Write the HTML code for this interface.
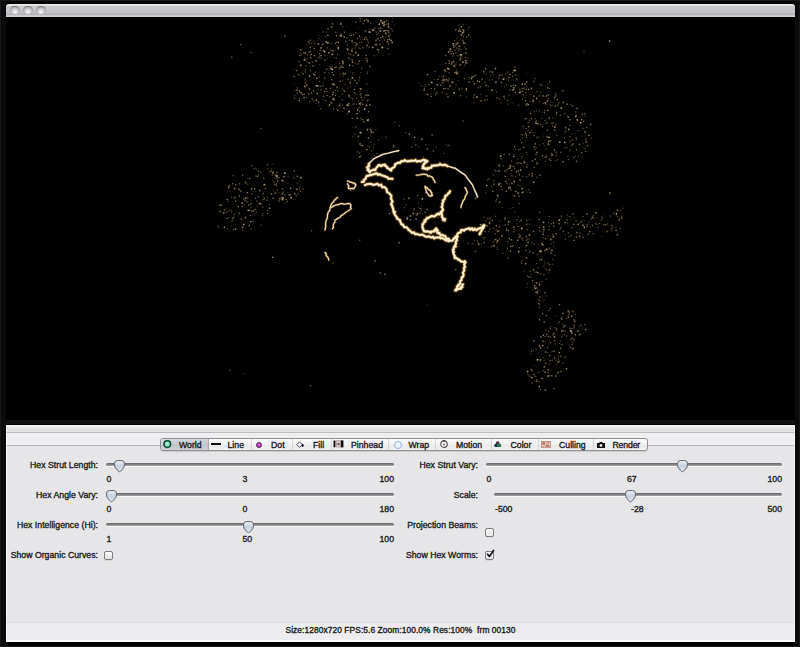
<!DOCTYPE html>
<html><head><meta charset="utf-8">
<style>
*{margin:0;padding:0;box-sizing:border-box}
html,body{width:800px;height:647px;overflow:hidden;background:#0b0a0c}
body{position:relative;font-family:"Liberation Sans",sans-serif;color:#1e1e1e}
.a{position:absolute}
.t{position:absolute;font-size:8.7px;line-height:10px;white-space:pre;letter-spacing:0.02px;color:#1c1c1c;-webkit-text-stroke:0.35px #1c1c1c}
.r{text-align:right}
#title{left:6px;top:4px;width:789px;height:13px;border-radius:3px 3px 0 0;
 background:linear-gradient(#ededef 0px,#e2e2e4 1.5px,#cac9cc 2.5px,#c5c4c7 8px,#b5b4b7 10.5px,#cbcacd 11.5px,#d2d1d4 13px)}
.btn{position:absolute;top:6px;width:7.8px;height:7.8px;border-radius:50%;
 background:radial-gradient(circle at 50% 70%,#f8f8fa 0,#dcdce0 35%,#b4b4b8 70%,#8c8c90 100%);
 box-shadow:0 -0.5px 0 0.5px #7c7c80}
#viz{left:6px;top:17px;width:789px;height:408px;background:#000;overflow:hidden}
#panel{left:6px;top:425px;width:789px;height:216px;background:#e6e5e7}
.track{position:absolute;height:3.5px;border-radius:2px;background:linear-gradient(#646466,#858587 55%,#a8a8aa);box-shadow:0 1px 0 rgba(255,255,255,0.8)}
.thumb{position:absolute;width:11px;height:12px}
.cb{position:absolute;width:9px;height:9px;border-radius:2px;border:1px solid #7e7e82;background:linear-gradient(#f8f8f8,#e4e4e6);box-shadow:0 0.5px 0.5px rgba(0,0,0,0.15)}
.seg{position:absolute;top:438px;height:13px}
.div{position:absolute;top:439px;width:1px;height:11px;background:#d4d4d6}
</style></head><body>
<div class="a" style="left:0;top:0;width:800px;height:1px;background:#1a191c"></div>
<div class="a" style="left:0;top:0;width:1px;height:647px;background:#18171a"></div>
<div class="a" style="left:799px;top:0;width:1px;height:647px;background:#18171a"></div>
<div class="a" style="left:0;top:646px;width:800px;height:1px;background:#19181b"></div>
<div class="a" style="left:6px;top:1px;width:789px;height:645px;background:#000"></div>
<div id="title" class="a">
 <div class="btn" style="left:5.4px;top:2.6px"></div>
 <div class="btn" style="left:18.2px;top:2.6px"></div>
 <div class="btn" style="left:31px;top:2.6px"></div>
</div>
<div id="viz" class="a"></div>
<svg class="a" style="left:0;top:0" width="800" height="647" viewBox="0 0 800 647">
<circle cx="323.1" cy="31.9" r="0.6" fill="#c8a878" fill-opacity="0.68"/><circle cx="348.5" cy="53.3" r="0.6" fill="#e0cca8" fill-opacity="0.35"/><circle cx="335.4" cy="95.5" r="0.8" fill="#b89868" fill-opacity="0.64"/><circle cx="353.0" cy="104.1" r="0.6" fill="#e0cca8" fill-opacity="0.75"/><circle cx="392.8" cy="21.6" r="0.8" fill="#a88c68" fill-opacity="0.33"/><circle cx="323.5" cy="96.3" r="0.9" fill="#c8a878" fill-opacity="0.41"/><circle cx="355.6" cy="52.6" r="0.9" fill="#b89868" fill-opacity="0.63"/><circle cx="359.5" cy="61.0" r="0.7" fill="#e0cca8" fill-opacity="0.66"/><circle cx="338.2" cy="42.6" r="0.9" fill="#d8bc90" fill-opacity="0.33"/><circle cx="310.4" cy="70.5" r="0.7" fill="#a88c68" fill-opacity="0.66"/><circle cx="367.1" cy="45.0" r="0.7" fill="#d8bc90" fill-opacity="0.70"/><circle cx="335.2" cy="90.3" r="0.6" fill="#c8a878" fill-opacity="0.76"/><circle cx="294.4" cy="76.6" r="0.8" fill="#c8a878" fill-opacity="0.37"/><circle cx="379.9" cy="44.4" r="0.8" fill="#d8bc90" fill-opacity="0.45"/><circle cx="353.5" cy="55.4" r="0.9" fill="#e0cca8" fill-opacity="0.42"/><circle cx="342.9" cy="80.9" r="0.7" fill="#a88c68" fill-opacity="0.42"/><circle cx="372.7" cy="47.3" r="0.9" fill="#e0cca8" fill-opacity="0.66"/><circle cx="297.4" cy="90.3" r="0.7" fill="#b89868" fill-opacity="0.51"/><circle cx="333.0" cy="99.6" r="0.8" fill="#d8bc90" fill-opacity="0.41"/><circle cx="349.2" cy="94.9" r="0.7" fill="#c8a878" fill-opacity="0.60"/><circle cx="315.7" cy="60.8" r="0.8" fill="#a88c68" fill-opacity="0.39"/><circle cx="390.4" cy="34.4" r="0.6" fill="#c8a878" fill-opacity="0.62"/><circle cx="312.6" cy="62.1" r="0.7" fill="#b89868" fill-opacity="0.59"/><circle cx="332.1" cy="69.4" r="0.9" fill="#e0cca8" fill-opacity="0.80"/><circle cx="343.2" cy="74.5" r="0.6" fill="#d8bc90" fill-opacity="0.49"/><circle cx="333.6" cy="57.5" r="0.6" fill="#c8a878" fill-opacity="0.44"/><circle cx="305.6" cy="52.9" r="0.7" fill="#e0cca8" fill-opacity="0.65"/><circle cx="353.8" cy="34.8" r="0.7" fill="#d8bc90" fill-opacity="0.54"/><circle cx="332.5" cy="23.8" r="0.9" fill="#e0cca8" fill-opacity="0.45"/><circle cx="339.5" cy="63.6" r="0.9" fill="#b89868" fill-opacity="0.40"/><circle cx="326.3" cy="41.8" r="0.9" fill="#e0cca8" fill-opacity="0.72"/><circle cx="344.4" cy="32.2" r="0.6" fill="#d8bc90" fill-opacity="0.67"/><circle cx="347.4" cy="105.1" r="0.9" fill="#d8bc90" fill-opacity="0.72"/><circle cx="319.3" cy="56.1" r="0.7" fill="#a88c68" fill-opacity="0.62"/><circle cx="344.5" cy="91.5" r="0.6" fill="#a88c68" fill-opacity="0.54"/><circle cx="313.2" cy="66.6" r="0.9" fill="#a88c68" fill-opacity="0.41"/><circle cx="319.6" cy="81.3" r="0.6" fill="#b89868" fill-opacity="0.70"/><circle cx="313.5" cy="41.2" r="0.7" fill="#a88c68" fill-opacity="0.43"/><circle cx="356.4" cy="98.5" r="0.6" fill="#d8bc90" fill-opacity="0.61"/><circle cx="361.1" cy="93.6" r="0.8" fill="#b89868" fill-opacity="0.52"/><circle cx="369.9" cy="66.5" r="0.9" fill="#c8a878" fill-opacity="0.47"/><circle cx="327.1" cy="91.4" r="0.7" fill="#a88c68" fill-opacity="0.53"/><circle cx="331.5" cy="103.7" r="0.6" fill="#e0cca8" fill-opacity="0.38"/><circle cx="308.8" cy="93.8" r="0.9" fill="#e0cca8" fill-opacity="0.45"/><circle cx="326.7" cy="69.2" r="0.8" fill="#d8bc90" fill-opacity="0.59"/><circle cx="340.1" cy="106.0" r="0.7" fill="#c8a878" fill-opacity="0.30"/><circle cx="375.9" cy="40.3" r="0.9" fill="#a88c68" fill-opacity="0.59"/><circle cx="314.9" cy="75.0" r="0.7" fill="#e0cca8" fill-opacity="0.62"/><circle cx="322.1" cy="58.0" r="0.6" fill="#c8a878" fill-opacity="0.37"/><circle cx="330.7" cy="102.5" r="0.6" fill="#d8bc90" fill-opacity="0.57"/><circle cx="340.3" cy="35.8" r="0.7" fill="#d8bc90" fill-opacity="0.44"/><circle cx="307.4" cy="58.9" r="0.6" fill="#b89868" fill-opacity="0.37"/><circle cx="319.8" cy="64.7" r="0.7" fill="#a88c68" fill-opacity="0.42"/><circle cx="301.1" cy="72.0" r="0.6" fill="#d8bc90" fill-opacity="0.35"/><circle cx="350.7" cy="86.7" r="0.8" fill="#c8a878" fill-opacity="0.34"/><circle cx="349.9" cy="64.7" r="0.7" fill="#a88c68" fill-opacity="0.46"/><circle cx="331.1" cy="68.3" r="0.9" fill="#e0cca8" fill-opacity="0.63"/><circle cx="364.5" cy="98.1" r="0.8" fill="#c8a878" fill-opacity="0.33"/><circle cx="348.9" cy="103.7" r="0.9" fill="#d8bc90" fill-opacity="0.58"/><circle cx="304.3" cy="60.0" r="0.9" fill="#b89868" fill-opacity="0.62"/><circle cx="298.7" cy="74.7" r="0.7" fill="#c8a878" fill-opacity="0.67"/><circle cx="305.3" cy="83.0" r="0.7" fill="#b89868" fill-opacity="0.43"/><circle cx="336.1" cy="63.0" r="0.8" fill="#b89868" fill-opacity="0.30"/><circle cx="304.5" cy="58.0" r="0.6" fill="#e0cca8" fill-opacity="0.55"/><circle cx="310.3" cy="47.5" r="0.8" fill="#a88c68" fill-opacity="0.68"/><circle cx="349.9" cy="59.3" r="0.7" fill="#e0cca8" fill-opacity="0.38"/><circle cx="361.6" cy="68.5" r="0.6" fill="#c8a878" fill-opacity="0.75"/><circle cx="293.9" cy="91.2" r="0.6" fill="#c8a878" fill-opacity="0.32"/><circle cx="334.7" cy="100.2" r="0.6" fill="#c8a878" fill-opacity="0.66"/><circle cx="350.1" cy="83.2" r="0.9" fill="#c8a878" fill-opacity="0.41"/><circle cx="366.9" cy="60.3" r="0.9" fill="#b89868" fill-opacity="0.72"/><circle cx="360.2" cy="94.4" r="0.8" fill="#b89868" fill-opacity="0.34"/><circle cx="294.7" cy="98.2" r="0.7" fill="#a88c68" fill-opacity="0.67"/><circle cx="347.4" cy="104.6" r="0.8" fill="#c8a878" fill-opacity="0.51"/><circle cx="345.9" cy="41.6" r="0.7" fill="#e0cca8" fill-opacity="0.51"/><circle cx="322.6" cy="44.7" r="0.7" fill="#a88c68" fill-opacity="0.74"/><circle cx="341.7" cy="35.6" r="0.6" fill="#e0cca8" fill-opacity="0.51"/><circle cx="367.3" cy="71.8" r="0.9" fill="#a88c68" fill-opacity="0.32"/><circle cx="388.3" cy="26.3" r="0.7" fill="#e0cca8" fill-opacity="0.79"/><circle cx="339.2" cy="96.8" r="0.8" fill="#a88c68" fill-opacity="0.31"/><circle cx="324.7" cy="91.3" r="0.7" fill="#e0cca8" fill-opacity="0.66"/><circle cx="333.3" cy="51.1" r="0.6" fill="#e0cca8" fill-opacity="0.74"/><circle cx="297.3" cy="87.9" r="0.7" fill="#b89868" fill-opacity="0.68"/><circle cx="301.3" cy="92.8" r="0.9" fill="#b89868" fill-opacity="0.72"/><circle cx="318.6" cy="43.7" r="0.8" fill="#a88c68" fill-opacity="0.50"/><circle cx="305.9" cy="65.9" r="0.8" fill="#b89868" fill-opacity="0.38"/><circle cx="324.6" cy="51.5" r="0.9" fill="#e0cca8" fill-opacity="0.76"/><circle cx="340.3" cy="67.6" r="0.8" fill="#b89868" fill-opacity="0.63"/><circle cx="299.8" cy="55.5" r="0.8" fill="#c8a878" fill-opacity="0.65"/><circle cx="319.0" cy="38.6" r="0.7" fill="#e0cca8" fill-opacity="0.46"/><circle cx="362.8" cy="100.4" r="0.8" fill="#d8bc90" fill-opacity="0.32"/><circle cx="391.8" cy="29.1" r="0.8" fill="#c8a878" fill-opacity="0.42"/><circle cx="297.3" cy="92.8" r="0.7" fill="#a88c68" fill-opacity="0.68"/><circle cx="368.3" cy="95.2" r="0.7" fill="#d8bc90" fill-opacity="0.68"/><circle cx="344.0" cy="90.6" r="0.8" fill="#b89868" fill-opacity="0.67"/><circle cx="349.2" cy="96.7" r="0.8" fill="#b89868" fill-opacity="0.68"/><circle cx="307.6" cy="54.7" r="0.6" fill="#b89868" fill-opacity="0.64"/><circle cx="345.4" cy="73.4" r="0.8" fill="#d8bc90" fill-opacity="0.58"/><circle cx="341.8" cy="66.9" r="0.6" fill="#b89868" fill-opacity="0.77"/><circle cx="368.4" cy="42.8" r="0.8" fill="#c8a878" fill-opacity="0.56"/><circle cx="365.4" cy="30.9" r="0.9" fill="#a88c68" fill-opacity="0.65"/><circle cx="337.6" cy="54.3" r="0.6" fill="#c8a878" fill-opacity="0.47"/><circle cx="358.0" cy="27.6" r="0.6" fill="#a88c68" fill-opacity="0.33"/><circle cx="366.9" cy="46.5" r="0.7" fill="#d8bc90" fill-opacity="0.32"/><circle cx="359.0" cy="80.1" r="0.7" fill="#b89868" fill-opacity="0.67"/><circle cx="342.5" cy="61.5" r="0.8" fill="#b89868" fill-opacity="0.79"/><circle cx="388.8" cy="36.3" r="0.8" fill="#d8bc90" fill-opacity="0.70"/><circle cx="338.2" cy="49.3" r="0.7" fill="#a88c68" fill-opacity="0.60"/><circle cx="313.8" cy="74.3" r="0.7" fill="#e0cca8" fill-opacity="0.76"/><circle cx="390.4" cy="28.4" r="0.7" fill="#d8bc90" fill-opacity="0.34"/><circle cx="313.5" cy="100.7" r="0.8" fill="#c8a878" fill-opacity="0.46"/><circle cx="338.3" cy="48.3" r="0.8" fill="#e0cca8" fill-opacity="0.79"/><circle cx="327.0" cy="95.5" r="0.8" fill="#d8bc90" fill-opacity="0.53"/><circle cx="380.8" cy="28.2" r="0.9" fill="#a88c68" fill-opacity="0.70"/><circle cx="382.0" cy="47.2" r="0.9" fill="#b89868" fill-opacity="0.55"/><circle cx="327.4" cy="58.7" r="0.6" fill="#c8a878" fill-opacity="0.32"/><circle cx="299.3" cy="100.7" r="0.7" fill="#d8bc90" fill-opacity="0.75"/><circle cx="314.3" cy="43.1" r="0.6" fill="#c8a878" fill-opacity="0.66"/><circle cx="332.2" cy="103.0" r="0.9" fill="#a88c68" fill-opacity="0.31"/><circle cx="358.6" cy="101.0" r="0.7" fill="#c8a878" fill-opacity="0.36"/><circle cx="364.5" cy="20.8" r="0.7" fill="#e0cca8" fill-opacity="0.69"/><circle cx="384.1" cy="31.0" r="0.9" fill="#c8a878" fill-opacity="0.69"/><circle cx="322.9" cy="86.0" r="0.7" fill="#b89868" fill-opacity="0.79"/><circle cx="355.9" cy="45.5" r="0.9" fill="#b89868" fill-opacity="0.47"/><circle cx="309.9" cy="101.5" r="0.6" fill="#d8bc90" fill-opacity="0.67"/><circle cx="337.2" cy="32.7" r="0.7" fill="#d8bc90" fill-opacity="0.31"/><circle cx="310.1" cy="40.3" r="0.7" fill="#d8bc90" fill-opacity="0.69"/><circle cx="365.4" cy="58.1" r="0.6" fill="#b89868" fill-opacity="0.65"/><circle cx="331.1" cy="50.5" r="0.7" fill="#e0cca8" fill-opacity="0.68"/><circle cx="387.1" cy="30.4" r="0.6" fill="#b89868" fill-opacity="0.75"/><circle cx="379.5" cy="40.5" r="0.6" fill="#d8bc90" fill-opacity="0.58"/><circle cx="336.2" cy="58.2" r="0.8" fill="#d8bc90" fill-opacity="0.41"/><circle cx="384.6" cy="21.8" r="0.9" fill="#d8bc90" fill-opacity="0.64"/><circle cx="333.0" cy="99.0" r="0.7" fill="#e0cca8" fill-opacity="0.63"/><circle cx="392.2" cy="42.5" r="0.9" fill="#c8a878" fill-opacity="0.69"/><circle cx="348.1" cy="79.6" r="0.7" fill="#c8a878" fill-opacity="0.71"/><circle cx="354.3" cy="89.4" r="0.6" fill="#d8bc90" fill-opacity="0.72"/><circle cx="294.7" cy="95.8" r="0.7" fill="#d8bc90" fill-opacity="0.42"/><circle cx="358.5" cy="48.0" r="0.6" fill="#e0cca8" fill-opacity="0.36"/><circle cx="356.9" cy="83.2" r="0.9" fill="#e0cca8" fill-opacity="0.45"/><circle cx="343.2" cy="73.2" r="0.9" fill="#d8bc90" fill-opacity="0.43"/><circle cx="324.8" cy="60.0" r="0.8" fill="#b89868" fill-opacity="0.75"/><circle cx="318.2" cy="40.5" r="0.6" fill="#b89868" fill-opacity="0.53"/><circle cx="340.1" cy="81.3" r="0.8" fill="#b89868" fill-opacity="0.71"/><circle cx="359.5" cy="103.8" r="0.6" fill="#a88c68" fill-opacity="0.31"/><circle cx="324.5" cy="55.8" r="0.8" fill="#c8a878" fill-opacity="0.33"/><circle cx="344.6" cy="37.3" r="0.6" fill="#b89868" fill-opacity="0.49"/><circle cx="376.0" cy="44.2" r="0.8" fill="#c8a878" fill-opacity="0.65"/><circle cx="319.1" cy="105.7" r="0.6" fill="#d8bc90" fill-opacity="0.32"/><circle cx="310.1" cy="51.7" r="0.8" fill="#c8a878" fill-opacity="0.79"/><circle cx="306.8" cy="61.4" r="0.7" fill="#c8a878" fill-opacity="0.39"/><circle cx="389.2" cy="54.3" r="0.8" fill="#d8bc90" fill-opacity="0.32"/><circle cx="366.4" cy="19.8" r="0.8" fill="#e0cca8" fill-opacity="0.53"/><circle cx="329.0" cy="49.4" r="0.6" fill="#a88c68" fill-opacity="0.39"/><circle cx="320.3" cy="50.6" r="0.7" fill="#e0cca8" fill-opacity="0.57"/><circle cx="387.4" cy="41.5" r="0.8" fill="#c8a878" fill-opacity="0.76"/><circle cx="329.6" cy="104.9" r="0.8" fill="#d8bc90" fill-opacity="0.75"/><circle cx="379.4" cy="24.2" r="0.9" fill="#e0cca8" fill-opacity="0.72"/><circle cx="370.6" cy="22.9" r="0.7" fill="#e0cca8" fill-opacity="0.48"/><circle cx="385.6" cy="37.0" r="0.7" fill="#a88c68" fill-opacity="0.39"/><circle cx="328.6" cy="42.9" r="0.7" fill="#c8a878" fill-opacity="0.65"/><circle cx="316.5" cy="86.0" r="0.9" fill="#e0cca8" fill-opacity="0.45"/><circle cx="388.4" cy="24.0" r="0.9" fill="#a88c68" fill-opacity="0.78"/><circle cx="327.6" cy="43.1" r="0.7" fill="#b89868" fill-opacity="0.63"/><circle cx="387.9" cy="31.8" r="0.6" fill="#a88c68" fill-opacity="0.56"/><circle cx="352.2" cy="51.0" r="0.7" fill="#c8a878" fill-opacity="0.54"/><circle cx="372.7" cy="30.1" r="0.9" fill="#e0cca8" fill-opacity="0.71"/><circle cx="299.3" cy="61.7" r="0.9" fill="#b89868" fill-opacity="0.45"/><circle cx="311.6" cy="54.4" r="0.6" fill="#d8bc90" fill-opacity="0.77"/><circle cx="367.1" cy="95.0" r="0.7" fill="#e0cca8" fill-opacity="0.47"/><circle cx="375.2" cy="44.7" r="0.8" fill="#c8a878" fill-opacity="0.36"/><circle cx="366.8" cy="39.0" r="0.7" fill="#c8a878" fill-opacity="0.65"/><circle cx="304.0" cy="98.4" r="0.7" fill="#b89868" fill-opacity="0.55"/><circle cx="344.1" cy="36.7" r="0.8" fill="#e0cca8" fill-opacity="0.65"/><circle cx="342.4" cy="88.9" r="0.7" fill="#a88c68" fill-opacity="0.33"/><circle cx="318.1" cy="89.4" r="0.6" fill="#d8bc90" fill-opacity="0.43"/><circle cx="352.5" cy="77.8" r="0.9" fill="#d8bc90" fill-opacity="0.73"/><circle cx="315.5" cy="72.2" r="0.6" fill="#d8bc90" fill-opacity="0.46"/><circle cx="359.9" cy="37.4" r="0.6" fill="#a88c68" fill-opacity="0.46"/><circle cx="330.4" cy="68.2" r="0.6" fill="#c8a878" fill-opacity="0.78"/><circle cx="305.3" cy="83.4" r="0.7" fill="#a88c68" fill-opacity="0.39"/><circle cx="320.8" cy="108.7" r="0.8" fill="#d8bc90" fill-opacity="0.42"/><circle cx="332.7" cy="50.5" r="0.7" fill="#d8bc90" fill-opacity="0.44"/><circle cx="327.6" cy="35.3" r="0.8" fill="#e0cca8" fill-opacity="0.43"/><circle cx="329.8" cy="96.5" r="0.8" fill="#b89868" fill-opacity="0.53"/><circle cx="341.1" cy="34.1" r="0.7" fill="#e0cca8" fill-opacity="0.76"/><circle cx="359.6" cy="103.6" r="0.9" fill="#d8bc90" fill-opacity="0.74"/><circle cx="329.8" cy="66.5" r="0.6" fill="#c8a878" fill-opacity="0.62"/><circle cx="346.5" cy="105.1" r="0.6" fill="#b89868" fill-opacity="0.36"/><circle cx="376.1" cy="31.9" r="0.9" fill="#a88c68" fill-opacity="0.43"/><circle cx="332.8" cy="94.6" r="0.9" fill="#e0cca8" fill-opacity="0.50"/><circle cx="310.2" cy="55.1" r="0.6" fill="#c8a878" fill-opacity="0.66"/><circle cx="294.3" cy="69.5" r="0.6" fill="#d8bc90" fill-opacity="0.30"/><circle cx="374.6" cy="27.9" r="0.9" fill="#d8bc90" fill-opacity="0.32"/><circle cx="352.3" cy="48.5" r="0.9" fill="#a88c68" fill-opacity="0.35"/><circle cx="331.7" cy="79.8" r="0.7" fill="#c8a878" fill-opacity="0.73"/><circle cx="341.3" cy="36.1" r="0.9" fill="#e0cca8" fill-opacity="0.50"/><circle cx="336.5" cy="35.5" r="0.8" fill="#b89868" fill-opacity="0.75"/><circle cx="305.6" cy="59.7" r="0.6" fill="#a88c68" fill-opacity="0.78"/><circle cx="355.7" cy="22.2" r="0.6" fill="#d8bc90" fill-opacity="0.73"/><circle cx="340.8" cy="23.9" r="0.9" fill="#d8bc90" fill-opacity="0.72"/><circle cx="394.1" cy="24.9" r="0.6" fill="#a88c68" fill-opacity="0.42"/><circle cx="368.6" cy="99.8" r="0.7" fill="#b89868" fill-opacity="0.38"/><circle cx="342.5" cy="105.3" r="0.7" fill="#d8bc90" fill-opacity="0.45"/><circle cx="370.2" cy="32.2" r="0.9" fill="#e0cca8" fill-opacity="0.49"/><circle cx="369.2" cy="32.0" r="0.9" fill="#c8a878" fill-opacity="0.71"/><circle cx="309.5" cy="42.8" r="0.8" fill="#e0cca8" fill-opacity="0.36"/><circle cx="362.8" cy="104.3" r="0.9" fill="#a88c68" fill-opacity="0.64"/><circle cx="300.4" cy="65.5" r="0.9" fill="#a88c68" fill-opacity="0.55"/><circle cx="356.6" cy="104.1" r="0.6" fill="#c8a878" fill-opacity="0.64"/><circle cx="356.1" cy="53.0" r="0.8" fill="#d8bc90" fill-opacity="0.44"/><circle cx="326.0" cy="89.1" r="0.9" fill="#e0cca8" fill-opacity="0.43"/><circle cx="368.1" cy="21.7" r="0.7" fill="#e0cca8" fill-opacity="0.58"/><circle cx="350.9" cy="79.5" r="0.6" fill="#e0cca8" fill-opacity="0.34"/><circle cx="348.8" cy="57.9" r="0.8" fill="#a88c68" fill-opacity="0.70"/><circle cx="360.3" cy="21.1" r="0.8" fill="#a88c68" fill-opacity="0.53"/><circle cx="301.6" cy="54.8" r="0.9" fill="#c8a878" fill-opacity="0.37"/><circle cx="349.2" cy="35.6" r="0.6" fill="#e0cca8" fill-opacity="0.33"/><circle cx="303.0" cy="73.9" r="0.9" fill="#c8a878" fill-opacity="0.53"/><circle cx="335.4" cy="43.3" r="0.6" fill="#b89868" fill-opacity="0.76"/><circle cx="346.8" cy="48.7" r="0.8" fill="#e0cca8" fill-opacity="0.31"/><circle cx="318.8" cy="102.1" r="0.8" fill="#a88c68" fill-opacity="0.70"/><circle cx="336.3" cy="42.2" r="0.6" fill="#b89868" fill-opacity="0.75"/><circle cx="388.9" cy="35.2" r="0.8" fill="#b89868" fill-opacity="0.38"/><circle cx="343.3" cy="76.0" r="0.8" fill="#b89868" fill-opacity="0.42"/><circle cx="327.2" cy="47.9" r="0.7" fill="#b89868" fill-opacity="0.78"/><circle cx="367.4" cy="58.6" r="0.7" fill="#b89868" fill-opacity="0.57"/><circle cx="323.3" cy="82.7" r="0.7" fill="#b89868" fill-opacity="0.41"/><circle cx="361.5" cy="42.3" r="0.9" fill="#c8a878" fill-opacity="0.42"/><circle cx="319.3" cy="77.0" r="0.7" fill="#b89868" fill-opacity="0.54"/><circle cx="381.4" cy="22.2" r="0.9" fill="#a88c68" fill-opacity="0.41"/><circle cx="369.2" cy="47.2" r="0.8" fill="#c8a878" fill-opacity="0.46"/><circle cx="312.3" cy="98.8" r="0.9" fill="#c8a878" fill-opacity="0.41"/><circle cx="337.2" cy="90.7" r="0.8" fill="#c8a878" fill-opacity="0.45"/><circle cx="333.5" cy="84.0" r="0.7" fill="#e0cca8" fill-opacity="0.67"/><circle cx="316.9" cy="78.2" r="0.9" fill="#e0cca8" fill-opacity="0.51"/><circle cx="326.6" cy="32.0" r="0.8" fill="#e0cca8" fill-opacity="0.33"/><circle cx="360.7" cy="72.8" r="0.7" fill="#b89868" fill-opacity="0.37"/><circle cx="293.8" cy="76.2" r="0.7" fill="#a88c68" fill-opacity="0.47"/><circle cx="354.6" cy="92.6" r="0.6" fill="#e0cca8" fill-opacity="0.38"/><circle cx="367.7" cy="40.0" r="0.6" fill="#e0cca8" fill-opacity="0.54"/><circle cx="317.9" cy="85.8" r="0.9" fill="#e0cca8" fill-opacity="0.69"/><circle cx="333.2" cy="92.5" r="0.9" fill="#d8bc90" fill-opacity="0.41"/><circle cx="346.6" cy="37.9" r="0.6" fill="#b89868" fill-opacity="0.65"/><circle cx="376.9" cy="34.5" r="0.8" fill="#d8bc90" fill-opacity="0.43"/><circle cx="342.3" cy="94.2" r="0.7" fill="#b89868" fill-opacity="0.60"/><circle cx="325.7" cy="100.7" r="0.8" fill="#a88c68" fill-opacity="0.42"/><circle cx="318.6" cy="35.7" r="0.6" fill="#a88c68" fill-opacity="0.42"/><circle cx="305.3" cy="79.1" r="0.7" fill="#b89868" fill-opacity="0.74"/><circle cx="360.9" cy="88.9" r="0.7" fill="#c8a878" fill-opacity="0.60"/><circle cx="332.6" cy="54.2" r="0.9" fill="#d8bc90" fill-opacity="0.51"/><circle cx="382.9" cy="23.2" r="0.9" fill="#d8bc90" fill-opacity="0.41"/><circle cx="329.7" cy="102.2" r="0.6" fill="#a88c68" fill-opacity="0.31"/><circle cx="345.3" cy="84.1" r="0.7" fill="#b89868" fill-opacity="0.64"/><circle cx="328.9" cy="52.7" r="0.9" fill="#d8bc90" fill-opacity="0.70"/><circle cx="360.2" cy="88.9" r="0.8" fill="#b89868" fill-opacity="0.80"/><circle cx="304.5" cy="59.8" r="0.8" fill="#a88c68" fill-opacity="0.52"/><circle cx="308.5" cy="41.8" r="0.7" fill="#a88c68" fill-opacity="0.75"/><circle cx="314.3" cy="48.5" r="0.8" fill="#b89868" fill-opacity="0.67"/><circle cx="328.1" cy="35.6" r="0.7" fill="#e0cca8" fill-opacity="0.53"/><circle cx="305.0" cy="53.5" r="0.7" fill="#e0cca8" fill-opacity="0.41"/><circle cx="367.4" cy="61.9" r="0.7" fill="#e0cca8" fill-opacity="0.48"/><circle cx="330.5" cy="88.2" r="0.8" fill="#d8bc90" fill-opacity="0.52"/><circle cx="357.9" cy="63.8" r="0.9" fill="#a88c68" fill-opacity="0.52"/><circle cx="334.3" cy="85.0" r="0.9" fill="#d8bc90" fill-opacity="0.48"/><circle cx="348.1" cy="88.0" r="0.7" fill="#a88c68" fill-opacity="0.53"/><circle cx="365.7" cy="95.3" r="0.8" fill="#b89868" fill-opacity="0.70"/><circle cx="355.4" cy="63.6" r="0.6" fill="#d8bc90" fill-opacity="0.35"/><circle cx="301.0" cy="53.3" r="0.7" fill="#e0cca8" fill-opacity="0.43"/><circle cx="353.0" cy="43.0" r="0.8" fill="#b89868" fill-opacity="0.34"/><circle cx="352.0" cy="51.1" r="0.9" fill="#e0cca8" fill-opacity="0.34"/><circle cx="309.5" cy="76.1" r="0.9" fill="#d8bc90" fill-opacity="0.74"/><circle cx="344.0" cy="108.4" r="0.8" fill="#b89868" fill-opacity="0.66"/><circle cx="309.5" cy="89.0" r="0.9" fill="#a88c68" fill-opacity="0.66"/><circle cx="296.7" cy="70.3" r="0.7" fill="#d8bc90" fill-opacity="0.44"/><circle cx="344.7" cy="74.5" r="0.6" fill="#a88c68" fill-opacity="0.76"/><circle cx="333.6" cy="108.9" r="0.7" fill="#d8bc90" fill-opacity="0.45"/><circle cx="336.0" cy="93.4" r="0.7" fill="#b89868" fill-opacity="0.31"/><circle cx="321.1" cy="55.6" r="0.9" fill="#e0cca8" fill-opacity="0.58"/><circle cx="332.6" cy="84.1" r="0.9" fill="#b89868" fill-opacity="0.77"/><circle cx="316.2" cy="85.3" r="0.6" fill="#e0cca8" fill-opacity="0.69"/><circle cx="311.4" cy="93.0" r="0.7" fill="#d8bc90" fill-opacity="0.64"/><circle cx="304.7" cy="86.4" r="0.9" fill="#d8bc90" fill-opacity="0.77"/><circle cx="339.8" cy="76.5" r="0.6" fill="#d8bc90" fill-opacity="0.31"/><circle cx="328.7" cy="73.0" r="0.8" fill="#b89868" fill-opacity="0.32"/><circle cx="337.4" cy="45.4" r="0.6" fill="#c8a878" fill-opacity="0.39"/><circle cx="377.9" cy="49.7" r="0.9" fill="#e0cca8" fill-opacity="0.63"/><circle cx="327.7" cy="42.8" r="0.8" fill="#d8bc90" fill-opacity="0.75"/><circle cx="318.3" cy="44.0" r="0.9" fill="#a88c68" fill-opacity="0.67"/><circle cx="333.3" cy="75.0" r="0.7" fill="#e0cca8" fill-opacity="0.78"/><circle cx="299.6" cy="91.9" r="0.8" fill="#b89868" fill-opacity="0.64"/><circle cx="304.3" cy="94.3" r="0.7" fill="#c8a878" fill-opacity="0.57"/><circle cx="359.3" cy="42.6" r="0.7" fill="#d8bc90" fill-opacity="0.45"/><circle cx="313.5" cy="90.8" r="0.8" fill="#b89868" fill-opacity="0.79"/><circle cx="304.1" cy="97.3" r="0.8" fill="#b89868" fill-opacity="0.71"/><circle cx="360.7" cy="95.7" r="0.6" fill="#e0cca8" fill-opacity="0.31"/><circle cx="306.5" cy="81.3" r="0.6" fill="#d8bc90" fill-opacity="0.47"/><circle cx="333.8" cy="98.7" r="0.9" fill="#e0cca8" fill-opacity="0.54"/><circle cx="335.6" cy="32.3" r="0.8" fill="#b89868" fill-opacity="0.47"/><circle cx="350.9" cy="97.7" r="0.6" fill="#c8a878" fill-opacity="0.53"/><circle cx="336.2" cy="66.1" r="0.6" fill="#a88c68" fill-opacity="0.40"/><circle cx="330.0" cy="56.9" r="0.7" fill="#b89868" fill-opacity="0.33"/><circle cx="359.6" cy="77.5" r="0.7" fill="#c8a878" fill-opacity="0.58"/><circle cx="357.6" cy="110.0" r="0.7" fill="#e0cca8" fill-opacity="0.79"/><circle cx="343.6" cy="62.7" r="0.6" fill="#d8bc90" fill-opacity="0.65"/><circle cx="323.3" cy="99.5" r="0.7" fill="#b89868" fill-opacity="0.40"/><circle cx="345.3" cy="91.7" r="0.7" fill="#a88c68" fill-opacity="0.33"/><circle cx="334.9" cy="67.6" r="0.7" fill="#e0cca8" fill-opacity="0.63"/><circle cx="374.1" cy="55.7" r="0.7" fill="#a88c68" fill-opacity="0.56"/><circle cx="340.2" cy="104.1" r="0.8" fill="#c8a878" fill-opacity="0.38"/><circle cx="323.4" cy="51.0" r="0.9" fill="#e0cca8" fill-opacity="0.45"/><circle cx="359.9" cy="91.4" r="0.6" fill="#d8bc90" fill-opacity="0.48"/><circle cx="361.3" cy="89.0" r="0.6" fill="#a88c68" fill-opacity="0.58"/><circle cx="353.0" cy="72.9" r="0.7" fill="#d8bc90" fill-opacity="0.52"/><circle cx="359.4" cy="35.9" r="0.7" fill="#d8bc90" fill-opacity="0.79"/><circle cx="369.6" cy="28.8" r="0.6" fill="#c8a878" fill-opacity="0.47"/><circle cx="360.1" cy="48.6" r="0.7" fill="#c8a878" fill-opacity="0.63"/><circle cx="347.6" cy="45.0" r="0.7" fill="#e0cca8" fill-opacity="0.40"/><circle cx="319.5" cy="53.7" r="0.7" fill="#d8bc90" fill-opacity="0.55"/><circle cx="296.9" cy="71.0" r="0.6" fill="#e0cca8" fill-opacity="0.51"/><circle cx="354.4" cy="104.0" r="0.7" fill="#d8bc90" fill-opacity="0.38"/><circle cx="331.8" cy="26.9" r="0.9" fill="#d8bc90" fill-opacity="0.58"/><circle cx="299.5" cy="98.5" r="0.8" fill="#b89868" fill-opacity="0.39"/><circle cx="364.6" cy="39.4" r="0.7" fill="#e0cca8" fill-opacity="0.69"/><circle cx="294.1" cy="84.6" r="0.6" fill="#b89868" fill-opacity="0.36"/><circle cx="363.2" cy="23.8" r="0.7" fill="#d8bc90" fill-opacity="0.46"/><circle cx="337.7" cy="110.3" r="0.9" fill="#b89868" fill-opacity="0.77"/><circle cx="368.2" cy="20.4" r="0.9" fill="#b89868" fill-opacity="0.59"/><circle cx="373.5" cy="30.0" r="0.9" fill="#a88c68" fill-opacity="0.71"/><circle cx="306.4" cy="97.4" r="0.7" fill="#c8a878" fill-opacity="0.49"/><circle cx="324.7" cy="72.7" r="0.8" fill="#c8a878" fill-opacity="0.52"/><circle cx="302.7" cy="94.3" r="0.9" fill="#b89868" fill-opacity="0.65"/><circle cx="352.2" cy="59.9" r="0.9" fill="#a88c68" fill-opacity="0.57"/><circle cx="355.2" cy="48.1" r="0.9" fill="#a88c68" fill-opacity="0.45"/><circle cx="361.5" cy="97.3" r="0.9" fill="#c8a878" fill-opacity="0.52"/><circle cx="347.8" cy="49.4" r="0.9" fill="#d8bc90" fill-opacity="0.72"/><circle cx="324.9" cy="78.1" r="0.8" fill="#b89868" fill-opacity="0.60"/><circle cx="375.9" cy="44.8" r="0.7" fill="#a88c68" fill-opacity="0.54"/><circle cx="336.0" cy="67.6" r="0.6" fill="#e0cca8" fill-opacity="0.53"/><circle cx="296.3" cy="90.2" r="0.9" fill="#c8a878" fill-opacity="0.41"/><circle cx="352.2" cy="40.3" r="0.7" fill="#a88c68" fill-opacity="0.68"/><circle cx="360.6" cy="103.0" r="0.8" fill="#c8a878" fill-opacity="0.33"/><circle cx="348.9" cy="95.5" r="0.8" fill="#c8a878" fill-opacity="0.47"/><circle cx="384.0" cy="38.0" r="0.6" fill="#b89868" fill-opacity="0.60"/><circle cx="338.3" cy="42.0" r="0.7" fill="#b89868" fill-opacity="0.57"/><circle cx="299.4" cy="90.6" r="0.6" fill="#c8a878" fill-opacity="0.71"/><circle cx="352.6" cy="98.6" r="0.8" fill="#a88c68" fill-opacity="0.65"/><circle cx="340.2" cy="74.1" r="0.7" fill="#b89868" fill-opacity="0.61"/><circle cx="306.7" cy="85.2" r="0.9" fill="#d8bc90" fill-opacity="0.54"/><circle cx="332.3" cy="66.7" r="0.6" fill="#b89868" fill-opacity="0.48"/><circle cx="301.4" cy="75.2" r="0.7" fill="#a88c68" fill-opacity="0.32"/><circle cx="351.6" cy="50.3" r="0.6" fill="#c8a878" fill-opacity="0.78"/><circle cx="349.5" cy="40.2" r="0.7" fill="#a88c68" fill-opacity="0.51"/><circle cx="342.1" cy="99.8" r="0.6" fill="#e0cca8" fill-opacity="0.69"/><circle cx="382.6" cy="23.4" r="0.8" fill="#d8bc90" fill-opacity="0.55"/><circle cx="312.8" cy="65.5" r="0.6" fill="#b89868" fill-opacity="0.72"/><circle cx="358.3" cy="55.2" r="0.9" fill="#e0cca8" fill-opacity="0.72"/><circle cx="321.0" cy="47.9" r="0.8" fill="#e0cca8" fill-opacity="0.78"/><circle cx="378.0" cy="19.5" r="0.6" fill="#e0cca8" fill-opacity="0.38"/><circle cx="356.9" cy="43.9" r="0.9" fill="#c8a878" fill-opacity="0.72"/><circle cx="300.9" cy="49.8" r="0.7" fill="#d8bc90" fill-opacity="0.77"/><circle cx="340.2" cy="35.7" r="0.9" fill="#e0cca8" fill-opacity="0.42"/><circle cx="360.1" cy="18.5" r="0.8" fill="#e0cca8" fill-opacity="0.59"/><circle cx="316.4" cy="100.1" r="0.9" fill="#d8bc90" fill-opacity="0.69"/><circle cx="309.2" cy="63.0" r="0.9" fill="#d8bc90" fill-opacity="0.47"/><circle cx="338.3" cy="47.4" r="0.9" fill="#b89868" fill-opacity="0.69"/><circle cx="355.5" cy="32.8" r="0.8" fill="#a88c68" fill-opacity="0.55"/><circle cx="367.3" cy="73.3" r="0.6" fill="#b89868" fill-opacity="0.67"/><circle cx="318.8" cy="58.1" r="0.6" fill="#d8bc90" fill-opacity="0.53"/><circle cx="378.7" cy="52.0" r="0.6" fill="#c8a878" fill-opacity="0.80"/><circle cx="328.3" cy="105.7" r="0.6" fill="#a88c68" fill-opacity="0.62"/><circle cx="357.5" cy="38.5" r="0.7" fill="#d8bc90" fill-opacity="0.59"/><circle cx="311.8" cy="43.1" r="0.6" fill="#d8bc90" fill-opacity="0.55"/><circle cx="382.9" cy="22.2" r="0.9" fill="#d8bc90" fill-opacity="0.46"/><circle cx="392.6" cy="18.3" r="0.6" fill="#b89868" fill-opacity="0.41"/><circle cx="310.8" cy="57.7" r="0.9" fill="#d8bc90" fill-opacity="0.37"/><circle cx="351.2" cy="35.4" r="0.7" fill="#e0cca8" fill-opacity="0.64"/><circle cx="364.9" cy="37.4" r="0.8" fill="#d8bc90" fill-opacity="0.40"/><circle cx="353.0" cy="65.8" r="0.7" fill="#d8bc90" fill-opacity="0.48"/><circle cx="354.9" cy="80.3" r="0.9" fill="#a88c68" fill-opacity="0.70"/><circle cx="366.1" cy="55.3" r="0.7" fill="#d8bc90" fill-opacity="0.63"/><circle cx="377.0" cy="45.3" r="0.8" fill="#b89868" fill-opacity="0.54"/><circle cx="382.5" cy="47.6" r="0.9" fill="#d8bc90" fill-opacity="0.75"/><circle cx="325.9" cy="36.3" r="0.6" fill="#a88c68" fill-opacity="0.60"/><circle cx="339.2" cy="68.6" r="0.9" fill="#a88c68" fill-opacity="0.41"/><circle cx="320.3" cy="86.5" r="0.7" fill="#b89868" fill-opacity="0.60"/><circle cx="342.9" cy="67.2" r="0.7" fill="#d8bc90" fill-opacity="0.79"/><circle cx="391.1" cy="40.4" r="0.9" fill="#d8bc90" fill-opacity="0.69"/><circle cx="317.2" cy="93.6" r="0.8" fill="#e0cca8" fill-opacity="0.74"/><circle cx="366.1" cy="37.1" r="0.6" fill="#a88c68" fill-opacity="0.77"/><circle cx="349.6" cy="65.5" r="0.7" fill="#e0cca8" fill-opacity="0.73"/><circle cx="341.1" cy="65.8" r="0.7" fill="#b89868" fill-opacity="0.56"/><circle cx="328.0" cy="28.8" r="0.9" fill="#e0cca8" fill-opacity="0.43"/><circle cx="305.3" cy="69.6" r="0.7" fill="#b89868" fill-opacity="0.53"/><circle cx="332.1" cy="54.7" r="0.9" fill="#a88c68" fill-opacity="0.59"/><circle cx="331.5" cy="102.4" r="0.6" fill="#a88c68" fill-opacity="0.36"/><circle cx="308.5" cy="52.3" r="0.7" fill="#b89868" fill-opacity="0.46"/><circle cx="301.2" cy="64.6" r="0.7" fill="#b89868" fill-opacity="0.54"/><circle cx="314.3" cy="55.7" r="0.8" fill="#c8a878" fill-opacity="0.80"/><circle cx="342.5" cy="26.5" r="0.8" fill="#c8a878" fill-opacity="0.36"/><circle cx="380.8" cy="20.6" r="0.9" fill="#e0cca8" fill-opacity="0.79"/><circle cx="355.1" cy="42.4" r="0.6" fill="#c8a878" fill-opacity="0.75"/><circle cx="352.0" cy="41.5" r="0.9" fill="#e0cca8" fill-opacity="0.46"/><circle cx="387.7" cy="48.6" r="0.9" fill="#b89868" fill-opacity="0.56"/><circle cx="305.4" cy="72.3" r="0.7" fill="#a88c68" fill-opacity="0.50"/><circle cx="316.5" cy="61.1" r="0.9" fill="#b89868" fill-opacity="0.56"/><circle cx="320.1" cy="57.8" r="0.9" fill="#a88c68" fill-opacity="0.43"/><circle cx="301.0" cy="65.8" r="0.6" fill="#b89868" fill-opacity="0.77"/><circle cx="350.5" cy="81.9" r="0.8" fill="#a88c68" fill-opacity="0.56"/><circle cx="335.8" cy="67.0" r="0.6" fill="#c8a878" fill-opacity="0.51"/><circle cx="322.8" cy="44.0" r="0.8" fill="#a88c68" fill-opacity="0.36"/><circle cx="332.2" cy="72.5" r="0.7" fill="#d8bc90" fill-opacity="0.68"/><circle cx="376.9" cy="39.7" r="0.7" fill="#c8a878" fill-opacity="0.40"/><circle cx="321.2" cy="90.0" r="0.8" fill="#b89868" fill-opacity="0.74"/><circle cx="337.1" cy="87.1" r="0.9" fill="#c8a878" fill-opacity="0.62"/><circle cx="303.8" cy="52.7" r="0.8" fill="#d8bc90" fill-opacity="0.58"/><circle cx="355.4" cy="93.6" r="0.6" fill="#d8bc90" fill-opacity="0.52"/><circle cx="367.0" cy="83.8" r="0.7" fill="#e0cca8" fill-opacity="0.41"/><circle cx="385.3" cy="30.4" r="0.7" fill="#e0cca8" fill-opacity="0.63"/><circle cx="339.4" cy="105.5" r="0.8" fill="#c8a878" fill-opacity="0.80"/><circle cx="350.5" cy="54.4" r="0.9" fill="#b89868" fill-opacity="0.57"/><circle cx="362.7" cy="47.7" r="0.7" fill="#a88c68" fill-opacity="0.75"/><circle cx="331.1" cy="43.6" r="0.8" fill="#d8bc90" fill-opacity="0.40"/><circle cx="342.8" cy="61.4" r="0.8" fill="#d8bc90" fill-opacity="0.45"/><circle cx="304.1" cy="70.8" r="0.6" fill="#c8a878" fill-opacity="0.46"/><circle cx="388.3" cy="44.5" r="0.6" fill="#e0cca8" fill-opacity="0.55"/><circle cx="384.8" cy="40.0" r="0.8" fill="#d8bc90" fill-opacity="0.36"/><circle cx="352.5" cy="62.2" r="0.9" fill="#c8a878" fill-opacity="0.71"/><circle cx="342.8" cy="63.8" r="0.8" fill="#d8bc90" fill-opacity="0.71"/><circle cx="352.5" cy="136.2" r="0.6" fill="#e0cca8" fill-opacity="0.42"/><circle cx="367.9" cy="128.8" r="0.6" fill="#a88c68" fill-opacity="0.78"/><circle cx="352.8" cy="127.1" r="0.7" fill="#e0cca8" fill-opacity="0.35"/><circle cx="360.9" cy="132.9" r="0.9" fill="#c8a878" fill-opacity="0.49"/><circle cx="362.5" cy="145.6" r="0.9" fill="#d8bc90" fill-opacity="0.55"/><circle cx="374.1" cy="144.2" r="0.8" fill="#a88c68" fill-opacity="0.38"/><circle cx="376.0" cy="129.8" r="0.6" fill="#a88c68" fill-opacity="0.57"/><circle cx="346.9" cy="114.0" r="0.7" fill="#b89868" fill-opacity="0.52"/><circle cx="348.5" cy="105.7" r="0.7" fill="#c8a878" fill-opacity="0.68"/><circle cx="361.0" cy="102.7" r="0.8" fill="#c8a878" fill-opacity="0.38"/><circle cx="370.3" cy="129.4" r="0.7" fill="#c8a878" fill-opacity="0.74"/><circle cx="360.1" cy="132.6" r="0.7" fill="#b89868" fill-opacity="0.77"/><circle cx="363.9" cy="122.0" r="0.7" fill="#d8bc90" fill-opacity="0.73"/><circle cx="369.8" cy="104.9" r="0.8" fill="#c8a878" fill-opacity="0.76"/><circle cx="357.8" cy="141.1" r="0.6" fill="#c8a878" fill-opacity="0.31"/><circle cx="368.1" cy="119.5" r="0.9" fill="#c8a878" fill-opacity="0.62"/><circle cx="360.7" cy="118.3" r="0.9" fill="#a88c68" fill-opacity="0.46"/><circle cx="359.8" cy="153.0" r="0.7" fill="#c8a878" fill-opacity="0.65"/><circle cx="371.7" cy="150.8" r="0.9" fill="#e0cca8" fill-opacity="0.34"/><circle cx="357.6" cy="151.9" r="0.9" fill="#b89868" fill-opacity="0.44"/><circle cx="352.2" cy="118.1" r="0.7" fill="#e0cca8" fill-opacity="0.70"/><circle cx="360.1" cy="143.9" r="0.9" fill="#d8bc90" fill-opacity="0.62"/><circle cx="358.1" cy="108.1" r="0.7" fill="#d8bc90" fill-opacity="0.39"/><circle cx="360.0" cy="103.9" r="0.6" fill="#c8a878" fill-opacity="0.31"/><circle cx="360.8" cy="104.9" r="0.6" fill="#c8a878" fill-opacity="0.72"/><circle cx="356.6" cy="113.6" r="0.7" fill="#b89868" fill-opacity="0.72"/><circle cx="367.8" cy="120.4" r="0.9" fill="#e0cca8" fill-opacity="0.73"/><circle cx="348.5" cy="112.0" r="0.7" fill="#d8bc90" fill-opacity="0.76"/><circle cx="359.4" cy="111.1" r="0.7" fill="#e0cca8" fill-opacity="0.43"/><circle cx="371.6" cy="132.3" r="0.9" fill="#e0cca8" fill-opacity="0.48"/><circle cx="364.7" cy="109.0" r="0.9" fill="#e0cca8" fill-opacity="0.75"/><circle cx="360.4" cy="132.6" r="0.9" fill="#e0cca8" fill-opacity="0.58"/><circle cx="355.0" cy="133.9" r="0.6" fill="#a88c68" fill-opacity="0.74"/><circle cx="359.2" cy="107.2" r="0.6" fill="#b89868" fill-opacity="0.46"/><circle cx="355.9" cy="126.9" r="0.9" fill="#e0cca8" fill-opacity="0.31"/><circle cx="357.4" cy="113.5" r="0.9" fill="#d8bc90" fill-opacity="0.36"/><circle cx="357.4" cy="118.3" r="0.8" fill="#e0cca8" fill-opacity="0.74"/><circle cx="373.7" cy="147.7" r="0.6" fill="#b89868" fill-opacity="0.59"/><circle cx="362.4" cy="119.6" r="0.9" fill="#c8a878" fill-opacity="0.47"/><circle cx="368.6" cy="111.8" r="0.7" fill="#a88c68" fill-opacity="0.76"/><circle cx="368.4" cy="138.1" r="0.8" fill="#c8a878" fill-opacity="0.72"/><circle cx="349.2" cy="111.4" r="0.9" fill="#e0cca8" fill-opacity="0.71"/><circle cx="366.5" cy="105.3" r="0.9" fill="#e0cca8" fill-opacity="0.71"/><circle cx="358.4" cy="136.4" r="0.9" fill="#c8a878" fill-opacity="0.61"/><circle cx="370.7" cy="142.2" r="0.9" fill="#a88c68" fill-opacity="0.36"/><circle cx="373.3" cy="132.6" r="0.8" fill="#b89868" fill-opacity="0.58"/><circle cx="367.4" cy="100.5" r="0.9" fill="#d8bc90" fill-opacity="0.37"/><circle cx="368.0" cy="145.5" r="0.6" fill="#a88c68" fill-opacity="0.60"/><circle cx="387.9" cy="39.6" r="0.9" fill="#d8bc90" fill-opacity="0.45"/><circle cx="386.0" cy="32.7" r="0.7" fill="#b89868" fill-opacity="0.36"/><circle cx="388.9" cy="16.8" r="0.8" fill="#e0cca8" fill-opacity="0.49"/><circle cx="385.7" cy="33.5" r="0.9" fill="#c8a878" fill-opacity="0.63"/><circle cx="388.9" cy="27.3" r="0.6" fill="#b89868" fill-opacity="0.76"/><circle cx="384.1" cy="26.5" r="0.7" fill="#d8bc90" fill-opacity="0.32"/><circle cx="389.5" cy="39.3" r="0.7" fill="#e0cca8" fill-opacity="0.74"/><circle cx="388.4" cy="30.7" r="0.9" fill="#c8a878" fill-opacity="0.53"/><circle cx="378.0" cy="38.6" r="0.8" fill="#e0cca8" fill-opacity="0.55"/><circle cx="388.6" cy="43.0" r="0.6" fill="#c8a878" fill-opacity="0.51"/><circle cx="388.1" cy="27.3" r="0.8" fill="#b89868" fill-opacity="0.42"/><circle cx="378.7" cy="28.8" r="0.9" fill="#e0cca8" fill-opacity="0.38"/><circle cx="380.2" cy="31.0" r="0.9" fill="#d8bc90" fill-opacity="0.72"/><circle cx="383.9" cy="25.4" r="0.8" fill="#d8bc90" fill-opacity="0.67"/><circle cx="384.1" cy="24.5" r="0.9" fill="#b89868" fill-opacity="0.67"/><circle cx="378.3" cy="33.4" r="0.8" fill="#b89868" fill-opacity="0.35"/><circle cx="387.0" cy="42.8" r="0.6" fill="#d8bc90" fill-opacity="0.35"/><circle cx="386.2" cy="24.4" r="0.7" fill="#d8bc90" fill-opacity="0.52"/><circle cx="392.8" cy="31.0" r="0.9" fill="#a88c68" fill-opacity="0.30"/><circle cx="382.7" cy="36.8" r="0.7" fill="#e0cca8" fill-opacity="0.74"/><circle cx="384.2" cy="22.8" r="0.7" fill="#b89868" fill-opacity="0.74"/><circle cx="380.7" cy="37.8" r="0.8" fill="#b89868" fill-opacity="0.70"/><circle cx="388.7" cy="32.8" r="0.7" fill="#d8bc90" fill-opacity="0.46"/><circle cx="387.1" cy="34.8" r="0.7" fill="#c8a878" fill-opacity="0.31"/><circle cx="386.7" cy="20.7" r="0.6" fill="#d8bc90" fill-opacity="0.71"/><circle cx="459.8" cy="55.1" r="0.6" fill="#b89868" fill-opacity="0.55"/><circle cx="451.0" cy="53.5" r="0.7" fill="#d8bc90" fill-opacity="0.65"/><circle cx="463.4" cy="36.6" r="0.7" fill="#a88c68" fill-opacity="0.67"/><circle cx="454.3" cy="47.3" r="0.7" fill="#b89868" fill-opacity="0.46"/><circle cx="459.8" cy="24.0" r="0.6" fill="#b89868" fill-opacity="0.38"/><circle cx="453.5" cy="47.4" r="0.7" fill="#e0cca8" fill-opacity="0.37"/><circle cx="460.5" cy="54.8" r="0.8" fill="#e0cca8" fill-opacity="0.79"/><circle cx="445.5" cy="63.5" r="0.8" fill="#a88c68" fill-opacity="0.56"/><circle cx="455.1" cy="50.6" r="0.6" fill="#c8a878" fill-opacity="0.54"/><circle cx="467.5" cy="63.0" r="0.6" fill="#d8bc90" fill-opacity="0.53"/><circle cx="452.2" cy="63.3" r="0.7" fill="#a88c68" fill-opacity="0.79"/><circle cx="446.4" cy="79.6" r="0.9" fill="#a88c68" fill-opacity="0.66"/><circle cx="463.7" cy="30.4" r="0.9" fill="#b89868" fill-opacity="0.59"/><circle cx="460.4" cy="31.3" r="0.8" fill="#d8bc90" fill-opacity="0.73"/><circle cx="460.9" cy="49.3" r="0.6" fill="#c8a878" fill-opacity="0.40"/><circle cx="467.6" cy="58.2" r="0.8" fill="#c8a878" fill-opacity="0.32"/><circle cx="445.3" cy="69.9" r="0.7" fill="#b89868" fill-opacity="0.46"/><circle cx="457.8" cy="80.5" r="0.7" fill="#b89868" fill-opacity="0.31"/><circle cx="458.2" cy="42.6" r="0.6" fill="#b89868" fill-opacity="0.79"/><circle cx="462.5" cy="62.3" r="0.7" fill="#e0cca8" fill-opacity="0.63"/><circle cx="444.7" cy="70.0" r="0.7" fill="#d8bc90" fill-opacity="0.64"/><circle cx="461.6" cy="54.9" r="0.8" fill="#e0cca8" fill-opacity="0.70"/><circle cx="462.9" cy="29.6" r="0.6" fill="#e0cca8" fill-opacity="0.65"/><circle cx="455.9" cy="49.5" r="0.6" fill="#a88c68" fill-opacity="0.35"/><circle cx="464.8" cy="46.9" r="0.6" fill="#b89868" fill-opacity="0.57"/><circle cx="442.9" cy="82.5" r="0.8" fill="#b89868" fill-opacity="0.76"/><circle cx="449.3" cy="63.2" r="0.8" fill="#e0cca8" fill-opacity="0.57"/><circle cx="456.7" cy="44.2" r="0.8" fill="#e0cca8" fill-opacity="0.53"/><circle cx="456.8" cy="71.6" r="0.9" fill="#a88c68" fill-opacity="0.43"/><circle cx="454.7" cy="67.1" r="0.8" fill="#a88c68" fill-opacity="0.34"/><circle cx="445.9" cy="71.2" r="0.7" fill="#a88c68" fill-opacity="0.61"/><circle cx="453.6" cy="45.7" r="0.6" fill="#e0cca8" fill-opacity="0.76"/><circle cx="448.7" cy="52.0" r="0.9" fill="#d8bc90" fill-opacity="0.56"/><circle cx="460.9" cy="59.1" r="0.9" fill="#a88c68" fill-opacity="0.36"/><circle cx="466.0" cy="62.8" r="0.9" fill="#e0cca8" fill-opacity="0.58"/><circle cx="443.2" cy="77.1" r="0.8" fill="#a88c68" fill-opacity="0.46"/><circle cx="463.9" cy="42.0" r="0.6" fill="#c8a878" fill-opacity="0.37"/><circle cx="456.8" cy="38.6" r="0.8" fill="#b89868" fill-opacity="0.36"/><circle cx="455.8" cy="29.8" r="0.7" fill="#c8a878" fill-opacity="0.75"/><circle cx="464.8" cy="65.1" r="0.7" fill="#b89868" fill-opacity="0.64"/><circle cx="445.3" cy="71.2" r="0.8" fill="#a88c68" fill-opacity="0.32"/><circle cx="459.8" cy="46.5" r="0.7" fill="#c8a878" fill-opacity="0.80"/><circle cx="454.5" cy="40.3" r="0.6" fill="#d8bc90" fill-opacity="0.55"/><circle cx="465.6" cy="60.7" r="0.9" fill="#c8a878" fill-opacity="0.68"/><circle cx="454.9" cy="72.5" r="0.9" fill="#e0cca8" fill-opacity="0.47"/><circle cx="461.0" cy="26.6" r="0.9" fill="#c8a878" fill-opacity="0.31"/><circle cx="449.7" cy="61.2" r="0.6" fill="#e0cca8" fill-opacity="0.40"/><circle cx="454.9" cy="43.2" r="0.7" fill="#b89868" fill-opacity="0.42"/><circle cx="458.7" cy="72.0" r="0.6" fill="#a88c68" fill-opacity="0.61"/><circle cx="451.6" cy="64.6" r="0.9" fill="#d8bc90" fill-opacity="0.33"/><circle cx="466.7" cy="37.2" r="0.8" fill="#d8bc90" fill-opacity="0.57"/><circle cx="466.1" cy="48.8" r="0.9" fill="#e0cca8" fill-opacity="0.39"/><circle cx="463.3" cy="38.9" r="0.6" fill="#a88c68" fill-opacity="0.40"/><circle cx="457.0" cy="43.4" r="0.8" fill="#c8a878" fill-opacity="0.46"/><circle cx="449.9" cy="86.1" r="0.9" fill="#c8a878" fill-opacity="0.70"/><circle cx="452.1" cy="82.1" r="0.9" fill="#b89868" fill-opacity="0.64"/><circle cx="457.4" cy="73.7" r="0.9" fill="#b89868" fill-opacity="0.72"/><circle cx="443.0" cy="79.4" r="0.6" fill="#a88c68" fill-opacity="0.77"/><circle cx="450.4" cy="50.9" r="0.9" fill="#a88c68" fill-opacity="0.55"/><circle cx="440.5" cy="85.5" r="0.6" fill="#b89868" fill-opacity="0.65"/><circle cx="468.2" cy="29.1" r="0.6" fill="#b89868" fill-opacity="0.54"/><circle cx="445.8" cy="88.6" r="0.7" fill="#c8a878" fill-opacity="0.67"/><circle cx="446.1" cy="79.5" r="0.8" fill="#b89868" fill-opacity="0.33"/><circle cx="443.8" cy="75.4" r="0.7" fill="#b89868" fill-opacity="0.73"/><circle cx="435.5" cy="94.1" r="0.7" fill="#a88c68" fill-opacity="0.76"/><circle cx="466.0" cy="52.8" r="0.7" fill="#c8a878" fill-opacity="0.76"/><circle cx="449.0" cy="60.6" r="0.6" fill="#d8bc90" fill-opacity="0.63"/><circle cx="454.6" cy="65.9" r="0.7" fill="#a88c68" fill-opacity="0.80"/><circle cx="463.5" cy="24.2" r="0.8" fill="#a88c68" fill-opacity="0.43"/><circle cx="453.7" cy="65.9" r="0.9" fill="#a88c68" fill-opacity="0.66"/><circle cx="455.8" cy="52.7" r="0.8" fill="#a88c68" fill-opacity="0.58"/><circle cx="458.7" cy="46.0" r="0.8" fill="#b89868" fill-opacity="0.67"/><circle cx="451.8" cy="62.1" r="0.7" fill="#c8a878" fill-opacity="0.72"/><circle cx="456.4" cy="62.8" r="0.6" fill="#e0cca8" fill-opacity="0.33"/><circle cx="441.0" cy="84.6" r="0.6" fill="#d8bc90" fill-opacity="0.41"/><circle cx="452.9" cy="56.3" r="0.8" fill="#a88c68" fill-opacity="0.48"/><circle cx="461.8" cy="58.0" r="0.7" fill="#a88c68" fill-opacity="0.41"/><circle cx="463.6" cy="43.1" r="0.9" fill="#d8bc90" fill-opacity="0.60"/><circle cx="453.3" cy="61.2" r="0.7" fill="#e0cca8" fill-opacity="0.67"/><circle cx="459.6" cy="29.1" r="0.8" fill="#e0cca8" fill-opacity="0.48"/><circle cx="462.6" cy="32.8" r="0.9" fill="#e0cca8" fill-opacity="0.71"/><circle cx="460.1" cy="58.2" r="0.7" fill="#b89868" fill-opacity="0.78"/><circle cx="453.4" cy="53.7" r="0.8" fill="#c8a878" fill-opacity="0.71"/><circle cx="458.7" cy="30.9" r="0.9" fill="#e0cca8" fill-opacity="0.56"/><circle cx="457.7" cy="43.1" r="0.6" fill="#a88c68" fill-opacity="0.66"/><circle cx="458.8" cy="25.4" r="0.8" fill="#a88c68" fill-opacity="0.38"/><circle cx="460.3" cy="64.9" r="0.9" fill="#a88c68" fill-opacity="0.71"/><circle cx="455.4" cy="44.8" r="0.7" fill="#d8bc90" fill-opacity="0.37"/><circle cx="458.9" cy="48.8" r="0.8" fill="#e0cca8" fill-opacity="0.48"/><circle cx="468.6" cy="35.1" r="0.8" fill="#d8bc90" fill-opacity="0.62"/><circle cx="447.7" cy="68.4" r="0.9" fill="#c8a878" fill-opacity="0.80"/><circle cx="456.8" cy="47.9" r="0.6" fill="#e0cca8" fill-opacity="0.51"/><circle cx="452.3" cy="51.8" r="0.7" fill="#a88c68" fill-opacity="0.68"/><circle cx="445.5" cy="55.6" r="0.8" fill="#a88c68" fill-opacity="0.63"/><circle cx="456.5" cy="73.0" r="0.9" fill="#c8a878" fill-opacity="0.78"/><circle cx="457.9" cy="55.9" r="0.7" fill="#d8bc90" fill-opacity="0.55"/><circle cx="463.2" cy="62.1" r="0.9" fill="#c8a878" fill-opacity="0.62"/><circle cx="461.9" cy="56.6" r="0.7" fill="#c8a878" fill-opacity="0.34"/><circle cx="454.1" cy="62.1" r="0.6" fill="#b89868" fill-opacity="0.74"/><circle cx="461.6" cy="35.4" r="0.7" fill="#e0cca8" fill-opacity="0.38"/><circle cx="460.2" cy="60.1" r="0.8" fill="#a88c68" fill-opacity="0.78"/><circle cx="462.9" cy="41.0" r="0.9" fill="#d8bc90" fill-opacity="0.40"/><circle cx="450.3" cy="48.7" r="0.9" fill="#b89868" fill-opacity="0.76"/><circle cx="455.0" cy="45.9" r="0.6" fill="#b89868" fill-opacity="0.57"/><circle cx="466.6" cy="60.9" r="0.7" fill="#e0cca8" fill-opacity="0.43"/><circle cx="451.0" cy="49.5" r="0.8" fill="#a88c68" fill-opacity="0.40"/><circle cx="444.2" cy="80.1" r="0.9" fill="#e0cca8" fill-opacity="0.74"/><circle cx="455.5" cy="64.3" r="0.9" fill="#d8bc90" fill-opacity="0.33"/><circle cx="452.8" cy="82.8" r="0.9" fill="#a88c68" fill-opacity="0.32"/><circle cx="461.6" cy="26.9" r="0.9" fill="#e0cca8" fill-opacity="0.44"/><circle cx="465.6" cy="57.8" r="0.7" fill="#c8a878" fill-opacity="0.63"/><circle cx="456.7" cy="69.9" r="0.8" fill="#a88c68" fill-opacity="0.31"/><circle cx="463.6" cy="31.9" r="0.8" fill="#b89868" fill-opacity="0.78"/><circle cx="449.2" cy="72.6" r="0.6" fill="#e0cca8" fill-opacity="0.62"/><circle cx="461.2" cy="34.7" r="0.9" fill="#d8bc90" fill-opacity="0.48"/><circle cx="453.1" cy="43.8" r="0.9" fill="#e0cca8" fill-opacity="0.77"/><circle cx="465.1" cy="43.5" r="0.7" fill="#e0cca8" fill-opacity="0.61"/><circle cx="448.9" cy="69.0" r="0.9" fill="#c8a878" fill-opacity="0.71"/><circle cx="458.3" cy="50.7" r="0.9" fill="#b89868" fill-opacity="0.35"/><circle cx="469.2" cy="27.3" r="0.8" fill="#a88c68" fill-opacity="0.54"/><circle cx="460.5" cy="55.8" r="0.6" fill="#c8a878" fill-opacity="0.67"/><circle cx="449.0" cy="79.1" r="0.6" fill="#b89868" fill-opacity="0.42"/><circle cx="446.1" cy="81.4" r="0.6" fill="#d8bc90" fill-opacity="0.38"/><circle cx="434.7" cy="88.8" r="0.7" fill="#b89868" fill-opacity="0.70"/><circle cx="427.6" cy="94.4" r="0.9" fill="#c8a878" fill-opacity="0.67"/><circle cx="442.0" cy="91.9" r="0.6" fill="#e0cca8" fill-opacity="0.66"/><circle cx="424.4" cy="88.4" r="0.6" fill="#e0cca8" fill-opacity="0.45"/><circle cx="424.3" cy="90.0" r="0.9" fill="#e0cca8" fill-opacity="0.46"/><circle cx="452.1" cy="82.5" r="0.8" fill="#e0cca8" fill-opacity="0.33"/><circle cx="436.6" cy="92.9" r="0.7" fill="#e0cca8" fill-opacity="0.57"/><circle cx="427.5" cy="74.6" r="0.9" fill="#b89868" fill-opacity="0.68"/><circle cx="443.9" cy="88.8" r="0.8" fill="#e0cca8" fill-opacity="0.68"/><circle cx="424.8" cy="86.8" r="0.7" fill="#d8bc90" fill-opacity="0.32"/><circle cx="429.1" cy="84.7" r="0.7" fill="#b89868" fill-opacity="0.65"/><circle cx="448.0" cy="96.7" r="0.7" fill="#b89868" fill-opacity="0.76"/><circle cx="438.0" cy="91.9" r="0.7" fill="#c8a878" fill-opacity="0.33"/><circle cx="431.2" cy="94.1" r="0.6" fill="#c8a878" fill-opacity="0.37"/><circle cx="419.3" cy="83.0" r="0.6" fill="#c8a878" fill-opacity="0.60"/><circle cx="441.8" cy="76.6" r="0.6" fill="#c8a878" fill-opacity="0.55"/><circle cx="431.5" cy="88.5" r="0.6" fill="#c8a878" fill-opacity="0.71"/><circle cx="448.1" cy="88.9" r="0.6" fill="#d8bc90" fill-opacity="0.78"/><circle cx="456.0" cy="84.8" r="0.7" fill="#e0cca8" fill-opacity="0.35"/><circle cx="438.0" cy="79.4" r="0.8" fill="#b89868" fill-opacity="0.66"/><circle cx="449.1" cy="78.1" r="0.6" fill="#b89868" fill-opacity="0.68"/><circle cx="425.4" cy="84.7" r="0.8" fill="#a88c68" fill-opacity="0.37"/><circle cx="442.1" cy="80.6" r="0.6" fill="#e0cca8" fill-opacity="0.64"/><circle cx="454.2" cy="92.9" r="0.9" fill="#e0cca8" fill-opacity="0.79"/><circle cx="460.5" cy="95.6" r="0.9" fill="#c8a878" fill-opacity="0.45"/><circle cx="439.0" cy="76.4" r="0.8" fill="#b89868" fill-opacity="0.31"/><circle cx="462.0" cy="88.5" r="0.9" fill="#a88c68" fill-opacity="0.38"/><circle cx="448.0" cy="80.4" r="0.9" fill="#a88c68" fill-opacity="0.54"/><circle cx="431.3" cy="96.4" r="0.7" fill="#c8a878" fill-opacity="0.64"/><circle cx="434.7" cy="79.4" r="0.6" fill="#b89868" fill-opacity="0.39"/><circle cx="446.7" cy="94.2" r="0.6" fill="#d8bc90" fill-opacity="0.68"/><circle cx="459.3" cy="89.1" r="0.8" fill="#c8a878" fill-opacity="0.64"/><circle cx="435.1" cy="71.4" r="0.7" fill="#e0cca8" fill-opacity="0.41"/><circle cx="437.2" cy="84.7" r="0.9" fill="#e0cca8" fill-opacity="0.60"/><circle cx="421.4" cy="85.8" r="0.8" fill="#b89868" fill-opacity="0.38"/><circle cx="453.6" cy="82.2" r="0.6" fill="#a88c68" fill-opacity="0.30"/><circle cx="431.8" cy="82.4" r="0.9" fill="#e0cca8" fill-opacity="0.72"/><circle cx="448.9" cy="81.6" r="0.7" fill="#b89868" fill-opacity="0.31"/><circle cx="552.0" cy="123.2" r="0.9" fill="#a88c68" fill-opacity="0.59"/><circle cx="588.9" cy="135.3" r="0.9" fill="#d8bc90" fill-opacity="0.67"/><circle cx="522.6" cy="176.7" r="0.6" fill="#b89868" fill-opacity="0.55"/><circle cx="571.1" cy="140.3" r="0.6" fill="#b89868" fill-opacity="0.40"/><circle cx="582.4" cy="157.6" r="0.7" fill="#a88c68" fill-opacity="0.52"/><circle cx="518.9" cy="196.4" r="0.7" fill="#d8bc90" fill-opacity="0.61"/><circle cx="541.8" cy="118.0" r="0.6" fill="#d8bc90" fill-opacity="0.62"/><circle cx="576.5" cy="139.4" r="0.8" fill="#e0cca8" fill-opacity="0.35"/><circle cx="548.2" cy="143.3" r="0.9" fill="#e0cca8" fill-opacity="0.40"/><circle cx="511.0" cy="86.1" r="0.9" fill="#c8a878" fill-opacity="0.52"/><circle cx="535.2" cy="78.6" r="0.7" fill="#e0cca8" fill-opacity="0.41"/><circle cx="546.9" cy="104.2" r="0.6" fill="#d8bc90" fill-opacity="0.39"/><circle cx="537.8" cy="123.8" r="0.9" fill="#d8bc90" fill-opacity="0.63"/><circle cx="563.1" cy="161.6" r="0.9" fill="#c8a878" fill-opacity="0.59"/><circle cx="555.3" cy="160.6" r="0.6" fill="#a88c68" fill-opacity="0.47"/><circle cx="568.3" cy="117.1" r="0.9" fill="#e0cca8" fill-opacity="0.52"/><circle cx="503.5" cy="79.2" r="0.9" fill="#e0cca8" fill-opacity="0.75"/><circle cx="519.3" cy="174.7" r="0.7" fill="#a88c68" fill-opacity="0.54"/><circle cx="504.7" cy="86.8" r="0.8" fill="#b89868" fill-opacity="0.41"/><circle cx="536.1" cy="154.5" r="0.7" fill="#d8bc90" fill-opacity="0.66"/><circle cx="508.8" cy="188.0" r="0.8" fill="#e0cca8" fill-opacity="0.76"/><circle cx="545.4" cy="102.8" r="0.9" fill="#d8bc90" fill-opacity="0.73"/><circle cx="567.0" cy="147.8" r="0.7" fill="#b89868" fill-opacity="0.50"/><circle cx="501.1" cy="102.7" r="0.6" fill="#a88c68" fill-opacity="0.73"/><circle cx="557.4" cy="159.8" r="0.9" fill="#a88c68" fill-opacity="0.43"/><circle cx="546.2" cy="156.8" r="0.9" fill="#b89868" fill-opacity="0.45"/><circle cx="569.9" cy="119.8" r="0.7" fill="#e0cca8" fill-opacity="0.70"/><circle cx="530.0" cy="132.5" r="0.8" fill="#c8a878" fill-opacity="0.72"/><circle cx="527.2" cy="177.0" r="0.6" fill="#a88c68" fill-opacity="0.62"/><circle cx="515.4" cy="148.8" r="0.6" fill="#a88c68" fill-opacity="0.53"/><circle cx="565.6" cy="131.4" r="0.8" fill="#e0cca8" fill-opacity="0.40"/><circle cx="554.6" cy="149.9" r="0.7" fill="#e0cca8" fill-opacity="0.80"/><circle cx="499.4" cy="98.6" r="0.6" fill="#b89868" fill-opacity="0.55"/><circle cx="567.2" cy="115.5" r="0.6" fill="#d8bc90" fill-opacity="0.38"/><circle cx="575.7" cy="112.0" r="0.8" fill="#a88c68" fill-opacity="0.37"/><circle cx="540.1" cy="175.3" r="0.8" fill="#d8bc90" fill-opacity="0.61"/><circle cx="476.7" cy="97.3" r="0.6" fill="#d8bc90" fill-opacity="0.72"/><circle cx="572.6" cy="140.1" r="0.7" fill="#e0cca8" fill-opacity="0.45"/><circle cx="515.9" cy="75.2" r="0.7" fill="#e0cca8" fill-opacity="0.47"/><circle cx="536.1" cy="121.4" r="0.8" fill="#b89868" fill-opacity="0.75"/><circle cx="522.0" cy="88.3" r="0.6" fill="#e0cca8" fill-opacity="0.63"/><circle cx="554.5" cy="130.0" r="0.8" fill="#d8bc90" fill-opacity="0.59"/><circle cx="531.8" cy="130.3" r="0.6" fill="#e0cca8" fill-opacity="0.56"/><circle cx="540.4" cy="159.8" r="0.7" fill="#a88c68" fill-opacity="0.31"/><circle cx="477.1" cy="96.9" r="0.8" fill="#a88c68" fill-opacity="0.61"/><circle cx="556.9" cy="153.6" r="0.6" fill="#a88c68" fill-opacity="0.48"/><circle cx="466.4" cy="96.8" r="0.7" fill="#a88c68" fill-opacity="0.40"/><circle cx="568.7" cy="129.4" r="0.9" fill="#d8bc90" fill-opacity="0.72"/><circle cx="526.3" cy="176.9" r="0.7" fill="#a88c68" fill-opacity="0.35"/><circle cx="537.2" cy="137.4" r="0.9" fill="#d8bc90" fill-opacity="0.38"/><circle cx="560.3" cy="115.1" r="0.7" fill="#b89868" fill-opacity="0.76"/><circle cx="515.0" cy="67.3" r="0.8" fill="#a88c68" fill-opacity="0.60"/><circle cx="526.2" cy="73.6" r="0.6" fill="#a88c68" fill-opacity="0.38"/><circle cx="527.0" cy="154.3" r="0.6" fill="#d8bc90" fill-opacity="0.38"/><circle cx="583.5" cy="121.4" r="0.7" fill="#c8a878" fill-opacity="0.79"/><circle cx="477.1" cy="96.7" r="0.7" fill="#c8a878" fill-opacity="0.69"/><circle cx="545.2" cy="161.5" r="0.6" fill="#c8a878" fill-opacity="0.46"/><circle cx="551.0" cy="165.7" r="0.6" fill="#b89868" fill-opacity="0.45"/><circle cx="556.7" cy="135.1" r="0.7" fill="#a88c68" fill-opacity="0.75"/><circle cx="541.8" cy="85.4" r="0.7" fill="#e0cca8" fill-opacity="0.48"/><circle cx="473.4" cy="81.4" r="0.6" fill="#b89868" fill-opacity="0.46"/><circle cx="469.3" cy="82.0" r="0.9" fill="#b89868" fill-opacity="0.45"/><circle cx="585.7" cy="151.4" r="0.6" fill="#d8bc90" fill-opacity="0.62"/><circle cx="483.8" cy="71.2" r="0.7" fill="#c8a878" fill-opacity="0.76"/><circle cx="532.2" cy="175.9" r="0.9" fill="#a88c68" fill-opacity="0.66"/><circle cx="472.0" cy="76.4" r="0.6" fill="#d8bc90" fill-opacity="0.65"/><circle cx="515.2" cy="70.4" r="0.9" fill="#e0cca8" fill-opacity="0.69"/><circle cx="522.1" cy="84.4" r="0.9" fill="#c8a878" fill-opacity="0.59"/><circle cx="522.5" cy="83.8" r="0.6" fill="#b89868" fill-opacity="0.62"/><circle cx="508.9" cy="77.3" r="0.9" fill="#a88c68" fill-opacity="0.76"/><circle cx="472.5" cy="81.5" r="0.6" fill="#b89868" fill-opacity="0.31"/><circle cx="528.2" cy="130.7" r="0.6" fill="#e0cca8" fill-opacity="0.40"/><circle cx="522.1" cy="188.7" r="0.9" fill="#d8bc90" fill-opacity="0.65"/><circle cx="520.9" cy="163.3" r="0.8" fill="#d8bc90" fill-opacity="0.61"/><circle cx="561.1" cy="107.9" r="0.9" fill="#a88c68" fill-opacity="0.73"/><circle cx="570.2" cy="141.5" r="0.6" fill="#b89868" fill-opacity="0.77"/><circle cx="526.8" cy="152.4" r="0.6" fill="#a88c68" fill-opacity="0.67"/><circle cx="514.2" cy="181.8" r="0.8" fill="#e0cca8" fill-opacity="0.77"/><circle cx="474.3" cy="102.7" r="0.8" fill="#c8a878" fill-opacity="0.31"/><circle cx="552.5" cy="154.9" r="0.8" fill="#a88c68" fill-opacity="0.80"/><circle cx="537.1" cy="152.4" r="0.9" fill="#e0cca8" fill-opacity="0.52"/><circle cx="503.6" cy="78.4" r="0.9" fill="#a88c68" fill-opacity="0.46"/><circle cx="512.8" cy="90.2" r="0.7" fill="#e0cca8" fill-opacity="0.63"/><circle cx="486.1" cy="85.3" r="0.9" fill="#c8a878" fill-opacity="0.59"/><circle cx="552.8" cy="126.3" r="0.7" fill="#a88c68" fill-opacity="0.66"/><circle cx="584.6" cy="113.6" r="0.9" fill="#d8bc90" fill-opacity="0.45"/><circle cx="552.1" cy="105.9" r="0.6" fill="#e0cca8" fill-opacity="0.41"/><circle cx="548.2" cy="144.4" r="0.7" fill="#b89868" fill-opacity="0.63"/><circle cx="485.0" cy="82.3" r="0.8" fill="#e0cca8" fill-opacity="0.42"/><circle cx="548.3" cy="144.4" r="0.7" fill="#a88c68" fill-opacity="0.43"/><circle cx="513.8" cy="166.6" r="0.9" fill="#c8a878" fill-opacity="0.46"/><circle cx="531.5" cy="88.8" r="0.8" fill="#d8bc90" fill-opacity="0.63"/><circle cx="487.2" cy="99.8" r="0.7" fill="#d8bc90" fill-opacity="0.54"/><circle cx="547.3" cy="130.3" r="0.8" fill="#b89868" fill-opacity="0.77"/><circle cx="493.1" cy="74.3" r="0.6" fill="#a88c68" fill-opacity="0.77"/><circle cx="524.4" cy="162.5" r="0.9" fill="#b89868" fill-opacity="0.77"/><circle cx="526.2" cy="95.1" r="0.6" fill="#c8a878" fill-opacity="0.53"/><circle cx="477.5" cy="80.9" r="0.7" fill="#d8bc90" fill-opacity="0.77"/><circle cx="586.4" cy="142.3" r="0.8" fill="#a88c68" fill-opacity="0.42"/><circle cx="564.4" cy="137.9" r="0.6" fill="#c8a878" fill-opacity="0.60"/><circle cx="585.8" cy="139.2" r="0.8" fill="#c8a878" fill-opacity="0.54"/><circle cx="583.1" cy="128.5" r="0.7" fill="#c8a878" fill-opacity="0.35"/><circle cx="513.5" cy="85.2" r="0.9" fill="#b89868" fill-opacity="0.45"/><circle cx="485.5" cy="68.9" r="0.8" fill="#b89868" fill-opacity="0.70"/><circle cx="559.8" cy="142.2" r="0.9" fill="#e0cca8" fill-opacity="0.66"/><circle cx="544.8" cy="157.6" r="0.6" fill="#d8bc90" fill-opacity="0.42"/><circle cx="575.9" cy="116.5" r="0.9" fill="#e0cca8" fill-opacity="0.64"/><circle cx="490.7" cy="75.1" r="0.6" fill="#b89868" fill-opacity="0.54"/><circle cx="521.9" cy="158.1" r="0.7" fill="#c8a878" fill-opacity="0.46"/><circle cx="522.3" cy="192.7" r="0.6" fill="#d8bc90" fill-opacity="0.77"/><circle cx="545.0" cy="96.5" r="0.6" fill="#c8a878" fill-opacity="0.33"/><circle cx="537.7" cy="163.2" r="0.8" fill="#b89868" fill-opacity="0.59"/><circle cx="480.0" cy="87.2" r="0.6" fill="#a88c68" fill-opacity="0.46"/><circle cx="491.9" cy="90.2" r="0.9" fill="#b89868" fill-opacity="0.78"/><circle cx="514.1" cy="180.4" r="0.6" fill="#c8a878" fill-opacity="0.32"/><circle cx="590.8" cy="124.4" r="0.8" fill="#e0cca8" fill-opacity="0.57"/><circle cx="520.8" cy="134.6" r="0.7" fill="#b89868" fill-opacity="0.31"/><circle cx="549.7" cy="137.4" r="0.6" fill="#e0cca8" fill-opacity="0.70"/><circle cx="550.6" cy="140.6" r="0.9" fill="#a88c68" fill-opacity="0.64"/><circle cx="536.9" cy="91.6" r="0.7" fill="#d8bc90" fill-opacity="0.50"/><circle cx="535.3" cy="159.2" r="0.8" fill="#d8bc90" fill-opacity="0.67"/><circle cx="542.4" cy="126.9" r="0.6" fill="#e0cca8" fill-opacity="0.61"/><circle cx="550.5" cy="160.2" r="0.8" fill="#b89868" fill-opacity="0.80"/><circle cx="518.2" cy="193.0" r="0.9" fill="#e0cca8" fill-opacity="0.50"/><circle cx="556.6" cy="112.7" r="0.7" fill="#d8bc90" fill-opacity="0.71"/><circle cx="480.9" cy="100.6" r="0.7" fill="#b89868" fill-opacity="0.64"/><circle cx="466.4" cy="89.0" r="0.9" fill="#c8a878" fill-opacity="0.74"/><circle cx="583.2" cy="147.5" r="0.6" fill="#a88c68" fill-opacity="0.52"/><circle cx="519.9" cy="92.7" r="0.8" fill="#d8bc90" fill-opacity="0.66"/><circle cx="546.8" cy="95.4" r="0.6" fill="#a88c68" fill-opacity="0.73"/><circle cx="545.0" cy="145.6" r="0.6" fill="#a88c68" fill-opacity="0.41"/><circle cx="573.0" cy="143.4" r="0.7" fill="#e0cca8" fill-opacity="0.44"/><circle cx="543.0" cy="95.9" r="0.9" fill="#c8a878" fill-opacity="0.62"/><circle cx="557.8" cy="105.2" r="0.8" fill="#d8bc90" fill-opacity="0.53"/><circle cx="526.8" cy="103.7" r="0.9" fill="#d8bc90" fill-opacity="0.49"/><circle cx="482.2" cy="79.1" r="0.8" fill="#b89868" fill-opacity="0.60"/><circle cx="556.4" cy="114.2" r="0.7" fill="#d8bc90" fill-opacity="0.46"/><circle cx="585.2" cy="142.7" r="0.6" fill="#a88c68" fill-opacity="0.40"/><circle cx="553.0" cy="117.9" r="0.8" fill="#d8bc90" fill-opacity="0.31"/><circle cx="492.2" cy="79.3" r="0.6" fill="#b89868" fill-opacity="0.51"/><circle cx="480.8" cy="94.3" r="0.8" fill="#b89868" fill-opacity="0.33"/><circle cx="545.6" cy="103.7" r="0.8" fill="#a88c68" fill-opacity="0.54"/><circle cx="536.7" cy="164.2" r="0.7" fill="#d8bc90" fill-opacity="0.42"/><circle cx="542.5" cy="155.6" r="0.8" fill="#c8a878" fill-opacity="0.62"/><circle cx="550.4" cy="105.1" r="0.9" fill="#d8bc90" fill-opacity="0.41"/><circle cx="564.9" cy="113.6" r="0.7" fill="#a88c68" fill-opacity="0.73"/><circle cx="474.1" cy="76.2" r="0.8" fill="#e0cca8" fill-opacity="0.54"/><circle cx="525.7" cy="97.5" r="0.6" fill="#c8a878" fill-opacity="0.42"/><circle cx="530.6" cy="113.8" r="0.7" fill="#b89868" fill-opacity="0.76"/><circle cx="525.5" cy="101.0" r="0.8" fill="#c8a878" fill-opacity="0.70"/><circle cx="540.4" cy="84.5" r="0.8" fill="#b89868" fill-opacity="0.59"/><circle cx="505.4" cy="74.2" r="0.7" fill="#a88c68" fill-opacity="0.56"/><circle cx="547.7" cy="110.4" r="0.8" fill="#e0cca8" fill-opacity="0.52"/><circle cx="565.6" cy="127.7" r="0.9" fill="#c8a878" fill-opacity="0.54"/><circle cx="479.3" cy="81.8" r="0.8" fill="#d8bc90" fill-opacity="0.70"/><circle cx="481.1" cy="101.1" r="0.7" fill="#b89868" fill-opacity="0.80"/><circle cx="523.3" cy="192.1" r="0.7" fill="#e0cca8" fill-opacity="0.64"/><circle cx="523.9" cy="161.1" r="0.7" fill="#c8a878" fill-opacity="0.59"/><circle cx="507.6" cy="104.8" r="0.8" fill="#a88c68" fill-opacity="0.34"/><circle cx="576.2" cy="115.1" r="0.7" fill="#b89868" fill-opacity="0.78"/><circle cx="504.0" cy="96.5" r="0.9" fill="#b89868" fill-opacity="0.61"/><circle cx="579.6" cy="144.4" r="0.8" fill="#b89868" fill-opacity="0.47"/><circle cx="513.6" cy="89.6" r="0.8" fill="#e0cca8" fill-opacity="0.65"/><circle cx="520.2" cy="149.3" r="0.9" fill="#a88c68" fill-opacity="0.37"/><circle cx="549.3" cy="118.0" r="0.7" fill="#d8bc90" fill-opacity="0.78"/><circle cx="534.5" cy="111.3" r="0.6" fill="#d8bc90" fill-opacity="0.36"/><circle cx="556.1" cy="155.7" r="0.7" fill="#e0cca8" fill-opacity="0.44"/><circle cx="532.3" cy="132.5" r="0.6" fill="#b89868" fill-opacity="0.50"/><circle cx="495.9" cy="83.5" r="0.6" fill="#b89868" fill-opacity="0.59"/><circle cx="473.0" cy="77.1" r="0.9" fill="#b89868" fill-opacity="0.48"/><circle cx="582.7" cy="128.3" r="0.7" fill="#a88c68" fill-opacity="0.31"/><circle cx="533.9" cy="81.2" r="0.7" fill="#a88c68" fill-opacity="0.75"/><circle cx="526.4" cy="135.0" r="0.7" fill="#e0cca8" fill-opacity="0.80"/><circle cx="548.3" cy="98.6" r="0.8" fill="#a88c68" fill-opacity="0.48"/><circle cx="518.8" cy="163.0" r="0.7" fill="#c8a878" fill-opacity="0.67"/><circle cx="532.1" cy="173.6" r="0.8" fill="#c8a878" fill-opacity="0.68"/><circle cx="532.4" cy="161.1" r="0.8" fill="#d8bc90" fill-opacity="0.54"/><circle cx="581.7" cy="136.1" r="0.6" fill="#c8a878" fill-opacity="0.38"/><circle cx="510.8" cy="189.7" r="0.6" fill="#d8bc90" fill-opacity="0.61"/><circle cx="533.9" cy="182.3" r="0.9" fill="#e0cca8" fill-opacity="0.66"/><circle cx="528.6" cy="189.8" r="0.8" fill="#d8bc90" fill-opacity="0.34"/><circle cx="518.6" cy="149.7" r="0.8" fill="#b89868" fill-opacity="0.61"/><circle cx="526.7" cy="82.0" r="0.9" fill="#a88c68" fill-opacity="0.75"/><circle cx="526.3" cy="89.4" r="0.9" fill="#c8a878" fill-opacity="0.52"/><circle cx="586.6" cy="127.6" r="0.7" fill="#d8bc90" fill-opacity="0.48"/><circle cx="568.5" cy="159.6" r="0.7" fill="#a88c68" fill-opacity="0.60"/><circle cx="497.0" cy="97.8" r="0.7" fill="#c8a878" fill-opacity="0.78"/><circle cx="544.7" cy="110.6" r="0.9" fill="#b89868" fill-opacity="0.38"/><circle cx="473.8" cy="97.6" r="0.6" fill="#d8bc90" fill-opacity="0.68"/><circle cx="514.7" cy="196.0" r="0.7" fill="#d8bc90" fill-opacity="0.71"/><circle cx="523.6" cy="94.8" r="0.6" fill="#b89868" fill-opacity="0.67"/><circle cx="483.9" cy="73.2" r="0.6" fill="#e0cca8" fill-opacity="0.51"/><circle cx="556.0" cy="124.6" r="0.8" fill="#b89868" fill-opacity="0.47"/><circle cx="580.8" cy="122.7" r="0.9" fill="#e0cca8" fill-opacity="0.77"/><circle cx="534.9" cy="149.4" r="0.7" fill="#a88c68" fill-opacity="0.61"/><circle cx="536.9" cy="162.4" r="0.7" fill="#b89868" fill-opacity="0.55"/><circle cx="535.4" cy="123.1" r="0.6" fill="#c8a878" fill-opacity="0.33"/><circle cx="522.4" cy="138.0" r="0.7" fill="#a88c68" fill-opacity="0.48"/><circle cx="581.7" cy="152.8" r="0.8" fill="#b89868" fill-opacity="0.63"/><circle cx="514.4" cy="146.7" r="0.6" fill="#c8a878" fill-opacity="0.78"/><circle cx="508.9" cy="187.3" r="0.8" fill="#d8bc90" fill-opacity="0.47"/><circle cx="508.9" cy="179.2" r="0.7" fill="#e0cca8" fill-opacity="0.37"/><circle cx="484.8" cy="100.1" r="0.9" fill="#d8bc90" fill-opacity="0.46"/><circle cx="519.9" cy="89.9" r="0.8" fill="#b89868" fill-opacity="0.59"/><circle cx="516.7" cy="79.0" r="0.8" fill="#a88c68" fill-opacity="0.76"/><circle cx="469.3" cy="77.6" r="0.7" fill="#d8bc90" fill-opacity="0.46"/><circle cx="556.5" cy="152.2" r="0.9" fill="#c8a878" fill-opacity="0.33"/><circle cx="504.7" cy="98.7" r="0.7" fill="#c8a878" fill-opacity="0.41"/><circle cx="555.7" cy="93.9" r="0.8" fill="#e0cca8" fill-opacity="0.46"/><circle cx="512.1" cy="166.2" r="0.8" fill="#c8a878" fill-opacity="0.32"/><circle cx="518.3" cy="170.8" r="0.7" fill="#d8bc90" fill-opacity="0.71"/><circle cx="576.4" cy="149.7" r="0.7" fill="#b89868" fill-opacity="0.64"/><circle cx="583.0" cy="143.6" r="0.6" fill="#d8bc90" fill-opacity="0.41"/><circle cx="517.9" cy="159.2" r="0.8" fill="#a88c68" fill-opacity="0.32"/><circle cx="569.9" cy="136.6" r="0.7" fill="#a88c68" fill-opacity="0.75"/><circle cx="513.8" cy="154.6" r="0.7" fill="#d8bc90" fill-opacity="0.47"/><circle cx="522.3" cy="192.2" r="0.8" fill="#b89868" fill-opacity="0.60"/><circle cx="541.9" cy="112.2" r="0.6" fill="#c8a878" fill-opacity="0.35"/><circle cx="528.0" cy="105.0" r="0.9" fill="#a88c68" fill-opacity="0.40"/><circle cx="540.6" cy="124.7" r="0.8" fill="#a88c68" fill-opacity="0.57"/><circle cx="501.5" cy="82.7" r="0.9" fill="#e0cca8" fill-opacity="0.39"/><circle cx="557.3" cy="99.5" r="0.8" fill="#d8bc90" fill-opacity="0.50"/><circle cx="556.0" cy="96.0" r="0.7" fill="#d8bc90" fill-opacity="0.77"/><circle cx="520.0" cy="185.6" r="0.7" fill="#d8bc90" fill-opacity="0.38"/><circle cx="520.6" cy="139.8" r="0.6" fill="#d8bc90" fill-opacity="0.34"/><circle cx="517.9" cy="185.0" r="0.6" fill="#d8bc90" fill-opacity="0.53"/><circle cx="525.0" cy="83.9" r="0.8" fill="#d8bc90" fill-opacity="0.66"/><circle cx="591.4" cy="138.5" r="0.6" fill="#b89868" fill-opacity="0.66"/><circle cx="546.2" cy="123.2" r="0.8" fill="#d8bc90" fill-opacity="0.39"/><circle cx="523.1" cy="126.5" r="0.7" fill="#e0cca8" fill-opacity="0.45"/><circle cx="488.4" cy="86.5" r="0.7" fill="#a88c68" fill-opacity="0.52"/><circle cx="510.0" cy="89.9" r="0.6" fill="#e0cca8" fill-opacity="0.71"/><circle cx="585.2" cy="148.3" r="0.9" fill="#a88c68" fill-opacity="0.34"/><circle cx="547.0" cy="136.6" r="0.6" fill="#d8bc90" fill-opacity="0.78"/><circle cx="567.9" cy="156.2" r="0.6" fill="#c8a878" fill-opacity="0.39"/><circle cx="529.3" cy="174.8" r="0.9" fill="#a88c68" fill-opacity="0.50"/><circle cx="536.2" cy="123.4" r="0.7" fill="#e0cca8" fill-opacity="0.76"/><circle cx="524.4" cy="136.0" r="0.6" fill="#a88c68" fill-opacity="0.53"/><circle cx="534.2" cy="167.5" r="0.8" fill="#a88c68" fill-opacity="0.56"/><circle cx="585.1" cy="115.7" r="0.7" fill="#b89868" fill-opacity="0.41"/><circle cx="536.3" cy="110.8" r="0.6" fill="#c8a878" fill-opacity="0.71"/><circle cx="548.8" cy="141.4" r="0.8" fill="#d8bc90" fill-opacity="0.70"/><circle cx="548.2" cy="137.2" r="0.7" fill="#c8a878" fill-opacity="0.74"/><circle cx="534.1" cy="96.5" r="0.7" fill="#a88c68" fill-opacity="0.58"/><circle cx="569.7" cy="151.1" r="0.6" fill="#d8bc90" fill-opacity="0.38"/><circle cx="513.7" cy="183.9" r="0.7" fill="#a88c68" fill-opacity="0.43"/><circle cx="496.5" cy="91.9" r="0.6" fill="#c8a878" fill-opacity="0.58"/><circle cx="547.8" cy="87.7" r="0.8" fill="#b89868" fill-opacity="0.71"/><circle cx="510.3" cy="187.5" r="0.9" fill="#e0cca8" fill-opacity="0.49"/><circle cx="480.6" cy="86.9" r="0.8" fill="#a88c68" fill-opacity="0.42"/><circle cx="535.4" cy="143.9" r="0.8" fill="#d8bc90" fill-opacity="0.58"/><circle cx="464.3" cy="78.4" r="0.8" fill="#d8bc90" fill-opacity="0.36"/><circle cx="525.4" cy="133.3" r="0.8" fill="#d8bc90" fill-opacity="0.51"/><circle cx="489.3" cy="80.1" r="0.6" fill="#a88c68" fill-opacity="0.67"/><circle cx="530.1" cy="192.3" r="0.9" fill="#a88c68" fill-opacity="0.49"/><circle cx="520.5" cy="91.8" r="0.9" fill="#d8bc90" fill-opacity="0.35"/><circle cx="575.3" cy="156.5" r="0.8" fill="#c8a878" fill-opacity="0.32"/><circle cx="507.1" cy="79.3" r="0.6" fill="#e0cca8" fill-opacity="0.33"/><circle cx="528.6" cy="89.4" r="0.7" fill="#d8bc90" fill-opacity="0.77"/><circle cx="549.5" cy="81.7" r="0.6" fill="#a88c68" fill-opacity="0.77"/><circle cx="486.5" cy="74.0" r="0.6" fill="#b89868" fill-opacity="0.65"/><circle cx="547.4" cy="100.9" r="0.9" fill="#c8a878" fill-opacity="0.61"/><circle cx="522.4" cy="91.4" r="0.8" fill="#e0cca8" fill-opacity="0.54"/><circle cx="525.6" cy="92.5" r="0.7" fill="#a88c68" fill-opacity="0.64"/><circle cx="572.5" cy="105.8" r="0.9" fill="#a88c68" fill-opacity="0.59"/><circle cx="523.8" cy="88.4" r="0.9" fill="#b89868" fill-opacity="0.55"/><circle cx="546.4" cy="156.7" r="0.6" fill="#b89868" fill-opacity="0.79"/><circle cx="502.1" cy="74.9" r="0.9" fill="#d8bc90" fill-opacity="0.39"/><circle cx="510.1" cy="168.7" r="0.6" fill="#d8bc90" fill-opacity="0.74"/><circle cx="578.4" cy="156.3" r="0.8" fill="#a88c68" fill-opacity="0.50"/><circle cx="513.8" cy="156.6" r="0.8" fill="#e0cca8" fill-opacity="0.65"/><circle cx="511.8" cy="182.8" r="0.8" fill="#b89868" fill-opacity="0.34"/><circle cx="579.1" cy="145.2" r="0.6" fill="#a88c68" fill-opacity="0.54"/><circle cx="587.3" cy="145.8" r="0.9" fill="#d8bc90" fill-opacity="0.45"/><circle cx="539.4" cy="101.6" r="0.7" fill="#a88c68" fill-opacity="0.59"/><circle cx="528.2" cy="122.6" r="0.7" fill="#c8a878" fill-opacity="0.68"/><circle cx="533.1" cy="101.7" r="0.7" fill="#e0cca8" fill-opacity="0.69"/><circle cx="564.8" cy="142.4" r="0.9" fill="#d8bc90" fill-opacity="0.78"/><circle cx="529.3" cy="120.9" r="0.9" fill="#d8bc90" fill-opacity="0.31"/><circle cx="526.9" cy="167.0" r="0.9" fill="#b89868" fill-opacity="0.48"/><circle cx="510.2" cy="165.7" r="0.9" fill="#b89868" fill-opacity="0.76"/><circle cx="545.9" cy="154.3" r="0.6" fill="#c8a878" fill-opacity="0.33"/><circle cx="498.8" cy="78.3" r="0.8" fill="#c8a878" fill-opacity="0.47"/><circle cx="585.0" cy="132.0" r="0.9" fill="#a88c68" fill-opacity="0.67"/><circle cx="508.6" cy="80.1" r="0.7" fill="#b89868" fill-opacity="0.64"/><circle cx="486.6" cy="95.9" r="0.7" fill="#d8bc90" fill-opacity="0.65"/><circle cx="577.1" cy="108.5" r="0.7" fill="#d8bc90" fill-opacity="0.76"/><circle cx="519.5" cy="92.4" r="0.9" fill="#e0cca8" fill-opacity="0.45"/><circle cx="543.3" cy="103.2" r="0.6" fill="#d8bc90" fill-opacity="0.62"/><circle cx="510.0" cy="74.5" r="0.8" fill="#d8bc90" fill-opacity="0.66"/><circle cx="548.3" cy="94.8" r="0.8" fill="#c8a878" fill-opacity="0.56"/><circle cx="544.3" cy="112.6" r="0.7" fill="#c8a878" fill-opacity="0.69"/><circle cx="539.3" cy="144.7" r="0.6" fill="#c8a878" fill-opacity="0.37"/><circle cx="542.9" cy="137.0" r="0.8" fill="#b89868" fill-opacity="0.32"/><circle cx="516.3" cy="191.3" r="0.7" fill="#d8bc90" fill-opacity="0.40"/><circle cx="514.0" cy="70.5" r="0.9" fill="#d8bc90" fill-opacity="0.72"/><circle cx="535.1" cy="118.8" r="0.6" fill="#d8bc90" fill-opacity="0.61"/><circle cx="474.3" cy="83.7" r="0.8" fill="#d8bc90" fill-opacity="0.77"/><circle cx="528.6" cy="104.4" r="0.6" fill="#d8bc90" fill-opacity="0.65"/><circle cx="526.4" cy="137.3" r="0.7" fill="#a88c68" fill-opacity="0.71"/><circle cx="543.1" cy="143.7" r="0.7" fill="#b89868" fill-opacity="0.56"/><circle cx="530.3" cy="116.5" r="0.6" fill="#b89868" fill-opacity="0.36"/><circle cx="513.9" cy="87.7" r="0.8" fill="#e0cca8" fill-opacity="0.75"/><circle cx="520.1" cy="180.2" r="0.9" fill="#a88c68" fill-opacity="0.64"/><circle cx="549.5" cy="134.4" r="0.7" fill="#a88c68" fill-opacity="0.31"/><circle cx="552.7" cy="102.3" r="0.6" fill="#b89868" fill-opacity="0.38"/><circle cx="540.9" cy="92.0" r="0.8" fill="#a88c68" fill-opacity="0.45"/><circle cx="531.6" cy="87.6" r="0.7" fill="#a88c68" fill-opacity="0.53"/><circle cx="548.3" cy="137.5" r="0.6" fill="#c8a878" fill-opacity="0.77"/><circle cx="533.3" cy="100.3" r="0.9" fill="#c8a878" fill-opacity="0.63"/><circle cx="547.7" cy="83.3" r="0.7" fill="#b89868" fill-opacity="0.34"/><circle cx="558.8" cy="103.2" r="0.9" fill="#a88c68" fill-opacity="0.37"/><circle cx="576.0" cy="137.7" r="0.8" fill="#c8a878" fill-opacity="0.52"/><circle cx="519.6" cy="174.2" r="0.7" fill="#a88c68" fill-opacity="0.57"/><circle cx="582.1" cy="114.1" r="0.8" fill="#a88c68" fill-opacity="0.69"/><circle cx="471.6" cy="78.4" r="0.9" fill="#e0cca8" fill-opacity="0.65"/><circle cx="570.7" cy="104.2" r="0.7" fill="#a88c68" fill-opacity="0.58"/><circle cx="563.2" cy="102.5" r="0.9" fill="#c8a878" fill-opacity="0.52"/><circle cx="536.1" cy="147.9" r="0.9" fill="#b89868" fill-opacity="0.34"/><circle cx="554.8" cy="127.2" r="0.9" fill="#c8a878" fill-opacity="0.79"/><circle cx="553.9" cy="122.8" r="0.7" fill="#d8bc90" fill-opacity="0.34"/><circle cx="533.9" cy="135.4" r="0.8" fill="#d8bc90" fill-opacity="0.49"/><circle cx="507.7" cy="100.4" r="0.6" fill="#b89868" fill-opacity="0.72"/><circle cx="547.5" cy="122.2" r="0.6" fill="#b89868" fill-opacity="0.50"/><circle cx="578.1" cy="130.7" r="0.6" fill="#c8a878" fill-opacity="0.59"/><circle cx="511.2" cy="175.9" r="0.6" fill="#c8a878" fill-opacity="0.49"/><circle cx="543.6" cy="134.5" r="0.6" fill="#a88c68" fill-opacity="0.32"/><circle cx="534.3" cy="146.7" r="0.8" fill="#a88c68" fill-opacity="0.79"/><circle cx="567.1" cy="104.3" r="0.8" fill="#d8bc90" fill-opacity="0.63"/><circle cx="521.9" cy="156.4" r="0.6" fill="#a88c68" fill-opacity="0.67"/><circle cx="530.6" cy="94.2" r="0.8" fill="#c8a878" fill-opacity="0.31"/><circle cx="515.4" cy="92.2" r="0.8" fill="#e0cca8" fill-opacity="0.52"/><circle cx="528.6" cy="126.6" r="0.9" fill="#e0cca8" fill-opacity="0.49"/><circle cx="490.1" cy="71.7" r="0.6" fill="#c8a878" fill-opacity="0.76"/><circle cx="533.8" cy="96.0" r="0.7" fill="#c8a878" fill-opacity="0.77"/><circle cx="554.5" cy="97.8" r="0.7" fill="#d8bc90" fill-opacity="0.79"/><circle cx="549.3" cy="88.5" r="0.6" fill="#c8a878" fill-opacity="0.73"/><circle cx="496.0" cy="81.9" r="0.9" fill="#b89868" fill-opacity="0.68"/><circle cx="526.3" cy="104.9" r="0.9" fill="#a88c68" fill-opacity="0.53"/><circle cx="511.7" cy="170.5" r="0.7" fill="#a88c68" fill-opacity="0.76"/><circle cx="492.3" cy="72.1" r="0.9" fill="#d8bc90" fill-opacity="0.59"/><circle cx="515.4" cy="191.5" r="0.8" fill="#d8bc90" fill-opacity="0.50"/><circle cx="526.1" cy="128.5" r="0.6" fill="#c8a878" fill-opacity="0.69"/><circle cx="572.3" cy="133.7" r="0.6" fill="#d8bc90" fill-opacity="0.40"/><circle cx="577.3" cy="119.9" r="0.9" fill="#e0cca8" fill-opacity="0.78"/><circle cx="523.6" cy="147.3" r="0.9" fill="#a88c68" fill-opacity="0.66"/><circle cx="512.0" cy="183.5" r="0.8" fill="#a88c68" fill-opacity="0.58"/><circle cx="546.4" cy="149.2" r="0.6" fill="#a88c68" fill-opacity="0.62"/><circle cx="551.4" cy="155.2" r="0.8" fill="#b89868" fill-opacity="0.54"/><circle cx="506.5" cy="84.7" r="0.6" fill="#e0cca8" fill-opacity="0.48"/><circle cx="561.6" cy="108.1" r="0.7" fill="#c8a878" fill-opacity="0.78"/><circle cx="509.2" cy="95.0" r="0.9" fill="#a88c68" fill-opacity="0.31"/><circle cx="515.4" cy="85.5" r="0.7" fill="#e0cca8" fill-opacity="0.69"/><circle cx="522.3" cy="99.0" r="0.6" fill="#d8bc90" fill-opacity="0.53"/><circle cx="514.5" cy="168.6" r="0.8" fill="#b89868" fill-opacity="0.49"/><circle cx="520.6" cy="169.8" r="0.9" fill="#c8a878" fill-opacity="0.74"/><circle cx="535.9" cy="122.9" r="0.8" fill="#b89868" fill-opacity="0.55"/><circle cx="512.5" cy="76.3" r="0.7" fill="#d8bc90" fill-opacity="0.44"/><circle cx="466.2" cy="90.5" r="0.7" fill="#c8a878" fill-opacity="0.51"/><circle cx="474.3" cy="94.9" r="0.7" fill="#b89868" fill-opacity="0.77"/><circle cx="569.9" cy="125.6" r="0.6" fill="#c8a878" fill-opacity="0.80"/><circle cx="581.8" cy="119.8" r="0.8" fill="#d8bc90" fill-opacity="0.78"/><circle cx="475.8" cy="75.1" r="0.6" fill="#e0cca8" fill-opacity="0.76"/><circle cx="555.4" cy="105.9" r="0.9" fill="#b89868" fill-opacity="0.59"/><circle cx="518.6" cy="105.3" r="0.7" fill="#b89868" fill-opacity="0.47"/><circle cx="530.2" cy="101.5" r="0.8" fill="#a88c68" fill-opacity="0.41"/><circle cx="527.2" cy="164.7" r="0.7" fill="#c8a878" fill-opacity="0.38"/><circle cx="546.5" cy="96.3" r="0.8" fill="#a88c68" fill-opacity="0.66"/><circle cx="572.8" cy="144.4" r="0.6" fill="#b89868" fill-opacity="0.67"/><circle cx="539.6" cy="95.9" r="0.6" fill="#c8a878" fill-opacity="0.80"/><circle cx="549.3" cy="159.1" r="0.8" fill="#c8a878" fill-opacity="0.45"/><circle cx="545.2" cy="120.6" r="0.6" fill="#c8a878" fill-opacity="0.73"/><circle cx="564.7" cy="133.5" r="0.6" fill="#d8bc90" fill-opacity="0.39"/><circle cx="573.7" cy="157.6" r="0.6" fill="#b89868" fill-opacity="0.75"/><circle cx="536.7" cy="98.3" r="0.9" fill="#e0cca8" fill-opacity="0.67"/><circle cx="505.8" cy="181.4" r="0.9" fill="#e0cca8" fill-opacity="0.46"/><circle cx="512.7" cy="72.5" r="0.6" fill="#d8bc90" fill-opacity="0.60"/><circle cx="499.8" cy="75.4" r="0.8" fill="#c8a878" fill-opacity="0.55"/><circle cx="539.1" cy="137.1" r="0.7" fill="#c8a878" fill-opacity="0.47"/><circle cx="536.7" cy="177.4" r="0.9" fill="#b89868" fill-opacity="0.34"/><circle cx="549.1" cy="145.1" r="0.8" fill="#a88c68" fill-opacity="0.48"/><circle cx="539.3" cy="111.0" r="0.8" fill="#e0cca8" fill-opacity="0.42"/><circle cx="551.3" cy="153.8" r="0.8" fill="#b89868" fill-opacity="0.45"/><circle cx="564.7" cy="113.2" r="0.7" fill="#a88c68" fill-opacity="0.34"/><circle cx="478.2" cy="87.6" r="0.9" fill="#c8a878" fill-opacity="0.39"/><circle cx="520.4" cy="171.2" r="0.6" fill="#a88c68" fill-opacity="0.40"/><circle cx="513.0" cy="195.6" r="0.6" fill="#c8a878" fill-opacity="0.62"/><circle cx="564.8" cy="147.8" r="0.8" fill="#c8a878" fill-opacity="0.38"/><circle cx="525.6" cy="118.6" r="0.9" fill="#e0cca8" fill-opacity="0.57"/><circle cx="508.0" cy="72.0" r="0.7" fill="#d8bc90" fill-opacity="0.41"/><circle cx="516.5" cy="171.8" r="0.9" fill="#c8a878" fill-opacity="0.66"/><circle cx="571.6" cy="145.4" r="0.8" fill="#c8a878" fill-opacity="0.49"/><circle cx="512.8" cy="103.1" r="0.6" fill="#c8a878" fill-opacity="0.31"/><circle cx="531.4" cy="118.6" r="0.8" fill="#a88c68" fill-opacity="0.68"/><circle cx="569.8" cy="149.4" r="0.9" fill="#a88c68" fill-opacity="0.33"/><circle cx="576.4" cy="161.3" r="0.8" fill="#b89868" fill-opacity="0.78"/><circle cx="560.7" cy="152.3" r="0.8" fill="#e0cca8" fill-opacity="0.42"/><circle cx="586.5" cy="141.4" r="0.8" fill="#a88c68" fill-opacity="0.66"/><circle cx="522.4" cy="134.7" r="0.8" fill="#d8bc90" fill-opacity="0.53"/><circle cx="519.1" cy="203.7" r="0.6" fill="#a88c68" fill-opacity="0.74"/><circle cx="526.8" cy="192.1" r="0.7" fill="#a88c68" fill-opacity="0.35"/><circle cx="502.5" cy="207.6" r="0.7" fill="#e0cca8" fill-opacity="0.36"/><circle cx="514.9" cy="211.9" r="0.6" fill="#c8a878" fill-opacity="0.47"/><circle cx="539.5" cy="212.4" r="0.7" fill="#b89868" fill-opacity="0.63"/><circle cx="513.2" cy="207.6" r="0.7" fill="#c8a878" fill-opacity="0.52"/><circle cx="499.6" cy="202.1" r="0.9" fill="#d8bc90" fill-opacity="0.66"/><circle cx="495.6" cy="216.2" r="0.7" fill="#a88c68" fill-opacity="0.58"/><circle cx="610.4" cy="216.1" r="0.7" fill="#d8bc90" fill-opacity="0.53"/><circle cx="489.3" cy="229.6" r="0.7" fill="#a88c68" fill-opacity="0.51"/><circle cx="549.1" cy="216.5" r="0.7" fill="#e0cca8" fill-opacity="0.35"/><circle cx="598.2" cy="227.2" r="0.8" fill="#e0cca8" fill-opacity="0.35"/><circle cx="596.0" cy="213.0" r="0.9" fill="#b89868" fill-opacity="0.74"/><circle cx="556.1" cy="233.8" r="0.7" fill="#d8bc90" fill-opacity="0.74"/><circle cx="603.9" cy="224.6" r="0.9" fill="#c8a878" fill-opacity="0.45"/><circle cx="588.1" cy="234.2" r="0.8" fill="#c8a878" fill-opacity="0.54"/><circle cx="595.7" cy="223.4" r="0.8" fill="#d8bc90" fill-opacity="0.35"/><circle cx="607.5" cy="224.0" r="0.7" fill="#a88c68" fill-opacity="0.54"/><circle cx="480.1" cy="224.2" r="0.8" fill="#c8a878" fill-opacity="0.41"/><circle cx="534.4" cy="244.2" r="0.9" fill="#c8a878" fill-opacity="0.34"/><circle cx="552.5" cy="264.2" r="0.7" fill="#a88c68" fill-opacity="0.43"/><circle cx="514.4" cy="229.4" r="0.7" fill="#c8a878" fill-opacity="0.64"/><circle cx="521.8" cy="228.5" r="0.9" fill="#e0cca8" fill-opacity="0.79"/><circle cx="548.3" cy="235.7" r="0.7" fill="#a88c68" fill-opacity="0.50"/><circle cx="539.6" cy="251.0" r="0.8" fill="#e0cca8" fill-opacity="0.76"/><circle cx="505.0" cy="217.7" r="0.6" fill="#d8bc90" fill-opacity="0.69"/><circle cx="496.7" cy="242.3" r="0.9" fill="#b89868" fill-opacity="0.57"/><circle cx="530.0" cy="271.4" r="0.8" fill="#d8bc90" fill-opacity="0.41"/><circle cx="568.3" cy="232.9" r="0.7" fill="#c8a878" fill-opacity="0.67"/><circle cx="542.4" cy="242.3" r="0.6" fill="#a88c68" fill-opacity="0.33"/><circle cx="619.7" cy="218.7" r="0.7" fill="#d8bc90" fill-opacity="0.44"/><circle cx="623.3" cy="208.1" r="0.6" fill="#a88c68" fill-opacity="0.55"/><circle cx="527.8" cy="276.2" r="0.8" fill="#d8bc90" fill-opacity="0.46"/><circle cx="542.7" cy="245.1" r="0.8" fill="#e0cca8" fill-opacity="0.56"/><circle cx="582.9" cy="216.4" r="0.6" fill="#d8bc90" fill-opacity="0.55"/><circle cx="522.4" cy="238.7" r="0.9" fill="#a88c68" fill-opacity="0.55"/><circle cx="528.3" cy="219.3" r="0.6" fill="#b89868" fill-opacity="0.34"/><circle cx="526.1" cy="246.6" r="0.9" fill="#d8bc90" fill-opacity="0.30"/><circle cx="533.6" cy="231.4" r="0.7" fill="#b89868" fill-opacity="0.79"/><circle cx="536.3" cy="282.8" r="0.7" fill="#c8a878" fill-opacity="0.79"/><circle cx="605.7" cy="225.1" r="0.6" fill="#d8bc90" fill-opacity="0.57"/><circle cx="552.6" cy="250.2" r="0.6" fill="#a88c68" fill-opacity="0.71"/><circle cx="528.7" cy="277.0" r="0.6" fill="#d8bc90" fill-opacity="0.67"/><circle cx="572.2" cy="227.6" r="0.7" fill="#d8bc90" fill-opacity="0.48"/><circle cx="563.4" cy="231.5" r="0.8" fill="#d8bc90" fill-opacity="0.42"/><circle cx="499.4" cy="221.1" r="0.8" fill="#a88c68" fill-opacity="0.32"/><circle cx="579.9" cy="232.9" r="0.6" fill="#e0cca8" fill-opacity="0.56"/><circle cx="559.1" cy="223.7" r="0.8" fill="#c8a878" fill-opacity="0.78"/><circle cx="552.8" cy="259.2" r="0.7" fill="#c8a878" fill-opacity="0.38"/><circle cx="579.7" cy="236.5" r="0.9" fill="#d8bc90" fill-opacity="0.52"/><circle cx="620.4" cy="210.3" r="0.6" fill="#e0cca8" fill-opacity="0.42"/><circle cx="553.2" cy="237.0" r="0.7" fill="#e0cca8" fill-opacity="0.68"/><circle cx="587.1" cy="226.4" r="0.8" fill="#b89868" fill-opacity="0.59"/><circle cx="536.5" cy="263.5" r="0.6" fill="#a88c68" fill-opacity="0.75"/><circle cx="551.1" cy="253.2" r="0.9" fill="#a88c68" fill-opacity="0.45"/><circle cx="519.1" cy="237.0" r="0.8" fill="#e0cca8" fill-opacity="0.72"/><circle cx="492.4" cy="220.2" r="0.7" fill="#d8bc90" fill-opacity="0.64"/><circle cx="612.6" cy="227.4" r="0.9" fill="#a88c68" fill-opacity="0.35"/><circle cx="561.2" cy="227.2" r="0.6" fill="#d8bc90" fill-opacity="0.49"/><circle cx="514.0" cy="227.2" r="0.9" fill="#a88c68" fill-opacity="0.62"/><circle cx="607.0" cy="231.6" r="0.8" fill="#a88c68" fill-opacity="0.69"/><circle cx="526.6" cy="220.7" r="0.6" fill="#c8a878" fill-opacity="0.76"/><circle cx="517.0" cy="245.5" r="0.6" fill="#d8bc90" fill-opacity="0.37"/><circle cx="545.7" cy="238.6" r="0.8" fill="#d8bc90" fill-opacity="0.53"/><circle cx="567.1" cy="215.0" r="0.8" fill="#d8bc90" fill-opacity="0.35"/><circle cx="507.4" cy="248.2" r="0.7" fill="#d8bc90" fill-opacity="0.53"/><circle cx="547.0" cy="263.2" r="0.6" fill="#a88c68" fill-opacity="0.51"/><circle cx="536.1" cy="287.3" r="0.8" fill="#d8bc90" fill-opacity="0.43"/><circle cx="486.4" cy="220.9" r="0.8" fill="#e0cca8" fill-opacity="0.36"/><circle cx="587.2" cy="213.8" r="0.9" fill="#b89868" fill-opacity="0.66"/><circle cx="489.5" cy="223.5" r="0.9" fill="#a88c68" fill-opacity="0.68"/><circle cx="526.9" cy="287.2" r="0.6" fill="#a88c68" fill-opacity="0.48"/><circle cx="599.7" cy="223.3" r="0.6" fill="#e0cca8" fill-opacity="0.72"/><circle cx="616.5" cy="213.8" r="0.7" fill="#e0cca8" fill-opacity="0.76"/><circle cx="538.0" cy="267.9" r="0.8" fill="#c8a878" fill-opacity="0.38"/><circle cx="523.9" cy="271.1" r="0.7" fill="#a88c68" fill-opacity="0.48"/><circle cx="518.6" cy="251.3" r="0.9" fill="#e0cca8" fill-opacity="0.56"/><circle cx="614.3" cy="212.3" r="0.6" fill="#e0cca8" fill-opacity="0.52"/><circle cx="611.7" cy="230.6" r="0.6" fill="#a88c68" fill-opacity="0.57"/><circle cx="504.9" cy="218.8" r="0.6" fill="#e0cca8" fill-opacity="0.31"/><circle cx="553.4" cy="223.0" r="0.7" fill="#e0cca8" fill-opacity="0.74"/><circle cx="478.7" cy="244.5" r="0.9" fill="#a88c68" fill-opacity="0.74"/><circle cx="546.8" cy="249.2" r="0.9" fill="#d8bc90" fill-opacity="0.71"/><circle cx="593.8" cy="218.0" r="0.8" fill="#c8a878" fill-opacity="0.38"/><circle cx="507.0" cy="228.8" r="0.8" fill="#a88c68" fill-opacity="0.36"/><circle cx="549.5" cy="248.3" r="0.8" fill="#b89868" fill-opacity="0.66"/><circle cx="517.0" cy="219.6" r="0.6" fill="#e0cca8" fill-opacity="0.59"/><circle cx="497.8" cy="249.2" r="0.6" fill="#b89868" fill-opacity="0.69"/><circle cx="497.5" cy="231.8" r="0.8" fill="#a88c68" fill-opacity="0.76"/><circle cx="618.9" cy="220.0" r="0.9" fill="#c8a878" fill-opacity="0.47"/><circle cx="551.6" cy="250.5" r="0.9" fill="#b89868" fill-opacity="0.64"/><circle cx="543.9" cy="266.2" r="0.6" fill="#c8a878" fill-opacity="0.56"/><circle cx="531.8" cy="242.9" r="0.6" fill="#b89868" fill-opacity="0.72"/><circle cx="522.8" cy="240.4" r="0.7" fill="#a88c68" fill-opacity="0.35"/><circle cx="621.7" cy="217.2" r="0.9" fill="#e0cca8" fill-opacity="0.37"/><circle cx="528.1" cy="242.4" r="0.8" fill="#d8bc90" fill-opacity="0.75"/><circle cx="513.1" cy="245.7" r="0.6" fill="#c8a878" fill-opacity="0.73"/><circle cx="505.2" cy="224.9" r="0.9" fill="#a88c68" fill-opacity="0.44"/><circle cx="541.8" cy="243.5" r="0.8" fill="#d8bc90" fill-opacity="0.59"/><circle cx="543.6" cy="222.4" r="0.8" fill="#e0cca8" fill-opacity="0.78"/><circle cx="561.5" cy="216.1" r="0.8" fill="#a88c68" fill-opacity="0.59"/><circle cx="581.3" cy="221.4" r="0.9" fill="#e0cca8" fill-opacity="0.39"/><circle cx="552.8" cy="236.1" r="0.6" fill="#c8a878" fill-opacity="0.40"/><circle cx="559.2" cy="220.2" r="0.9" fill="#e0cca8" fill-opacity="0.70"/><circle cx="568.3" cy="236.0" r="0.6" fill="#e0cca8" fill-opacity="0.38"/><circle cx="554.0" cy="226.1" r="0.9" fill="#b89868" fill-opacity="0.35"/><circle cx="508.0" cy="258.3" r="0.7" fill="#d8bc90" fill-opacity="0.50"/><circle cx="488.7" cy="231.7" r="0.7" fill="#d8bc90" fill-opacity="0.42"/><circle cx="496.3" cy="225.7" r="0.7" fill="#d8bc90" fill-opacity="0.80"/><circle cx="520.7" cy="237.1" r="0.8" fill="#a88c68" fill-opacity="0.42"/><circle cx="543.0" cy="234.4" r="0.8" fill="#e0cca8" fill-opacity="0.68"/><circle cx="534.6" cy="286.0" r="0.7" fill="#b89868" fill-opacity="0.43"/><circle cx="548.4" cy="262.5" r="0.8" fill="#d8bc90" fill-opacity="0.32"/><circle cx="521.7" cy="263.1" r="0.9" fill="#d8bc90" fill-opacity="0.34"/><circle cx="499.5" cy="226.5" r="0.7" fill="#d8bc90" fill-opacity="0.49"/><circle cx="481.6" cy="234.0" r="0.9" fill="#b89868" fill-opacity="0.47"/><circle cx="553.6" cy="236.6" r="0.6" fill="#e0cca8" fill-opacity="0.47"/><circle cx="513.7" cy="231.7" r="0.7" fill="#b89868" fill-opacity="0.65"/><circle cx="570.8" cy="218.9" r="0.6" fill="#c8a878" fill-opacity="0.42"/><circle cx="510.7" cy="246.6" r="0.8" fill="#e0cca8" fill-opacity="0.57"/><circle cx="539.5" cy="227.7" r="0.6" fill="#e0cca8" fill-opacity="0.55"/><circle cx="620.0" cy="228.2" r="0.6" fill="#d8bc90" fill-opacity="0.60"/><circle cx="570.9" cy="235.4" r="0.9" fill="#c8a878" fill-opacity="0.36"/><circle cx="487.7" cy="218.4" r="0.9" fill="#c8a878" fill-opacity="0.38"/><circle cx="519.1" cy="234.2" r="0.9" fill="#b89868" fill-opacity="0.37"/><circle cx="517.9" cy="226.3" r="0.6" fill="#b89868" fill-opacity="0.62"/><circle cx="505.1" cy="219.7" r="0.6" fill="#e0cca8" fill-opacity="0.57"/><circle cx="548.5" cy="222.6" r="0.7" fill="#a88c68" fill-opacity="0.72"/><circle cx="493.6" cy="227.9" r="0.8" fill="#b89868" fill-opacity="0.34"/><circle cx="587.5" cy="224.4" r="0.9" fill="#e0cca8" fill-opacity="0.32"/><circle cx="573.0" cy="214.0" r="0.8" fill="#a88c68" fill-opacity="0.71"/><circle cx="530.9" cy="219.8" r="0.6" fill="#a88c68" fill-opacity="0.50"/><circle cx="489.3" cy="223.1" r="0.9" fill="#b89868" fill-opacity="0.35"/><circle cx="526.1" cy="250.5" r="0.9" fill="#c8a878" fill-opacity="0.42"/><circle cx="588.8" cy="221.7" r="0.7" fill="#a88c68" fill-opacity="0.45"/><circle cx="492.0" cy="232.1" r="0.6" fill="#a88c68" fill-opacity="0.33"/><circle cx="517.8" cy="240.3" r="0.7" fill="#e0cca8" fill-opacity="0.77"/><circle cx="518.5" cy="217.1" r="0.7" fill="#a88c68" fill-opacity="0.56"/><circle cx="529.2" cy="239.6" r="0.7" fill="#c8a878" fill-opacity="0.32"/><circle cx="538.8" cy="272.8" r="0.6" fill="#c8a878" fill-opacity="0.42"/><circle cx="549.7" cy="264.4" r="0.9" fill="#c8a878" fill-opacity="0.47"/><circle cx="553.6" cy="242.3" r="0.8" fill="#a88c68" fill-opacity="0.46"/><circle cx="593.2" cy="233.7" r="0.9" fill="#b89868" fill-opacity="0.41"/><circle cx="617.7" cy="210.1" r="0.9" fill="#e0cca8" fill-opacity="0.55"/><circle cx="537.1" cy="254.8" r="0.6" fill="#d8bc90" fill-opacity="0.59"/><circle cx="484.0" cy="217.2" r="0.7" fill="#d8bc90" fill-opacity="0.47"/><circle cx="613.3" cy="214.0" r="0.6" fill="#d8bc90" fill-opacity="0.69"/><circle cx="584.2" cy="220.6" r="0.7" fill="#b89868" fill-opacity="0.38"/><circle cx="497.1" cy="247.1" r="0.7" fill="#d8bc90" fill-opacity="0.34"/><circle cx="529.4" cy="252.2" r="0.7" fill="#e0cca8" fill-opacity="0.41"/><circle cx="540.6" cy="273.8" r="0.8" fill="#e0cca8" fill-opacity="0.49"/><circle cx="597.1" cy="224.5" r="0.6" fill="#c8a878" fill-opacity="0.67"/><circle cx="518.0" cy="229.9" r="0.7" fill="#e0cca8" fill-opacity="0.41"/><circle cx="553.7" cy="246.5" r="0.7" fill="#c8a878" fill-opacity="0.39"/><circle cx="597.2" cy="217.3" r="0.6" fill="#b89868" fill-opacity="0.48"/><circle cx="493.9" cy="241.3" r="0.6" fill="#e0cca8" fill-opacity="0.44"/><circle cx="615.8" cy="227.2" r="0.7" fill="#b89868" fill-opacity="0.46"/><circle cx="548.8" cy="229.7" r="0.7" fill="#d8bc90" fill-opacity="0.45"/><circle cx="560.4" cy="228.7" r="0.8" fill="#a88c68" fill-opacity="0.60"/><circle cx="543.2" cy="232.1" r="0.8" fill="#d8bc90" fill-opacity="0.48"/><circle cx="566.9" cy="220.0" r="0.8" fill="#e0cca8" fill-opacity="0.40"/><circle cx="543.7" cy="227.2" r="0.9" fill="#e0cca8" fill-opacity="0.60"/><circle cx="622.0" cy="218.4" r="0.6" fill="#e0cca8" fill-opacity="0.57"/><circle cx="526.8" cy="258.0" r="0.8" fill="#a88c68" fill-opacity="0.68"/><circle cx="523.0" cy="238.7" r="0.6" fill="#c8a878" fill-opacity="0.34"/><circle cx="606.0" cy="224.3" r="0.6" fill="#a88c68" fill-opacity="0.50"/><circle cx="611.6" cy="228.9" r="0.9" fill="#c8a878" fill-opacity="0.33"/><circle cx="474.6" cy="240.6" r="0.6" fill="#c8a878" fill-opacity="0.51"/><circle cx="526.1" cy="257.5" r="0.7" fill="#a88c68" fill-opacity="0.45"/><circle cx="570.0" cy="216.7" r="0.6" fill="#e0cca8" fill-opacity="0.50"/><circle cx="576.5" cy="236.9" r="0.8" fill="#b89868" fill-opacity="0.60"/><circle cx="545.3" cy="268.5" r="0.6" fill="#d8bc90" fill-opacity="0.35"/><circle cx="543.9" cy="229.8" r="0.8" fill="#d8bc90" fill-opacity="0.77"/><circle cx="559.8" cy="219.7" r="0.7" fill="#b89868" fill-opacity="0.54"/><circle cx="495.9" cy="239.4" r="0.8" fill="#d8bc90" fill-opacity="0.41"/><circle cx="578.3" cy="224.4" r="0.8" fill="#c8a878" fill-opacity="0.73"/><circle cx="529.6" cy="224.1" r="0.9" fill="#c8a878" fill-opacity="0.30"/><circle cx="576.0" cy="220.7" r="0.7" fill="#a88c68" fill-opacity="0.68"/><circle cx="519.3" cy="247.8" r="0.7" fill="#e0cca8" fill-opacity="0.46"/><circle cx="576.9" cy="232.8" r="0.7" fill="#e0cca8" fill-opacity="0.69"/><circle cx="542.1" cy="281.4" r="0.6" fill="#b89868" fill-opacity="0.65"/><circle cx="574.2" cy="240.3" r="0.7" fill="#e0cca8" fill-opacity="0.70"/><circle cx="539.8" cy="259.8" r="0.9" fill="#d8bc90" fill-opacity="0.43"/><circle cx="493.2" cy="243.1" r="0.7" fill="#b89868" fill-opacity="0.55"/><circle cx="517.1" cy="223.7" r="0.6" fill="#d8bc90" fill-opacity="0.31"/><circle cx="501.8" cy="235.8" r="0.9" fill="#c8a878" fill-opacity="0.70"/><circle cx="516.4" cy="242.2" r="0.7" fill="#a88c68" fill-opacity="0.31"/><circle cx="478.6" cy="242.9" r="0.9" fill="#b89868" fill-opacity="0.41"/><circle cx="567.8" cy="223.1" r="0.7" fill="#a88c68" fill-opacity="0.59"/><circle cx="593.4" cy="215.7" r="0.8" fill="#c8a878" fill-opacity="0.44"/><circle cx="542.6" cy="244.5" r="0.8" fill="#d8bc90" fill-opacity="0.61"/><circle cx="565.3" cy="239.1" r="0.8" fill="#a88c68" fill-opacity="0.48"/><circle cx="528.0" cy="239.0" r="0.7" fill="#c8a878" fill-opacity="0.42"/><circle cx="473.7" cy="243.9" r="0.7" fill="#b89868" fill-opacity="0.33"/><circle cx="591.4" cy="219.2" r="0.8" fill="#d8bc90" fill-opacity="0.39"/><circle cx="549.2" cy="226.6" r="0.9" fill="#b89868" fill-opacity="0.38"/><circle cx="616.4" cy="214.4" r="0.9" fill="#a88c68" fill-opacity="0.76"/><circle cx="520.2" cy="235.6" r="0.8" fill="#c8a878" fill-opacity="0.60"/><circle cx="539.0" cy="219.6" r="0.7" fill="#d8bc90" fill-opacity="0.79"/><circle cx="583.1" cy="237.4" r="0.6" fill="#e0cca8" fill-opacity="0.61"/><circle cx="533.0" cy="253.0" r="0.9" fill="#d8bc90" fill-opacity="0.40"/><circle cx="521.1" cy="220.4" r="0.8" fill="#e0cca8" fill-opacity="0.46"/><circle cx="503.0" cy="253.6" r="0.6" fill="#c8a878" fill-opacity="0.60"/><circle cx="495.3" cy="229.8" r="0.7" fill="#a88c68" fill-opacity="0.41"/><circle cx="510.5" cy="251.1" r="0.8" fill="#b89868" fill-opacity="0.79"/><circle cx="489.9" cy="222.0" r="0.7" fill="#a88c68" fill-opacity="0.72"/><circle cx="509.4" cy="238.8" r="0.8" fill="#d8bc90" fill-opacity="0.74"/><circle cx="508.4" cy="230.6" r="0.7" fill="#e0cca8" fill-opacity="0.58"/><circle cx="529.4" cy="234.9" r="0.9" fill="#c8a878" fill-opacity="0.77"/><circle cx="602.3" cy="219.1" r="0.9" fill="#a88c68" fill-opacity="0.35"/><circle cx="485.1" cy="231.4" r="0.6" fill="#c8a878" fill-opacity="0.66"/><circle cx="497.6" cy="240.7" r="0.9" fill="#c8a878" fill-opacity="0.79"/><circle cx="527.8" cy="283.5" r="0.8" fill="#e0cca8" fill-opacity="0.40"/><circle cx="571.5" cy="228.3" r="0.6" fill="#c8a878" fill-opacity="0.39"/><circle cx="592.4" cy="225.3" r="0.8" fill="#a88c68" fill-opacity="0.74"/><circle cx="582.9" cy="225.4" r="0.8" fill="#e0cca8" fill-opacity="0.68"/><circle cx="508.8" cy="222.1" r="0.8" fill="#e0cca8" fill-opacity="0.66"/><circle cx="480.8" cy="224.8" r="0.9" fill="#e0cca8" fill-opacity="0.66"/><circle cx="552.9" cy="234.7" r="0.8" fill="#b89868" fill-opacity="0.59"/><circle cx="538.3" cy="244.3" r="0.7" fill="#b89868" fill-opacity="0.33"/><circle cx="583.1" cy="225.1" r="0.6" fill="#b89868" fill-opacity="0.60"/><circle cx="543.3" cy="238.1" r="0.6" fill="#a88c68" fill-opacity="0.70"/><circle cx="590.2" cy="227.2" r="0.7" fill="#c8a878" fill-opacity="0.44"/><circle cx="541.0" cy="251.0" r="0.9" fill="#d8bc90" fill-opacity="0.67"/><circle cx="494.4" cy="245.7" r="0.9" fill="#e0cca8" fill-opacity="0.54"/><circle cx="550.9" cy="239.5" r="0.9" fill="#b89868" fill-opacity="0.71"/><circle cx="511.0" cy="240.1" r="0.7" fill="#a88c68" fill-opacity="0.57"/><circle cx="546.3" cy="269.7" r="0.8" fill="#d8bc90" fill-opacity="0.39"/><circle cx="499.3" cy="239.1" r="0.7" fill="#c8a878" fill-opacity="0.69"/><circle cx="602.0" cy="236.5" r="0.6" fill="#a88c68" fill-opacity="0.51"/><circle cx="555.0" cy="255.3" r="0.8" fill="#b89868" fill-opacity="0.50"/><circle cx="525.6" cy="263.7" r="0.8" fill="#e0cca8" fill-opacity="0.74"/><circle cx="527.5" cy="229.6" r="0.8" fill="#a88c68" fill-opacity="0.50"/><circle cx="512.4" cy="246.4" r="0.7" fill="#d8bc90" fill-opacity="0.39"/><circle cx="482.2" cy="237.2" r="0.6" fill="#c8a878" fill-opacity="0.45"/><circle cx="592.4" cy="217.3" r="0.9" fill="#d8bc90" fill-opacity="0.61"/><circle cx="508.4" cy="221.3" r="0.8" fill="#e0cca8" fill-opacity="0.37"/><circle cx="491.8" cy="246.3" r="0.9" fill="#c8a878" fill-opacity="0.46"/><circle cx="497.0" cy="230.3" r="0.8" fill="#c8a878" fill-opacity="0.46"/><circle cx="540.8" cy="217.5" r="0.6" fill="#b89868" fill-opacity="0.32"/><circle cx="617.6" cy="216.9" r="0.8" fill="#d8bc90" fill-opacity="0.34"/><circle cx="601.0" cy="220.1" r="0.6" fill="#e0cca8" fill-opacity="0.57"/><circle cx="481.6" cy="243.7" r="0.7" fill="#e0cca8" fill-opacity="0.31"/><circle cx="498.7" cy="230.9" r="0.9" fill="#c8a878" fill-opacity="0.54"/><circle cx="612.0" cy="225.5" r="0.7" fill="#c8a878" fill-opacity="0.72"/><circle cx="483.9" cy="238.7" r="0.7" fill="#a88c68" fill-opacity="0.55"/><circle cx="551.1" cy="252.4" r="0.6" fill="#c8a878" fill-opacity="0.38"/><circle cx="539.7" cy="231.2" r="0.7" fill="#b89868" fill-opacity="0.62"/><circle cx="490.1" cy="218.6" r="0.8" fill="#d8bc90" fill-opacity="0.55"/><circle cx="490.3" cy="228.7" r="0.6" fill="#a88c68" fill-opacity="0.47"/><circle cx="617.4" cy="234.7" r="0.9" fill="#a88c68" fill-opacity="0.68"/><circle cx="486.7" cy="225.9" r="0.9" fill="#b89868" fill-opacity="0.37"/><circle cx="487.1" cy="225.8" r="0.7" fill="#d8bc90" fill-opacity="0.50"/><circle cx="553.8" cy="225.9" r="0.6" fill="#d8bc90" fill-opacity="0.42"/><circle cx="519.5" cy="239.1" r="0.7" fill="#a88c68" fill-opacity="0.33"/><circle cx="565.1" cy="222.5" r="0.8" fill="#e0cca8" fill-opacity="0.67"/><circle cx="544.9" cy="263.8" r="0.6" fill="#a88c68" fill-opacity="0.52"/><circle cx="519.0" cy="252.4" r="0.8" fill="#d8bc90" fill-opacity="0.40"/><circle cx="565.6" cy="234.6" r="0.6" fill="#c8a878" fill-opacity="0.41"/><circle cx="551.2" cy="223.8" r="0.7" fill="#c8a878" fill-opacity="0.61"/><circle cx="526.8" cy="224.4" r="0.9" fill="#c8a878" fill-opacity="0.48"/><circle cx="615.8" cy="230.1" r="0.6" fill="#a88c68" fill-opacity="0.74"/><circle cx="569.7" cy="236.6" r="0.6" fill="#d8bc90" fill-opacity="0.47"/><circle cx="495.2" cy="233.7" r="0.7" fill="#b89868" fill-opacity="0.67"/><circle cx="506.5" cy="229.9" r="0.8" fill="#c8a878" fill-opacity="0.63"/><circle cx="540.7" cy="251.6" r="0.9" fill="#b89868" fill-opacity="0.79"/><circle cx="551.2" cy="243.8" r="0.7" fill="#d8bc90" fill-opacity="0.32"/><circle cx="477.2" cy="241.0" r="0.7" fill="#c8a878" fill-opacity="0.57"/><circle cx="484.2" cy="242.6" r="0.9" fill="#a88c68" fill-opacity="0.55"/><circle cx="601.8" cy="217.2" r="0.7" fill="#b89868" fill-opacity="0.67"/><circle cx="519.7" cy="221.4" r="0.6" fill="#c8a878" fill-opacity="0.51"/><circle cx="580.1" cy="222.7" r="0.7" fill="#c8a878" fill-opacity="0.36"/><circle cx="511.5" cy="239.8" r="0.7" fill="#d8bc90" fill-opacity="0.56"/><circle cx="493.5" cy="245.5" r="0.6" fill="#d8bc90" fill-opacity="0.51"/><circle cx="544.0" cy="274.4" r="0.6" fill="#b89868" fill-opacity="0.66"/><circle cx="541.7" cy="259.6" r="0.9" fill="#d8bc90" fill-opacity="0.53"/><circle cx="573.9" cy="224.2" r="0.8" fill="#e0cca8" fill-opacity="0.59"/><circle cx="530.7" cy="251.7" r="0.6" fill="#e0cca8" fill-opacity="0.44"/><circle cx="584.3" cy="227.4" r="0.8" fill="#d8bc90" fill-opacity="0.78"/><circle cx="508.0" cy="241.6" r="0.8" fill="#e0cca8" fill-opacity="0.35"/><circle cx="545.1" cy="250.2" r="0.8" fill="#e0cca8" fill-opacity="0.72"/><circle cx="521.5" cy="260.8" r="0.9" fill="#a88c68" fill-opacity="0.42"/><circle cx="508.2" cy="224.7" r="0.7" fill="#b89868" fill-opacity="0.55"/><circle cx="616.3" cy="230.6" r="0.9" fill="#a88c68" fill-opacity="0.51"/><circle cx="546.4" cy="279.4" r="0.9" fill="#b89868" fill-opacity="0.39"/><circle cx="603.5" cy="214.1" r="0.7" fill="#a88c68" fill-opacity="0.38"/><circle cx="526.7" cy="240.0" r="0.7" fill="#a88c68" fill-opacity="0.71"/><circle cx="574.3" cy="218.0" r="0.7" fill="#a88c68" fill-opacity="0.48"/><circle cx="526.9" cy="245.2" r="0.8" fill="#e0cca8" fill-opacity="0.62"/><circle cx="494.9" cy="239.8" r="0.8" fill="#c8a878" fill-opacity="0.48"/><circle cx="589.7" cy="231.8" r="0.8" fill="#d8bc90" fill-opacity="0.70"/><circle cx="484.8" cy="237.4" r="0.6" fill="#c8a878" fill-opacity="0.60"/><circle cx="526.4" cy="236.7" r="0.9" fill="#c8a878" fill-opacity="0.52"/><circle cx="539.4" cy="284.8" r="0.9" fill="#e0cca8" fill-opacity="0.65"/><circle cx="580.8" cy="325.3" r="0.7" fill="#e0cca8" fill-opacity="0.57"/><circle cx="537.1" cy="379.8" r="0.7" fill="#c8a878" fill-opacity="0.53"/><circle cx="549.2" cy="363.9" r="0.9" fill="#b89868" fill-opacity="0.31"/><circle cx="549.2" cy="340.1" r="0.6" fill="#e0cca8" fill-opacity="0.37"/><circle cx="534.8" cy="285.6" r="0.9" fill="#a88c68" fill-opacity="0.63"/><circle cx="569.5" cy="313.9" r="0.6" fill="#a88c68" fill-opacity="0.71"/><circle cx="550.3" cy="308.6" r="0.6" fill="#b89868" fill-opacity="0.80"/><circle cx="566.6" cy="318.6" r="0.6" fill="#a88c68" fill-opacity="0.77"/><circle cx="553.0" cy="335.0" r="0.8" fill="#e0cca8" fill-opacity="0.43"/><circle cx="532.7" cy="289.5" r="0.8" fill="#a88c68" fill-opacity="0.33"/><circle cx="568.2" cy="310.9" r="0.8" fill="#b89868" fill-opacity="0.64"/><circle cx="542.8" cy="295.5" r="0.6" fill="#a88c68" fill-opacity="0.38"/><circle cx="550.5" cy="342.5" r="0.9" fill="#a88c68" fill-opacity="0.50"/><circle cx="546.6" cy="315.6" r="0.7" fill="#d8bc90" fill-opacity="0.70"/><circle cx="537.1" cy="283.1" r="0.6" fill="#b89868" fill-opacity="0.66"/><circle cx="562.8" cy="324.3" r="0.6" fill="#d8bc90" fill-opacity="0.48"/><circle cx="528.1" cy="374.7" r="0.7" fill="#e0cca8" fill-opacity="0.49"/><circle cx="542.7" cy="345.6" r="0.9" fill="#c8a878" fill-opacity="0.73"/><circle cx="536.1" cy="348.9" r="0.7" fill="#b89868" fill-opacity="0.54"/><circle cx="558.4" cy="372.2" r="0.7" fill="#d8bc90" fill-opacity="0.73"/><circle cx="544.6" cy="372.2" r="0.6" fill="#d8bc90" fill-opacity="0.38"/><circle cx="571.8" cy="333.0" r="0.9" fill="#b89868" fill-opacity="0.73"/><circle cx="559.4" cy="321.7" r="0.8" fill="#b89868" fill-opacity="0.56"/><circle cx="549.1" cy="310.4" r="0.7" fill="#a88c68" fill-opacity="0.71"/><circle cx="575.5" cy="314.6" r="0.7" fill="#d8bc90" fill-opacity="0.48"/><circle cx="537.5" cy="272.6" r="0.8" fill="#d8bc90" fill-opacity="0.61"/><circle cx="569.8" cy="345.2" r="0.7" fill="#e0cca8" fill-opacity="0.30"/><circle cx="585.8" cy="329.6" r="0.8" fill="#e0cca8" fill-opacity="0.71"/><circle cx="578.1" cy="331.0" r="0.8" fill="#e0cca8" fill-opacity="0.77"/><circle cx="540.6" cy="359.7" r="0.8" fill="#d8bc90" fill-opacity="0.67"/><circle cx="565.9" cy="356.9" r="0.6" fill="#b89868" fill-opacity="0.39"/><circle cx="571.7" cy="316.0" r="0.9" fill="#d8bc90" fill-opacity="0.59"/><circle cx="572.7" cy="349.2" r="0.7" fill="#a88c68" fill-opacity="0.74"/><circle cx="544.2" cy="366.8" r="0.9" fill="#d8bc90" fill-opacity="0.63"/><circle cx="572.0" cy="328.6" r="0.6" fill="#b89868" fill-opacity="0.77"/><circle cx="566.7" cy="335.9" r="0.8" fill="#d8bc90" fill-opacity="0.40"/><circle cx="535.5" cy="376.3" r="0.9" fill="#a88c68" fill-opacity="0.58"/><circle cx="539.3" cy="282.7" r="0.8" fill="#b89868" fill-opacity="0.37"/><circle cx="545.1" cy="341.3" r="0.7" fill="#d8bc90" fill-opacity="0.33"/><circle cx="554.5" cy="337.0" r="0.9" fill="#d8bc90" fill-opacity="0.66"/><circle cx="572.3" cy="337.7" r="0.6" fill="#a88c68" fill-opacity="0.50"/><circle cx="537.6" cy="359.5" r="0.8" fill="#e0cca8" fill-opacity="0.62"/><circle cx="545.7" cy="330.5" r="0.7" fill="#b89868" fill-opacity="0.54"/><circle cx="542.0" cy="378.3" r="0.9" fill="#e0cca8" fill-opacity="0.53"/><circle cx="568.0" cy="312.0" r="0.7" fill="#d8bc90" fill-opacity="0.40"/><circle cx="544.8" cy="336.7" r="0.8" fill="#e0cca8" fill-opacity="0.41"/><circle cx="533.9" cy="374.6" r="0.7" fill="#e0cca8" fill-opacity="0.72"/><circle cx="582.3" cy="328.0" r="0.6" fill="#a88c68" fill-opacity="0.79"/><circle cx="559.4" cy="304.6" r="0.9" fill="#e0cca8" fill-opacity="0.47"/><circle cx="535.2" cy="288.5" r="0.8" fill="#d8bc90" fill-opacity="0.79"/><circle cx="579.8" cy="334.6" r="0.9" fill="#e0cca8" fill-opacity="0.56"/><circle cx="540.5" cy="348.1" r="0.8" fill="#e0cca8" fill-opacity="0.60"/><circle cx="560.8" cy="356.2" r="0.6" fill="#a88c68" fill-opacity="0.73"/><circle cx="554.2" cy="388.6" r="0.7" fill="#e0cca8" fill-opacity="0.79"/><circle cx="537.8" cy="272.8" r="0.6" fill="#a88c68" fill-opacity="0.54"/><circle cx="540.3" cy="361.1" r="0.9" fill="#d8bc90" fill-opacity="0.32"/><circle cx="561.7" cy="336.7" r="0.8" fill="#a88c68" fill-opacity="0.59"/><circle cx="537.2" cy="292.7" r="0.9" fill="#d8bc90" fill-opacity="0.63"/><circle cx="573.9" cy="339.6" r="0.8" fill="#c8a878" fill-opacity="0.69"/><circle cx="577.1" cy="331.1" r="0.6" fill="#c8a878" fill-opacity="0.56"/><circle cx="568.3" cy="316.7" r="0.8" fill="#b89868" fill-opacity="0.67"/><circle cx="564.3" cy="334.9" r="0.8" fill="#e0cca8" fill-opacity="0.32"/><circle cx="555.0" cy="327.7" r="0.7" fill="#d8bc90" fill-opacity="0.47"/><circle cx="539.9" cy="297.0" r="0.8" fill="#a88c68" fill-opacity="0.78"/><circle cx="556.7" cy="329.1" r="0.8" fill="#c8a878" fill-opacity="0.65"/><circle cx="531.2" cy="369.3" r="0.8" fill="#b89868" fill-opacity="0.60"/><circle cx="557.0" cy="373.3" r="0.7" fill="#e0cca8" fill-opacity="0.50"/><circle cx="548.5" cy="331.3" r="0.7" fill="#a88c68" fill-opacity="0.64"/><circle cx="543.6" cy="370.7" r="0.8" fill="#b89868" fill-opacity="0.55"/><circle cx="565.1" cy="331.1" r="0.8" fill="#d8bc90" fill-opacity="0.48"/><circle cx="545.4" cy="372.3" r="0.8" fill="#e0cca8" fill-opacity="0.55"/><circle cx="539.3" cy="386.6" r="0.8" fill="#d8bc90" fill-opacity="0.71"/><circle cx="531.7" cy="377.6" r="0.9" fill="#d8bc90" fill-opacity="0.75"/><circle cx="560.9" cy="356.1" r="0.6" fill="#b89868" fill-opacity="0.39"/><circle cx="544.2" cy="360.5" r="0.8" fill="#b89868" fill-opacity="0.38"/><circle cx="548.3" cy="336.5" r="0.7" fill="#d8bc90" fill-opacity="0.57"/><circle cx="540.4" cy="389.9" r="0.8" fill="#a88c68" fill-opacity="0.37"/><circle cx="547.7" cy="347.6" r="0.9" fill="#a88c68" fill-opacity="0.45"/><circle cx="571.2" cy="331.3" r="0.9" fill="#e0cca8" fill-opacity="0.49"/><circle cx="563.3" cy="363.0" r="0.7" fill="#d8bc90" fill-opacity="0.44"/><circle cx="539.7" cy="346.4" r="0.9" fill="#c8a878" fill-opacity="0.45"/><circle cx="560.5" cy="341.1" r="0.7" fill="#a88c68" fill-opacity="0.55"/><circle cx="546.0" cy="295.8" r="0.6" fill="#a88c68" fill-opacity="0.78"/><circle cx="552.2" cy="376.0" r="0.8" fill="#b89868" fill-opacity="0.53"/><circle cx="534.3" cy="287.7" r="0.6" fill="#d8bc90" fill-opacity="0.60"/><circle cx="539.0" cy="381.8" r="0.8" fill="#e0cca8" fill-opacity="0.36"/><circle cx="533.3" cy="350.3" r="0.6" fill="#b89868" fill-opacity="0.74"/><circle cx="573.4" cy="348.4" r="0.8" fill="#e0cca8" fill-opacity="0.43"/><circle cx="571.6" cy="331.8" r="0.7" fill="#a88c68" fill-opacity="0.64"/><circle cx="572.1" cy="338.5" r="0.8" fill="#c8a878" fill-opacity="0.44"/><circle cx="533.5" cy="269.9" r="0.8" fill="#c8a878" fill-opacity="0.70"/><circle cx="554.6" cy="340.4" r="0.9" fill="#a88c68" fill-opacity="0.51"/><circle cx="559.3" cy="352.6" r="0.8" fill="#c8a878" fill-opacity="0.79"/><circle cx="542.7" cy="313.7" r="0.6" fill="#e0cca8" fill-opacity="0.78"/><circle cx="549.7" cy="355.4" r="0.9" fill="#a88c68" fill-opacity="0.70"/><circle cx="549.4" cy="375.9" r="0.7" fill="#e0cca8" fill-opacity="0.57"/><circle cx="532.1" cy="370.4" r="0.7" fill="#c8a878" fill-opacity="0.76"/><circle cx="558.6" cy="356.1" r="0.6" fill="#c8a878" fill-opacity="0.61"/><circle cx="549.0" cy="273.0" r="0.6" fill="#b89868" fill-opacity="0.71"/><circle cx="531.7" cy="351.3" r="0.6" fill="#b89868" fill-opacity="0.79"/><circle cx="572.9" cy="311.1" r="0.9" fill="#a88c68" fill-opacity="0.65"/><circle cx="543.0" cy="301.1" r="0.7" fill="#b89868" fill-opacity="0.43"/><circle cx="544.2" cy="321.9" r="0.9" fill="#b89868" fill-opacity="0.50"/><circle cx="539.4" cy="300.4" r="0.8" fill="#b89868" fill-opacity="0.59"/><circle cx="536.5" cy="381.2" r="0.9" fill="#a88c68" fill-opacity="0.71"/><circle cx="575.4" cy="334.8" r="0.7" fill="#e0cca8" fill-opacity="0.75"/><circle cx="570.7" cy="330.7" r="0.9" fill="#e0cca8" fill-opacity="0.76"/><circle cx="544.9" cy="292.9" r="0.9" fill="#a88c68" fill-opacity="0.55"/><circle cx="537.5" cy="359.9" r="0.9" fill="#e0cca8" fill-opacity="0.73"/><circle cx="540.5" cy="360.3" r="0.6" fill="#c8a878" fill-opacity="0.36"/><circle cx="535.0" cy="272.3" r="0.8" fill="#c8a878" fill-opacity="0.34"/><circle cx="527.5" cy="371.7" r="0.9" fill="#d8bc90" fill-opacity="0.70"/><circle cx="560.9" cy="348.4" r="0.9" fill="#c8a878" fill-opacity="0.47"/><circle cx="556.8" cy="364.6" r="0.7" fill="#c8a878" fill-opacity="0.32"/><circle cx="558.2" cy="323.1" r="0.6" fill="#e0cca8" fill-opacity="0.55"/><circle cx="538.8" cy="303.2" r="0.9" fill="#c8a878" fill-opacity="0.43"/><circle cx="555.9" cy="376.1" r="0.8" fill="#e0cca8" fill-opacity="0.68"/><circle cx="568.6" cy="314.7" r="0.8" fill="#c8a878" fill-opacity="0.38"/><circle cx="548.3" cy="375.9" r="0.8" fill="#b89868" fill-opacity="0.69"/><circle cx="566.5" cy="368.8" r="0.9" fill="#d8bc90" fill-opacity="0.66"/><circle cx="562.0" cy="344.5" r="0.8" fill="#c8a878" fill-opacity="0.54"/><circle cx="552.2" cy="360.2" r="0.7" fill="#a88c68" fill-opacity="0.53"/><circle cx="534.1" cy="365.6" r="0.6" fill="#a88c68" fill-opacity="0.39"/><circle cx="552.1" cy="351.4" r="0.6" fill="#b89868" fill-opacity="0.58"/><circle cx="561.0" cy="371.4" r="0.9" fill="#a88c68" fill-opacity="0.58"/><circle cx="538.7" cy="290.4" r="0.7" fill="#e0cca8" fill-opacity="0.38"/><circle cx="554.5" cy="350.9" r="0.7" fill="#b89868" fill-opacity="0.76"/><circle cx="531.1" cy="353.8" r="0.7" fill="#c8a878" fill-opacity="0.38"/><circle cx="555.9" cy="315.8" r="0.6" fill="#d8bc90" fill-opacity="0.32"/><circle cx="530.3" cy="277.2" r="0.9" fill="#b89868" fill-opacity="0.44"/><circle cx="562.9" cy="313.5" r="0.8" fill="#d8bc90" fill-opacity="0.70"/><circle cx="550.2" cy="337.0" r="0.7" fill="#d8bc90" fill-opacity="0.56"/><circle cx="558.4" cy="358.9" r="0.8" fill="#b89868" fill-opacity="0.48"/><circle cx="550.1" cy="360.8" r="0.9" fill="#c8a878" fill-opacity="0.45"/><circle cx="584.7" cy="324.6" r="0.6" fill="#e0cca8" fill-opacity="0.60"/><circle cx="564.6" cy="357.5" r="0.8" fill="#d8bc90" fill-opacity="0.40"/><circle cx="564.9" cy="325.5" r="0.9" fill="#b89868" fill-opacity="0.47"/><circle cx="532.6" cy="280.7" r="0.7" fill="#d8bc90" fill-opacity="0.61"/><circle cx="569.9" cy="328.4" r="0.8" fill="#b89868" fill-opacity="0.55"/><circle cx="548.1" cy="372.8" r="0.9" fill="#b89868" fill-opacity="0.39"/><circle cx="539.5" cy="319.8" r="0.7" fill="#e0cca8" fill-opacity="0.71"/><circle cx="559.6" cy="343.5" r="0.6" fill="#e0cca8" fill-opacity="0.56"/><circle cx="558.7" cy="362.1" r="0.6" fill="#b89868" fill-opacity="0.70"/><circle cx="570.7" cy="339.5" r="0.9" fill="#a88c68" fill-opacity="0.52"/><circle cx="535.7" cy="292.4" r="0.7" fill="#a88c68" fill-opacity="0.72"/><circle cx="561.3" cy="330.1" r="0.8" fill="#a88c68" fill-opacity="0.33"/><circle cx="543.1" cy="341.2" r="0.9" fill="#b89868" fill-opacity="0.60"/><circle cx="548.1" cy="369.9" r="0.8" fill="#b89868" fill-opacity="0.73"/><circle cx="556.7" cy="330.4" r="0.6" fill="#a88c68" fill-opacity="0.45"/><circle cx="536.4" cy="271.7" r="0.8" fill="#b89868" fill-opacity="0.43"/><circle cx="553.9" cy="333.6" r="0.9" fill="#c8a878" fill-opacity="0.58"/><circle cx="538.8" cy="372.2" r="0.6" fill="#e0cca8" fill-opacity="0.65"/><circle cx="547.5" cy="376.6" r="0.7" fill="#c8a878" fill-opacity="0.64"/><circle cx="572.7" cy="342.2" r="0.8" fill="#d8bc90" fill-opacity="0.39"/><circle cx="579.2" cy="326.4" r="0.7" fill="#c8a878" fill-opacity="0.31"/><circle cx="539.3" cy="304.6" r="0.9" fill="#c8a878" fill-opacity="0.38"/><circle cx="562.9" cy="330.7" r="0.9" fill="#a88c68" fill-opacity="0.60"/><circle cx="545.6" cy="352.0" r="0.9" fill="#e0cca8" fill-opacity="0.45"/><circle cx="574.0" cy="319.9" r="0.7" fill="#d8bc90" fill-opacity="0.76"/><circle cx="572.2" cy="344.3" r="0.9" fill="#a88c68" fill-opacity="0.51"/><circle cx="574.1" cy="327.8" r="0.9" fill="#c8a878" fill-opacity="0.44"/><circle cx="544.2" cy="299.8" r="0.8" fill="#a88c68" fill-opacity="0.32"/><circle cx="550.4" cy="326.5" r="0.6" fill="#a88c68" fill-opacity="0.36"/><circle cx="543.8" cy="357.8" r="0.7" fill="#d8bc90" fill-opacity="0.39"/><circle cx="545.4" cy="390.2" r="0.9" fill="#b89868" fill-opacity="0.62"/><circle cx="532.0" cy="383.0" r="0.7" fill="#a88c68" fill-opacity="0.74"/><circle cx="546.7" cy="334.7" r="0.9" fill="#a88c68" fill-opacity="0.57"/><circle cx="551.3" cy="375.6" r="0.8" fill="#a88c68" fill-opacity="0.60"/><circle cx="561.7" cy="331.4" r="0.7" fill="#e0cca8" fill-opacity="0.64"/><circle cx="530.0" cy="376.2" r="0.6" fill="#c8a878" fill-opacity="0.67"/><circle cx="568.3" cy="317.4" r="0.7" fill="#a88c68" fill-opacity="0.46"/><circle cx="558.9" cy="361.2" r="0.7" fill="#d8bc90" fill-opacity="0.69"/><circle cx="569.1" cy="312.0" r="0.7" fill="#b89868" fill-opacity="0.78"/><circle cx="543.5" cy="335.2" r="0.7" fill="#e0cca8" fill-opacity="0.78"/><circle cx="539.2" cy="307.5" r="0.6" fill="#c8a878" fill-opacity="0.71"/><circle cx="556.2" cy="360.2" r="0.6" fill="#e0cca8" fill-opacity="0.46"/><circle cx="555.2" cy="344.1" r="0.6" fill="#b89868" fill-opacity="0.74"/><circle cx="563.8" cy="326.8" r="0.8" fill="#e0cca8" fill-opacity="0.66"/><circle cx="547.6" cy="352.5" r="0.7" fill="#a88c68" fill-opacity="0.38"/><circle cx="540.9" cy="336.7" r="0.8" fill="#c8a878" fill-opacity="0.78"/><circle cx="557.6" cy="362.5" r="0.6" fill="#a88c68" fill-opacity="0.71"/><circle cx="574.2" cy="325.7" r="0.8" fill="#b89868" fill-opacity="0.76"/><circle cx="570.5" cy="347.8" r="0.8" fill="#e0cca8" fill-opacity="0.55"/><circle cx="539.3" cy="345.5" r="0.7" fill="#a88c68" fill-opacity="0.57"/><circle cx="537.2" cy="291.7" r="0.8" fill="#d8bc90" fill-opacity="0.48"/><circle cx="531.1" cy="274.6" r="0.7" fill="#e0cca8" fill-opacity="0.41"/><circle cx="554.6" cy="358.0" r="0.9" fill="#a88c68" fill-opacity="0.56"/><circle cx="553.8" cy="351.6" r="0.6" fill="#c8a878" fill-opacity="0.59"/><circle cx="537.0" cy="288.2" r="0.7" fill="#b89868" fill-opacity="0.71"/><circle cx="544.3" cy="261.5" r="0.6" fill="#e0cca8" fill-opacity="0.36"/><circle cx="561.9" cy="319.0" r="0.9" fill="#e0cca8" fill-opacity="0.36"/><circle cx="550.4" cy="328.1" r="0.7" fill="#e0cca8" fill-opacity="0.62"/><circle cx="574.9" cy="321.4" r="0.8" fill="#c8a878" fill-opacity="0.69"/><circle cx="561.5" cy="317.8" r="0.9" fill="#c8a878" fill-opacity="0.37"/><circle cx="549.5" cy="270.0" r="0.9" fill="#a88c68" fill-opacity="0.76"/><circle cx="545.9" cy="363.1" r="0.8" fill="#c8a878" fill-opacity="0.63"/><circle cx="260.0" cy="203.7" r="0.9" fill="#c8a878" fill-opacity="0.71"/><circle cx="258.5" cy="196.8" r="0.7" fill="#e0cca8" fill-opacity="0.45"/><circle cx="243.8" cy="224.5" r="0.9" fill="#d8bc90" fill-opacity="0.65"/><circle cx="247.4" cy="192.7" r="0.8" fill="#d8bc90" fill-opacity="0.72"/><circle cx="220.8" cy="204.9" r="0.9" fill="#a88c68" fill-opacity="0.56"/><circle cx="257.2" cy="170.4" r="0.6" fill="#e0cca8" fill-opacity="0.38"/><circle cx="277.5" cy="181.7" r="0.7" fill="#e0cca8" fill-opacity="0.47"/><circle cx="242.3" cy="203.1" r="0.9" fill="#e0cca8" fill-opacity="0.60"/><circle cx="297.3" cy="176.3" r="0.9" fill="#e0cca8" fill-opacity="0.48"/><circle cx="269.4" cy="204.4" r="0.6" fill="#b89868" fill-opacity="0.49"/><circle cx="277.2" cy="189.8" r="0.6" fill="#c8a878" fill-opacity="0.65"/><circle cx="297.8" cy="193.6" r="0.8" fill="#b89868" fill-opacity="0.44"/><circle cx="247.4" cy="197.9" r="0.8" fill="#b89868" fill-opacity="0.53"/><circle cx="274.0" cy="182.5" r="0.7" fill="#a88c68" fill-opacity="0.37"/><circle cx="251.0" cy="203.8" r="0.9" fill="#b89868" fill-opacity="0.34"/><circle cx="256.4" cy="212.3" r="0.6" fill="#c8a878" fill-opacity="0.50"/><circle cx="249.7" cy="210.3" r="0.7" fill="#d8bc90" fill-opacity="0.58"/><circle cx="245.5" cy="182.5" r="0.9" fill="#a88c68" fill-opacity="0.72"/><circle cx="251.8" cy="165.6" r="0.6" fill="#c8a878" fill-opacity="0.77"/><circle cx="262.8" cy="213.7" r="0.6" fill="#e0cca8" fill-opacity="0.49"/><circle cx="275.7" cy="192.4" r="0.7" fill="#a88c68" fill-opacity="0.62"/><circle cx="267.6" cy="164.9" r="0.8" fill="#c8a878" fill-opacity="0.52"/><circle cx="227.9" cy="228.6" r="0.6" fill="#a88c68" fill-opacity="0.72"/><circle cx="242.0" cy="203.5" r="0.7" fill="#a88c68" fill-opacity="0.53"/><circle cx="240.9" cy="191.1" r="0.8" fill="#b89868" fill-opacity="0.75"/><circle cx="279.1" cy="177.7" r="0.6" fill="#d8bc90" fill-opacity="0.80"/><circle cx="284.2" cy="176.7" r="0.9" fill="#d8bc90" fill-opacity="0.60"/><circle cx="277.1" cy="178.0" r="0.9" fill="#a88c68" fill-opacity="0.55"/><circle cx="228.7" cy="187.5" r="0.9" fill="#b89868" fill-opacity="0.75"/><circle cx="266.8" cy="200.4" r="0.9" fill="#b89868" fill-opacity="0.45"/><circle cx="251.2" cy="228.7" r="0.7" fill="#c8a878" fill-opacity="0.46"/><circle cx="245.9" cy="198.2" r="0.7" fill="#e0cca8" fill-opacity="0.68"/><circle cx="249.3" cy="225.5" r="0.9" fill="#b89868" fill-opacity="0.67"/><circle cx="242.2" cy="206.4" r="0.6" fill="#e0cca8" fill-opacity="0.69"/><circle cx="257.5" cy="176.5" r="0.7" fill="#c8a878" fill-opacity="0.68"/><circle cx="235.7" cy="184.7" r="0.7" fill="#b89868" fill-opacity="0.77"/><circle cx="285.0" cy="194.8" r="0.7" fill="#e0cca8" fill-opacity="0.47"/><circle cx="226.7" cy="198.9" r="0.6" fill="#b89868" fill-opacity="0.46"/><circle cx="247.2" cy="202.3" r="0.7" fill="#a88c68" fill-opacity="0.31"/><circle cx="239.5" cy="183.6" r="0.9" fill="#b89868" fill-opacity="0.36"/><circle cx="263.2" cy="193.5" r="0.8" fill="#c8a878" fill-opacity="0.66"/><circle cx="288.1" cy="176.7" r="0.7" fill="#c8a878" fill-opacity="0.45"/><circle cx="290.6" cy="188.4" r="0.8" fill="#c8a878" fill-opacity="0.77"/><circle cx="236.1" cy="201.5" r="0.8" fill="#b89868" fill-opacity="0.33"/><circle cx="258.4" cy="174.9" r="0.6" fill="#a88c68" fill-opacity="0.77"/><circle cx="231.5" cy="212.4" r="0.8" fill="#c8a878" fill-opacity="0.36"/><circle cx="264.2" cy="198.9" r="0.6" fill="#e0cca8" fill-opacity="0.66"/><circle cx="264.2" cy="184.7" r="0.9" fill="#c8a878" fill-opacity="0.72"/><circle cx="231.7" cy="197.3" r="0.7" fill="#b89868" fill-opacity="0.52"/><circle cx="233.0" cy="217.4" r="0.6" fill="#b89868" fill-opacity="0.74"/><circle cx="224.5" cy="209.9" r="0.8" fill="#e0cca8" fill-opacity="0.57"/><circle cx="294.4" cy="171.2" r="0.8" fill="#a88c68" fill-opacity="0.31"/><circle cx="256.8" cy="200.9" r="0.9" fill="#b89868" fill-opacity="0.33"/><circle cx="294.7" cy="193.7" r="0.9" fill="#d8bc90" fill-opacity="0.59"/><circle cx="279.7" cy="198.7" r="0.9" fill="#c8a878" fill-opacity="0.64"/><circle cx="235.5" cy="229.1" r="0.9" fill="#b89868" fill-opacity="0.77"/><circle cx="297.4" cy="189.3" r="0.8" fill="#a88c68" fill-opacity="0.64"/><circle cx="273.0" cy="163.8" r="0.8" fill="#b89868" fill-opacity="0.31"/><circle cx="226.7" cy="208.2" r="0.7" fill="#b89868" fill-opacity="0.41"/><circle cx="282.7" cy="199.2" r="0.9" fill="#d8bc90" fill-opacity="0.41"/><circle cx="299.1" cy="189.9" r="0.6" fill="#b89868" fill-opacity="0.39"/><circle cx="277.4" cy="175.9" r="0.8" fill="#e0cca8" fill-opacity="0.65"/><circle cx="235.6" cy="200.9" r="0.7" fill="#d8bc90" fill-opacity="0.54"/><circle cx="243.2" cy="227.0" r="0.7" fill="#a88c68" fill-opacity="0.58"/><circle cx="272.8" cy="172.6" r="0.8" fill="#c8a878" fill-opacity="0.70"/><circle cx="253.3" cy="221.7" r="0.6" fill="#e0cca8" fill-opacity="0.52"/><circle cx="262.0" cy="204.1" r="0.6" fill="#c8a878" fill-opacity="0.61"/><circle cx="271.1" cy="171.2" r="0.7" fill="#b89868" fill-opacity="0.79"/><circle cx="228.7" cy="217.4" r="0.6" fill="#b89868" fill-opacity="0.41"/><circle cx="284.9" cy="173.1" r="0.9" fill="#e0cca8" fill-opacity="0.76"/><circle cx="290.2" cy="194.8" r="0.9" fill="#e0cca8" fill-opacity="0.40"/><circle cx="275.5" cy="174.8" r="0.9" fill="#d8bc90" fill-opacity="0.55"/><circle cx="247.9" cy="178.4" r="0.6" fill="#a88c68" fill-opacity="0.33"/><circle cx="258.5" cy="171.4" r="0.6" fill="#c8a878" fill-opacity="0.50"/><circle cx="231.2" cy="210.1" r="0.6" fill="#a88c68" fill-opacity="0.72"/><circle cx="235.1" cy="197.4" r="0.9" fill="#e0cca8" fill-opacity="0.38"/><circle cx="239.0" cy="189.5" r="0.9" fill="#d8bc90" fill-opacity="0.49"/><circle cx="258.9" cy="203.0" r="0.7" fill="#b89868" fill-opacity="0.37"/><circle cx="224.4" cy="227.2" r="0.8" fill="#e0cca8" fill-opacity="0.80"/><circle cx="260.8" cy="172.1" r="0.8" fill="#d8bc90" fill-opacity="0.40"/><circle cx="283.4" cy="181.1" r="0.6" fill="#c8a878" fill-opacity="0.57"/><circle cx="245.0" cy="200.5" r="0.9" fill="#e0cca8" fill-opacity="0.37"/><circle cx="269.4" cy="171.9" r="0.7" fill="#b89868" fill-opacity="0.46"/><circle cx="229.3" cy="231.0" r="0.6" fill="#e0cca8" fill-opacity="0.47"/><circle cx="267.5" cy="210.5" r="0.8" fill="#a88c68" fill-opacity="0.46"/><circle cx="250.2" cy="215.4" r="0.6" fill="#d8bc90" fill-opacity="0.56"/><circle cx="234.2" cy="198.4" r="0.8" fill="#a88c68" fill-opacity="0.35"/><circle cx="248.3" cy="210.3" r="0.9" fill="#e0cca8" fill-opacity="0.72"/><circle cx="273.1" cy="198.3" r="0.9" fill="#a88c68" fill-opacity="0.69"/><circle cx="223.7" cy="212.9" r="0.9" fill="#e0cca8" fill-opacity="0.60"/><circle cx="282.3" cy="199.4" r="0.8" fill="#d8bc90" fill-opacity="0.64"/><circle cx="278.5" cy="200.5" r="0.6" fill="#a88c68" fill-opacity="0.65"/><circle cx="239.2" cy="213.8" r="0.7" fill="#c8a878" fill-opacity="0.44"/><circle cx="299.6" cy="187.7" r="0.6" fill="#b89868" fill-opacity="0.60"/><circle cx="282.6" cy="193.5" r="0.9" fill="#d8bc90" fill-opacity="0.61"/><circle cx="289.3" cy="194.9" r="0.8" fill="#e0cca8" fill-opacity="0.48"/><circle cx="263.8" cy="178.3" r="0.8" fill="#b89868" fill-opacity="0.71"/><circle cx="219.4" cy="205.3" r="0.9" fill="#c8a878" fill-opacity="0.41"/><circle cx="276.9" cy="172.6" r="0.8" fill="#c8a878" fill-opacity="0.73"/><circle cx="233.3" cy="229.7" r="0.7" fill="#e0cca8" fill-opacity="0.48"/><circle cx="253.5" cy="211.0" r="0.9" fill="#a88c68" fill-opacity="0.67"/><circle cx="282.7" cy="188.7" r="0.7" fill="#e0cca8" fill-opacity="0.51"/><circle cx="294.3" cy="170.8" r="0.8" fill="#c8a878" fill-opacity="0.43"/><circle cx="267.3" cy="197.0" r="0.6" fill="#e0cca8" fill-opacity="0.52"/><circle cx="278.8" cy="192.9" r="0.7" fill="#a88c68" fill-opacity="0.46"/><circle cx="300.8" cy="177.6" r="0.8" fill="#e0cca8" fill-opacity="0.47"/><circle cx="255.1" cy="209.3" r="0.9" fill="#e0cca8" fill-opacity="0.43"/><circle cx="242.3" cy="227.5" r="0.8" fill="#c8a878" fill-opacity="0.63"/><circle cx="252.0" cy="194.0" r="0.8" fill="#e0cca8" fill-opacity="0.44"/><circle cx="248.5" cy="204.9" r="0.6" fill="#c8a878" fill-opacity="0.80"/><circle cx="285.0" cy="203.1" r="0.7" fill="#e0cca8" fill-opacity="0.40"/><circle cx="264.7" cy="184.8" r="0.8" fill="#b89868" fill-opacity="0.38"/><circle cx="249.7" cy="178.5" r="0.6" fill="#d8bc90" fill-opacity="0.57"/><circle cx="262.8" cy="207.1" r="0.7" fill="#d8bc90" fill-opacity="0.62"/><circle cx="296.3" cy="189.6" r="0.6" fill="#b89868" fill-opacity="0.66"/><circle cx="281.6" cy="197.5" r="0.7" fill="#b89868" fill-opacity="0.55"/><circle cx="229.2" cy="185.6" r="0.9" fill="#b89868" fill-opacity="0.68"/><circle cx="260.8" cy="225.0" r="0.6" fill="#e0cca8" fill-opacity="0.70"/><circle cx="245.5" cy="217.5" r="0.9" fill="#a88c68" fill-opacity="0.75"/><circle cx="239.4" cy="212.7" r="0.7" fill="#b89868" fill-opacity="0.51"/><circle cx="254.1" cy="168.9" r="0.7" fill="#a88c68" fill-opacity="0.65"/><circle cx="279.6" cy="201.4" r="0.6" fill="#b89868" fill-opacity="0.58"/><circle cx="232.0" cy="221.2" r="0.9" fill="#d8bc90" fill-opacity="0.31"/><circle cx="257.1" cy="206.1" r="0.7" fill="#d8bc90" fill-opacity="0.38"/><circle cx="229.9" cy="210.2" r="0.7" fill="#b89868" fill-opacity="0.39"/><circle cx="259.7" cy="190.1" r="0.6" fill="#a88c68" fill-opacity="0.69"/><circle cx="273.3" cy="171.6" r="0.6" fill="#e0cca8" fill-opacity="0.49"/><circle cx="234.7" cy="188.4" r="0.9" fill="#e0cca8" fill-opacity="0.54"/><circle cx="267.4" cy="213.3" r="0.9" fill="#a88c68" fill-opacity="0.48"/><circle cx="287.5" cy="201.5" r="0.8" fill="#a88c68" fill-opacity="0.67"/><circle cx="286.1" cy="199.5" r="0.7" fill="#e0cca8" fill-opacity="0.63"/><circle cx="220.1" cy="211.5" r="0.9" fill="#c8a878" fill-opacity="0.47"/><circle cx="238.3" cy="206.8" r="0.7" fill="#d8bc90" fill-opacity="0.78"/><circle cx="254.8" cy="189.0" r="0.8" fill="#e0cca8" fill-opacity="0.73"/><circle cx="259.7" cy="190.5" r="0.7" fill="#a88c68" fill-opacity="0.79"/><circle cx="274.9" cy="178.2" r="0.6" fill="#b89868" fill-opacity="0.44"/><circle cx="300.5" cy="191.4" r="0.7" fill="#b89868" fill-opacity="0.66"/><circle cx="250.5" cy="204.1" r="0.9" fill="#a88c68" fill-opacity="0.42"/><circle cx="273.2" cy="173.0" r="0.8" fill="#c8a878" fill-opacity="0.66"/><circle cx="274.3" cy="184.8" r="0.6" fill="#e0cca8" fill-opacity="0.53"/><circle cx="260.3" cy="203.5" r="0.8" fill="#c8a878" fill-opacity="0.57"/><circle cx="237.0" cy="212.5" r="0.6" fill="#a88c68" fill-opacity="0.45"/><circle cx="296.3" cy="195.8" r="0.8" fill="#c8a878" fill-opacity="0.51"/><circle cx="255.9" cy="168.2" r="0.8" fill="#a88c68" fill-opacity="0.40"/><circle cx="243.7" cy="199.3" r="0.7" fill="#c8a878" fill-opacity="0.55"/><circle cx="242.6" cy="175.1" r="0.7" fill="#c8a878" fill-opacity="0.78"/><circle cx="219.0" cy="228.2" r="0.6" fill="#c8a878" fill-opacity="0.40"/><circle cx="221.3" cy="205.4" r="0.8" fill="#b89868" fill-opacity="0.38"/><circle cx="271.5" cy="193.9" r="0.8" fill="#d8bc90" fill-opacity="0.62"/><circle cx="246.4" cy="202.0" r="0.7" fill="#d8bc90" fill-opacity="0.35"/><circle cx="271.0" cy="169.1" r="0.6" fill="#b89868" fill-opacity="0.69"/><circle cx="227.3" cy="199.6" r="0.8" fill="#b89868" fill-opacity="0.66"/><circle cx="276.5" cy="176.2" r="0.9" fill="#e0cca8" fill-opacity="0.66"/><circle cx="284.7" cy="173.4" r="0.7" fill="#c8a878" fill-opacity="0.53"/><circle cx="293.3" cy="176.9" r="0.6" fill="#a88c68" fill-opacity="0.31"/><circle cx="255.3" cy="198.2" r="0.8" fill="#a88c68" fill-opacity="0.40"/><circle cx="296.9" cy="189.0" r="0.7" fill="#c8a878" fill-opacity="0.56"/><circle cx="228.1" cy="211.2" r="0.6" fill="#d8bc90" fill-opacity="0.54"/><circle cx="234.3" cy="214.4" r="0.9" fill="#a88c68" fill-opacity="0.46"/><circle cx="267.6" cy="168.8" r="0.8" fill="#c8a878" fill-opacity="0.38"/><circle cx="265.3" cy="188.4" r="0.6" fill="#e0cca8" fill-opacity="0.64"/><circle cx="264.2" cy="197.6" r="0.6" fill="#b89868" fill-opacity="0.51"/><circle cx="228.2" cy="201.6" r="0.7" fill="#d8bc90" fill-opacity="0.45"/><circle cx="287.9" cy="183.7" r="0.6" fill="#a88c68" fill-opacity="0.46"/><circle cx="242.4" cy="229.7" r="0.7" fill="#c8a878" fill-opacity="0.39"/><circle cx="239.3" cy="195.8" r="0.9" fill="#d8bc90" fill-opacity="0.52"/><circle cx="301.0" cy="177.9" r="0.9" fill="#c8a878" fill-opacity="0.50"/><circle cx="276.3" cy="185.3" r="0.9" fill="#a88c68" fill-opacity="0.63"/><circle cx="251.0" cy="221.6" r="0.9" fill="#e0cca8" fill-opacity="0.69"/><circle cx="272.2" cy="174.7" r="0.7" fill="#a88c68" fill-opacity="0.50"/><circle cx="283.6" cy="197.9" r="0.8" fill="#c8a878" fill-opacity="0.74"/><circle cx="245.2" cy="198.0" r="0.8" fill="#a88c68" fill-opacity="0.66"/><circle cx="262.7" cy="215.7" r="0.7" fill="#a88c68" fill-opacity="0.55"/><circle cx="249.9" cy="178.3" r="0.6" fill="#c8a878" fill-opacity="0.56"/><circle cx="262.9" cy="199.7" r="0.8" fill="#d8bc90" fill-opacity="0.42"/><circle cx="232.9" cy="218.9" r="0.6" fill="#e0cca8" fill-opacity="0.75"/><circle cx="291.1" cy="197.6" r="0.9" fill="#e0cca8" fill-opacity="0.79"/><circle cx="283.3" cy="191.7" r="0.8" fill="#b89868" fill-opacity="0.39"/><circle cx="282.8" cy="200.1" r="0.8" fill="#a88c68" fill-opacity="0.79"/><circle cx="274.9" cy="193.4" r="0.6" fill="#d8bc90" fill-opacity="0.60"/><circle cx="269.6" cy="208.2" r="0.9" fill="#e0cca8" fill-opacity="0.58"/><circle cx="299.1" cy="181.6" r="0.6" fill="#b89868" fill-opacity="0.35"/><circle cx="276.2" cy="183.9" r="0.9" fill="#b89868" fill-opacity="0.45"/><circle cx="218.0" cy="226.2" r="0.8" fill="#b89868" fill-opacity="0.59"/><circle cx="244.0" cy="204.4" r="0.7" fill="#c8a878" fill-opacity="0.37"/><circle cx="273.2" cy="191.0" r="0.6" fill="#a88c68" fill-opacity="0.48"/><circle cx="251.5" cy="211.2" r="0.6" fill="#d8bc90" fill-opacity="0.56"/><circle cx="273.3" cy="181.8" r="0.6" fill="#b89868" fill-opacity="0.45"/><circle cx="234.1" cy="217.1" r="0.6" fill="#d8bc90" fill-opacity="0.40"/><circle cx="282.2" cy="180.5" r="0.9" fill="#c8a878" fill-opacity="0.69"/><circle cx="232.4" cy="183.7" r="0.7" fill="#d8bc90" fill-opacity="0.60"/><circle cx="241.3" cy="219.1" r="0.8" fill="#c8a878" fill-opacity="0.64"/><circle cx="252.7" cy="220.0" r="0.6" fill="#c8a878" fill-opacity="0.43"/><circle cx="291.4" cy="198.0" r="0.6" fill="#c8a878" fill-opacity="0.52"/><circle cx="251.2" cy="206.9" r="0.7" fill="#e0cca8" fill-opacity="0.38"/><circle cx="226.2" cy="212.2" r="0.8" fill="#c8a878" fill-opacity="0.48"/><circle cx="277.6" cy="180.2" r="0.8" fill="#a88c68" fill-opacity="0.46"/><circle cx="231.1" cy="226.0" r="0.6" fill="#b89868" fill-opacity="0.62"/><circle cx="282.4" cy="197.9" r="0.9" fill="#c8a878" fill-opacity="0.61"/><circle cx="227.1" cy="218.5" r="0.8" fill="#a88c68" fill-opacity="0.75"/><circle cx="251.6" cy="188.8" r="0.9" fill="#c8a878" fill-opacity="0.73"/><circle cx="256.1" cy="176.0" r="0.9" fill="#a88c68" fill-opacity="0.44"/><circle cx="233.1" cy="175.7" r="0.6" fill="#a88c68" fill-opacity="0.65"/><circle cx="255.7" cy="198.5" r="0.6" fill="#c8a878" fill-opacity="0.41"/><circle cx="297.5" cy="183.8" r="0.7" fill="#e0cca8" fill-opacity="0.38"/><circle cx="293.8" cy="178.3" r="0.7" fill="#a88c68" fill-opacity="0.68"/><circle cx="247.5" cy="184.0" r="0.9" fill="#a88c68" fill-opacity="0.33"/><circle cx="265.2" cy="184.8" r="0.6" fill="#b89868" fill-opacity="0.67"/><circle cx="376.7" cy="153.5" r="0.7" fill="#b89868" fill-opacity="0.53"/><circle cx="369.6" cy="146.8" r="0.7" fill="#a88c68" fill-opacity="0.65"/><circle cx="436.3" cy="147.0" r="0.6" fill="#c8a878" fill-opacity="0.59"/><circle cx="436.3" cy="163.9" r="0.7" fill="#b89868" fill-opacity="0.38"/><circle cx="378.5" cy="139.9" r="0.7" fill="#d8bc90" fill-opacity="0.47"/><circle cx="425.8" cy="144.7" r="0.7" fill="#b89868" fill-opacity="0.44"/><circle cx="399.4" cy="125.7" r="0.7" fill="#b89868" fill-opacity="0.49"/><circle cx="423.6" cy="157.1" r="0.8" fill="#c8a878" fill-opacity="0.39"/><circle cx="371.3" cy="157.9" r="0.9" fill="#d8bc90" fill-opacity="0.31"/><circle cx="448.8" cy="145.3" r="0.6" fill="#d8bc90" fill-opacity="0.73"/><circle cx="411.7" cy="147.0" r="0.8" fill="#e0cca8" fill-opacity="0.43"/><circle cx="395.0" cy="122.2" r="0.7" fill="#c8a878" fill-opacity="0.42"/><circle cx="359.7" cy="157.1" r="0.9" fill="#b89868" fill-opacity="0.65"/><circle cx="415.9" cy="160.9" r="0.6" fill="#b89868" fill-opacity="0.43"/><circle cx="418.8" cy="147.0" r="0.6" fill="#e0cca8" fill-opacity="0.47"/><circle cx="414.8" cy="137.3" r="0.9" fill="#e0cca8" fill-opacity="0.60"/><circle cx="433.4" cy="150.9" r="0.7" fill="#c8a878" fill-opacity="0.75"/><circle cx="385.8" cy="137.2" r="0.7" fill="#b89868" fill-opacity="0.52"/><circle cx="366.9" cy="149.5" r="0.8" fill="#d8bc90" fill-opacity="0.77"/><circle cx="361.0" cy="156.1" r="0.8" fill="#c8a878" fill-opacity="0.55"/><circle cx="381.7" cy="137.3" r="0.6" fill="#a88c68" fill-opacity="0.39"/><circle cx="434.3" cy="166.1" r="0.9" fill="#e0cca8" fill-opacity="0.47"/><circle cx="444.3" cy="163.7" r="0.6" fill="#a88c68" fill-opacity="0.69"/><circle cx="445.9" cy="144.5" r="0.7" fill="#b89868" fill-opacity="0.38"/><circle cx="405.7" cy="132.6" r="0.7" fill="#a88c68" fill-opacity="0.65"/><circle cx="447.3" cy="145.8" r="0.8" fill="#a88c68" fill-opacity="0.36"/><circle cx="374.7" cy="155.6" r="0.9" fill="#b89868" fill-opacity="0.32"/><circle cx="409.5" cy="134.0" r="0.8" fill="#e0cca8" fill-opacity="0.78"/><circle cx="367.2" cy="129.9" r="0.8" fill="#e0cca8" fill-opacity="0.65"/><circle cx="421.8" cy="139.2" r="0.9" fill="#c8a878" fill-opacity="0.61"/><circle cx="361.2" cy="145.5" r="0.8" fill="#e0cca8" fill-opacity="0.45"/><circle cx="427.2" cy="149.0" r="0.7" fill="#d8bc90" fill-opacity="0.78"/><circle cx="393.5" cy="146.7" r="0.9" fill="#a88c68" fill-opacity="0.64"/><circle cx="371.3" cy="131.1" r="0.9" fill="#a88c68" fill-opacity="0.78"/><circle cx="415.8" cy="145.1" r="0.9" fill="#a88c68" fill-opacity="0.53"/><circle cx="393.5" cy="145.5" r="0.7" fill="#d8bc90" fill-opacity="0.59"/><circle cx="432.1" cy="135.0" r="0.8" fill="#e0cca8" fill-opacity="0.57"/><circle cx="418.4" cy="203.4" r="0.8" fill="#a88c68" fill-opacity="0.39"/><circle cx="414.0" cy="209.9" r="0.9" fill="#c8a878" fill-opacity="0.31"/><circle cx="414.2" cy="208.5" r="0.8" fill="#a88c68" fill-opacity="0.41"/><circle cx="416.5" cy="215.2" r="0.9" fill="#e0cca8" fill-opacity="0.37"/><circle cx="404.0" cy="199.0" r="0.7" fill="#c8a878" fill-opacity="0.57"/><circle cx="416.0" cy="219.0" r="0.8" fill="#d8bc90" fill-opacity="0.76"/><circle cx="410.4" cy="220.0" r="0.8" fill="#e0cca8" fill-opacity="0.58"/><circle cx="422.4" cy="198.9" r="0.9" fill="#e0cca8" fill-opacity="0.77"/><circle cx="427.2" cy="209.4" r="0.7" fill="#e0cca8" fill-opacity="0.68"/><circle cx="415.0" cy="213.5" r="0.6" fill="#e0cca8" fill-opacity="0.45"/><circle cx="408.8" cy="198.4" r="0.9" fill="#c8a878" fill-opacity="0.62"/><circle cx="407.5" cy="217.2" r="0.6" fill="#a88c68" fill-opacity="0.52"/><circle cx="421.0" cy="210.2" r="0.6" fill="#e0cca8" fill-opacity="0.51"/><circle cx="407.1" cy="218.9" r="0.9" fill="#a88c68" fill-opacity="0.45"/><circle cx="404.2" cy="207.7" r="0.7" fill="#a88c68" fill-opacity="0.54"/><circle cx="422.3" cy="214.0" r="0.7" fill="#c8a878" fill-opacity="0.34"/><circle cx="411.5" cy="228.8" r="0.6" fill="#c8a878" fill-opacity="0.33"/><circle cx="419.9" cy="213.0" r="0.8" fill="#a88c68" fill-opacity="0.59"/><circle cx="412.7" cy="212.6" r="0.6" fill="#e0cca8" fill-opacity="0.45"/><circle cx="420.0" cy="208.6" r="0.7" fill="#c8a878" fill-opacity="0.63"/><circle cx="413.2" cy="213.9" r="0.9" fill="#b89868" fill-opacity="0.65"/><circle cx="417.5" cy="195.5" r="0.8" fill="#d8bc90" fill-opacity="0.50"/><circle cx="406.1" cy="204.9" r="0.7" fill="#d8bc90" fill-opacity="0.47"/><circle cx="421.1" cy="208.4" r="0.6" fill="#c8a878" fill-opacity="0.53"/><circle cx="391.2" cy="196.7" r="0.7" fill="#c8a878" fill-opacity="0.33"/><circle cx="425.3" cy="212.8" r="0.8" fill="#d8bc90" fill-opacity="0.60"/><circle cx="422.0" cy="223.9" r="0.8" fill="#e0cca8" fill-opacity="0.65"/><circle cx="407.2" cy="218.7" r="0.9" fill="#c8a878" fill-opacity="0.65"/><circle cx="435.0" cy="222.2" r="0.6" fill="#b89868" fill-opacity="0.36"/><circle cx="417.5" cy="213.7" r="0.9" fill="#e0cca8" fill-opacity="0.66"/><circle cx="421.0" cy="205.4" r="0.7" fill="#c8a878" fill-opacity="0.31"/><circle cx="438.3" cy="217.6" r="0.7" fill="#c8a878" fill-opacity="0.65"/><circle cx="406.9" cy="217.4" r="0.6" fill="#d8bc90" fill-opacity="0.53"/><circle cx="418.7" cy="207.0" r="0.6" fill="#a88c68" fill-opacity="0.59"/><circle cx="401.8" cy="223.7" r="0.8" fill="#d8bc90" fill-opacity="0.73"/><circle cx="410.5" cy="215.9" r="0.9" fill="#b89868" fill-opacity="0.80"/><circle cx="475.5" cy="251.4" r="0.8" fill="#b89868" fill-opacity="0.51"/><circle cx="468.0" cy="243.3" r="0.8" fill="#c8a878" fill-opacity="0.49"/><circle cx="472.2" cy="243.6" r="0.6" fill="#d8bc90" fill-opacity="0.55"/><circle cx="499.1" cy="184.8" r="0.8" fill="#e0cca8" fill-opacity="0.74"/><circle cx="501.0" cy="158.7" r="0.8" fill="#e0cca8" fill-opacity="0.53"/><circle cx="493.8" cy="184.8" r="0.8" fill="#a88c68" fill-opacity="0.50"/><circle cx="504.1" cy="154.7" r="0.9" fill="#a88c68" fill-opacity="0.43"/><circle cx="504.6" cy="171.0" r="0.8" fill="#d8bc90" fill-opacity="0.49"/><circle cx="498.9" cy="185.1" r="0.6" fill="#b89868" fill-opacity="0.67"/><circle cx="475.6" cy="198.4" r="0.9" fill="#c8a878" fill-opacity="0.68"/><circle cx="509.5" cy="154.4" r="0.8" fill="#d8bc90" fill-opacity="0.46"/><circle cx="508.8" cy="168.3" r="0.7" fill="#e0cca8" fill-opacity="0.70"/><circle cx="492.9" cy="191.2" r="0.8" fill="#e0cca8" fill-opacity="0.62"/><circle cx="499.2" cy="183.4" r="0.7" fill="#e0cca8" fill-opacity="0.71"/><circle cx="505.9" cy="171.5" r="0.7" fill="#c8a878" fill-opacity="0.44"/><circle cx="499.2" cy="166.3" r="0.9" fill="#a88c68" fill-opacity="0.37"/><circle cx="499.1" cy="165.1" r="0.8" fill="#d8bc90" fill-opacity="0.77"/><circle cx="499.6" cy="170.7" r="0.9" fill="#e0cca8" fill-opacity="0.38"/><circle cx="507.1" cy="183.5" r="0.9" fill="#a88c68" fill-opacity="0.52"/><circle cx="503.6" cy="165.8" r="0.6" fill="#a88c68" fill-opacity="0.73"/><circle cx="494.0" cy="183.8" r="0.8" fill="#e0cca8" fill-opacity="0.34"/><circle cx="511.5" cy="161.1" r="0.7" fill="#d8bc90" fill-opacity="0.43"/><circle cx="495.7" cy="170.9" r="0.9" fill="#e0cca8" fill-opacity="0.41"/><circle cx="510.3" cy="167.1" r="0.8" fill="#e0cca8" fill-opacity="0.62"/><circle cx="496.0" cy="201.1" r="0.9" fill="#d8bc90" fill-opacity="0.35"/><circle cx="498.4" cy="171.3" r="0.7" fill="#e0cca8" fill-opacity="0.63"/><circle cx="501.0" cy="183.8" r="0.6" fill="#d8bc90" fill-opacity="0.70"/><circle cx="493.7" cy="180.8" r="0.7" fill="#c8a878" fill-opacity="0.44"/><circle cx="487.8" cy="179.8" r="0.9" fill="#d8bc90" fill-opacity="0.34"/><circle cx="493.0" cy="175.0" r="0.8" fill="#b89868" fill-opacity="0.49"/><circle cx="491.5" cy="186.3" r="0.7" fill="#c8a878" fill-opacity="0.34"/><circle cx="500.7" cy="156.2" r="0.9" fill="#d8bc90" fill-opacity="0.70"/><circle cx="505.2" cy="176.3" r="0.7" fill="#e0cca8" fill-opacity="0.70"/><circle cx="496.6" cy="199.4" r="0.6" fill="#c8a878" fill-opacity="0.41"/><circle cx="501.1" cy="186.5" r="0.8" fill="#a88c68" fill-opacity="0.72"/><circle cx="489.0" cy="178.6" r="0.9" fill="#a88c68" fill-opacity="0.43"/><circle cx="515.7" cy="176.3" r="0.6" fill="#d8bc90" fill-opacity="0.57"/><circle cx="485.8" cy="192.9" r="0.7" fill="#e0cca8" fill-opacity="0.33"/><circle cx="486.7" cy="185.6" r="0.8" fill="#d8bc90" fill-opacity="0.76"/><circle cx="498.2" cy="196.9" r="0.7" fill="#b89868" fill-opacity="0.53"/><circle cx="507.0" cy="169.8" r="0.8" fill="#e0cca8" fill-opacity="0.49"/><circle cx="502.0" cy="189.2" r="0.8" fill="#c8a878" fill-opacity="0.32"/><circle cx="516.7" cy="163.3" r="0.9" fill="#d8bc90" fill-opacity="0.43"/><circle cx="512.9" cy="175.8" r="0.7" fill="#a88c68" fill-opacity="0.49"/><circle cx="497.6" cy="195.5" r="0.8" fill="#e0cca8" fill-opacity="0.77"/><circle cx="506.3" cy="191.2" r="0.8" fill="#c8a878" fill-opacity="0.71"/><circle cx="494.2" cy="169.6" r="0.7" fill="#a88c68" fill-opacity="0.44"/><circle cx="380.2" cy="273.1" r="0.8" fill="#a88c68" fill-opacity="0.74"/><circle cx="240.8" cy="44.7" r="0.7" fill="#e0cca8" fill-opacity="0.47"/><circle cx="375.1" cy="260.9" r="0.8" fill="#d8bc90" fill-opacity="0.59"/><circle cx="284.8" cy="36.3" r="0.7" fill="#c8a878" fill-opacity="0.72"/><circle cx="562.8" cy="90.7" r="0.9" fill="#b89868" fill-opacity="0.57"/><circle cx="251.3" cy="52.6" r="0.8" fill="#b89868" fill-opacity="0.45"/><circle cx="260.8" cy="128.6" r="0.7" fill="#c8a878" fill-opacity="0.50"/><circle cx="455.8" cy="269.5" r="0.7" fill="#d8bc90" fill-opacity="0.69"/><circle cx="341.5" cy="215.8" r="0.8" fill="#b89868" fill-opacity="0.73"/><circle cx="359.7" cy="240.3" r="0.8" fill="#d8bc90" fill-opacity="0.45"/><circle cx="272.6" cy="257.2" r="0.8" fill="#d8bc90" fill-opacity="0.74"/><circle cx="230.1" cy="370.6" r="0.7" fill="#c8a878" fill-opacity="0.62"/><circle cx="311.6" cy="230.7" r="0.8" fill="#a88c68" fill-opacity="0.60"/><circle cx="303.5" cy="188.9" r="0.9" fill="#b89868" fill-opacity="0.38"/><circle cx="333.2" cy="263.6" r="0.9" fill="#b89868" fill-opacity="0.41"/><circle cx="533.9" cy="340.9" r="0.8" fill="#d8bc90" fill-opacity="0.63"/><circle cx="609.9" cy="193.0" r="0.9" fill="#a88c68" fill-opacity="0.76"/><circle cx="444.3" cy="153.5" r="0.7" fill="#a88c68" fill-opacity="0.41"/><circle cx="342.4" cy="213.1" r="0.6" fill="#e0cca8" fill-opacity="0.34"/><circle cx="609.5" cy="41.1" r="0.8" fill="#e0cca8" fill-opacity="0.79"/><circle cx="521.5" cy="142.7" r="0.8" fill="#e0cca8" fill-opacity="0.47"/><circle cx="463.1" cy="120.9" r="0.6" fill="#b89868" fill-opacity="0.76"/><circle cx="510.3" cy="208.5" r="0.7" fill="#c8a878" fill-opacity="0.33"/><circle cx="350.9" cy="190.2" r="0.9" fill="#c8a878" fill-opacity="0.56"/><circle cx="231.8" cy="57.3" r="0.8" fill="#d8bc90" fill-opacity="0.50"/><circle cx="584.0" cy="51.3" r="0.8" fill="#b89868" fill-opacity="0.42"/><circle cx="385.0" cy="274.4" r="0.8" fill="#e0cca8" fill-opacity="0.49"/><circle cx="244.1" cy="373.8" r="0.6" fill="#d8bc90" fill-opacity="0.38"/><circle cx="310.6" cy="385.7" r="0.8" fill="#c8a878" fill-opacity="0.59"/><circle cx="399.1" cy="242.7" r="0.9" fill="#a88c68" fill-opacity="0.66"/><circle cx="465.5" cy="53.8" r="0.7" fill="#a88c68" fill-opacity="0.46"/><circle cx="427.4" cy="304.8" r="0.6" fill="#a88c68" fill-opacity="0.44"/><circle cx="537.9" cy="299.1" r="0.6" fill="#b89868" fill-opacity="0.74"/><circle cx="495.4" cy="68.6" r="0.9" fill="#d8bc90" fill-opacity="0.65"/><circle cx="389.6" cy="213.5" r="0.8" fill="#c8a878" fill-opacity="0.72"/><path d="M368.8 163.8 L369.2 164.3 L368.4 165.6 L369.1 166.3 L367.0 167.4 L368.6 169.2 L367.5 170.0 L368.4 170.3 L368.7 170.5 L368.8 171.3 L369.8 172.1 L369.9 172.2 L370.0 171.9 L369.9 171.0 L372.1 170.4 L371.8 170.4 L372.6 170.2 L373.9 169.5 L373.8 170.0 L375.4 170.1 L375.6 168.9 L377.1 167.0 L378.0 165.9 L378.6 165.0 L380.0 165.0 L380.2 165.9 L381.7 165.9 L382.4 164.9 L383.3 165.1 L385.1 164.6 L385.0 165.6 L385.4 165.9 L387.1 167.0 L387.4 168.3 L389.9 169.0 L389.9 169.8 L391.2 170.6 L391.6 168.5 L392.5 168.1 L394.3 167.0 L395.3 165.3 L395.0 164.2 L396.2 163.8 L397.9 162.7 L398.5 162.9 L399.8 162.6 L400.0 163.0 L401.4 161.0 L402.5 161.2 L404.0 161.2 L404.6 160.1 L406.9 161.4 L408.1 161.1 L409.3 161.2 L411.2 160.6 L413.3 160.8 L415.0 160.6 L415.4 159.9 L416.8 161.6 L419.1 161.0 L420.0 161.2 L420.7 161.3 L420.8 160.9 L423.2 159.9 L422.5 160.4 L424.4 160.0 L425.0 160.0 L425.2 161.1 L426.8 161.4 L425.6 160.3 L426.2 161.6 L427.3 161.2 L427.5 161.2 L426.0 162.3 L427.2 161.5 L425.2 161.5 L425.7 162.4 L423.7 164.1 L423.8 163.8 L423.9 164.4 L422.8 166.1 L422.8 166.4 L423.2 166.4 L423.7 167.2 L422.5 168.1 L422.8 167.7 L423.2 168.2 L425.9 168.9 L425.5 168.1 L427.3 169.3 L427.5 168.8 L428.0 167.8 L428.7 168.5 L430.0 167.8 L431.2 167.7 L431.7 165.7 L432.5 166.2 L434.1 165.3 L435.7 165.6 L436.6 165.4 L438.2 165.2 L439.6 164.8 L440.0 163.8 L440.8 164.7 L442.2 165.1 L443.9 165.1 L444.2 164.8 L445.5 165.0 L447.5 166.2 M361.9 181.9 L363.8 181.7 L363.9 179.7 L365.5 179.1 L365.6 178.6 L366.7 175.9 L368.8 175.6 L370.2 174.9 L371.1 175.1 L371.8 174.7 L373.5 174.2 L374.5 174.2 L375.0 173.8 L377.0 173.3 L377.1 173.4 L377.8 174.8 L379.9 174.3 L380.6 174.7 L382.5 175.6 L384.9 176.2 L385.7 176.8 L387.4 177.2 L388.3 178.7 L391.0 178.7 L392.5 178.8 M365.0 185.0 L367.9 184.0 L368.3 184.0 L370.6 183.8 L373.1 184.8 L375.6 184.4 L377.5 183.8 L379.0 185.4 L381.2 184.7 L382.2 187.2 L384.0 187.2 L384.6 187.1 L386.2 188.8 L386.6 189.4 L387.1 192.2 L388.8 192.9 L390.0 194.2 L391.2 195.5 L391.2 197.5 L390.9 198.6 L392.6 201.6 L391.3 203.4 L391.2 204.6 L392.2 205.3 L392.5 207.5 L393.1 208.2 L393.4 210.5 L393.6 212.1 L395.0 211.9 L394.0 212.8 L395.0 215.0 L395.1 214.8 L395.4 215.5 L396.2 216.5 L397.5 218.2 L396.8 218.3 L397.5 218.9 L397.6 219.0 L400.0 219.9 L400.0 221.2 L400.6 222.1 L401.5 224.4 L403.0 224.5 L403.4 225.7 L404.3 227.2 L406.6 227.3 L407.6 228.6 L408.5 229.1 L408.6 230.0 L408.9 229.9 L411.6 232.3 L411.9 232.9 L414.1 232.4 L415.0 234.1 L415.6 234.2 L417.3 233.9 L417.5 234.3 L419.3 234.9 L420.9 234.9 L422.2 234.6 L424.0 235.6 L424.9 236.2 L426.3 236.9 L428.9 236.2 L429.1 236.8 L431.7 237.4 L432.3 237.0 L433.1 236.7 L434.2 238.4 L436.0 237.5 L438.4 237.5 L439.7 237.2 L440.6 238.4 L441.8 237.9 L444.0 238.9 L445.4 240.3 L445.4 239.9 L448.2 241.1 L449.0 241.2 L449.5 240.2 L449.7 240.4 L451.0 240.8 L452.5 240.6 L452.5 240.1 L453.1 239.8 M453.1 239.8 L454.0 238.2 L453.6 238.5 L455.1 238.4 L455.4 236.7 L456.1 236.6 L457.3 235.6 L457.7 236.2 L456.6 238.7 L457.1 240.3 L455.7 241.6 L456.0 243.3 L455.9 243.9 L454.8 245.7 L455.8 246.4 L453.8 247.1 L453.8 249.3 L452.9 249.6 L453.1 250.9 L453.1 251.9 L454.0 251.8 L453.3 252.9 L454.0 254.9 L454.8 256.0 L454.5 256.5 L454.8 258.2 L455.4 257.3 L457.6 258.8 L458.0 259.6 L459.1 259.5 L460.1 260.6 L460.5 260.7 L461.0 261.5 L461.9 261.5 L464.2 262.2 L464.8 261.1 L465.0 262.0 L465.5 262.4 L464.2 264.4 L465.0 267.2 L464.0 267.6 L464.0 269.4 L464.3 270.4 L462.9 272.6 L463.0 272.5 L463.6 275.0 L463.0 276.7 L461.9 277.2 L461.5 278.7 L461.6 279.9 L460.1 281.3 L460.0 282.7 L460.4 284.0 L458.3 284.6 L458.7 285.7 L458.0 285.6 L457.1 286.3 L457.4 287.5 L455.7 289.6 L455.3 290.1 L455.2 290.5 L456.3 290.4 L456.0 289.2 L458.3 289.2 L458.1 289.1 L458.4 289.2 L460.1 288.4 L461.1 288.7 L460.7 287.4 L462.4 287.1 L461.9 286.6 L462.5 285.1 L462.9 284.3 M457.3 234.2 L458.4 232.9 L458.9 232.8 L460.7 232.2 L460.7 232.3 L461.1 230.1 L462.9 230.0 L464.0 230.7 L465.6 229.3 L467.7 228.8 L469.0 228.2 L470.0 229.7 L471.2 228.6 L472.3 228.3 L472.5 229.7 L473.5 230.2 L474.8 228.7 L476.3 230.2 L476.8 230.0 L478.1 228.6 L478.4 229.1 L480.4 227.8 L480.4 227.9 L481.7 227.7 L482.4 227.3 L482.4 226.9 L483.2 225.7 L483.0 225.8 L483.3 225.6 L483.6 225.3 L484.4 225.2 L484.0 226.2 L483.7 227.4 L481.6 230.2 L481.5 230.8 L480.0 233.1 L479.6 234.2 M440.6 213.3 L439.0 214.4 L438.6 213.5 L436.8 214.2 L435.2 216.0 L434.0 216.4 L432.3 216.1 L431.0 216.1 L430.5 216.8 L429.5 217.0 L428.0 218.2 L426.9 217.9 L426.7 218.9 L425.2 220.2 L424.6 220.3 L425.4 221.7 L423.9 222.3 L423.3 224.1 L422.6 224.5 L422.6 224.9 L422.4 227.2 L423.3 228.8 L423.0 229.5 L423.5 229.8 L424.0 231.4 L425.6 231.3 L425.7 231.8 L427.3 231.3 L429.6 232.1 L429.5 231.8 L430.9 232.8 L431.1 231.5 L431.9 231.5 L434.0 231.4 L434.2 230.6 L436.1 228.4 L436.5 228.6 L436.1 228.7 L437.7 230.5 L436.3 230.2 L436.8 231.7 L437.5 233.0 L437.9 232.8 L439.5 232.8 L439.3 233.7 L440.5 234.8 L441.0 235.4 L442.7 234.9 L443.4 235.6 L445.3 236.0 L445.8 237.9 L447.0 238.7 L447.0 238.9 L448.7 238.7 L449.0 239.8 M450.0 191.2 L449.1 193.1 L448.9 192.9 L448.0 193.6 L446.5 195.6 L445.4 195.5 L445.0 197.5 L444.7 199.0 L444.5 199.3 L442.9 200.3 L443.4 201.6 L442.3 203.7 L442.5 205.0 L442.2 206.4 L441.6 207.0 L442.1 207.4 L443.0 209.9 L443.0 209.5 L442.0 211.0 L440.8 211.8 L442.3 211.5 L440.9 212.8 L441.2 212.7 L441.3 213.0 L440.6 213.3 L441.7 214.3 L442.0 214.2 L442.0 216.9 L442.4 217.4 L443.0 218.8 L443.4 218.9 L442.8 218.7 L443.2 220.1 L445.1 219.0 L443.9 219.3 L444.8 220.5 L444.8 220.3" fill="none" stroke="#a87028" stroke-width="4.6" stroke-opacity="0.3" stroke-linejoin="round" stroke-linecap="round"/><path d="M368.8 163.8 L369.2 164.3 L368.4 165.6 L369.1 166.3 L367.0 167.4 L368.6 169.2 L367.5 170.0 L368.4 170.3 L368.7 170.5 L368.8 171.3 L369.8 172.1 L369.9 172.2 L370.0 171.9 L369.9 171.0 L372.1 170.4 L371.8 170.4 L372.6 170.2 L373.9 169.5 L373.8 170.0 L375.4 170.1 L375.6 168.9 L377.1 167.0 L378.0 165.9 L378.6 165.0 L380.0 165.0 L380.2 165.9 L381.7 165.9 L382.4 164.9 L383.3 165.1 L385.1 164.6 L385.0 165.6 L385.4 165.9 L387.1 167.0 L387.4 168.3 L389.9 169.0 L389.9 169.8 L391.2 170.6 L391.6 168.5 L392.5 168.1 L394.3 167.0 L395.3 165.3 L395.0 164.2 L396.2 163.8 L397.9 162.7 L398.5 162.9 L399.8 162.6 L400.0 163.0 L401.4 161.0 L402.5 161.2 L404.0 161.2 L404.6 160.1 L406.9 161.4 L408.1 161.1 L409.3 161.2 L411.2 160.6 L413.3 160.8 L415.0 160.6 L415.4 159.9 L416.8 161.6 L419.1 161.0 L420.0 161.2 L420.7 161.3 L420.8 160.9 L423.2 159.9 L422.5 160.4 L424.4 160.0 L425.0 160.0 L425.2 161.1 L426.8 161.4 L425.6 160.3 L426.2 161.6 L427.3 161.2 L427.5 161.2 L426.0 162.3 L427.2 161.5 L425.2 161.5 L425.7 162.4 L423.7 164.1 L423.8 163.8 L423.9 164.4 L422.8 166.1 L422.8 166.4 L423.2 166.4 L423.7 167.2 L422.5 168.1 L422.8 167.7 L423.2 168.2 L425.9 168.9 L425.5 168.1 L427.3 169.3 L427.5 168.8 L428.0 167.8 L428.7 168.5 L430.0 167.8 L431.2 167.7 L431.7 165.7 L432.5 166.2 L434.1 165.3 L435.7 165.6 L436.6 165.4 L438.2 165.2 L439.6 164.8 L440.0 163.8 L440.8 164.7 L442.2 165.1 L443.9 165.1 L444.2 164.8 L445.5 165.0 L447.5 166.2 M361.9 181.9 L363.8 181.7 L363.9 179.7 L365.5 179.1 L365.6 178.6 L366.7 175.9 L368.8 175.6 L370.2 174.9 L371.1 175.1 L371.8 174.7 L373.5 174.2 L374.5 174.2 L375.0 173.8 L377.0 173.3 L377.1 173.4 L377.8 174.8 L379.9 174.3 L380.6 174.7 L382.5 175.6 L384.9 176.2 L385.7 176.8 L387.4 177.2 L388.3 178.7 L391.0 178.7 L392.5 178.8 M365.0 185.0 L367.9 184.0 L368.3 184.0 L370.6 183.8 L373.1 184.8 L375.6 184.4 L377.5 183.8 L379.0 185.4 L381.2 184.7 L382.2 187.2 L384.0 187.2 L384.6 187.1 L386.2 188.8 L386.6 189.4 L387.1 192.2 L388.8 192.9 L390.0 194.2 L391.2 195.5 L391.2 197.5 L390.9 198.6 L392.6 201.6 L391.3 203.4 L391.2 204.6 L392.2 205.3 L392.5 207.5 L393.1 208.2 L393.4 210.5 L393.6 212.1 L395.0 211.9 L394.0 212.8 L395.0 215.0 L395.1 214.8 L395.4 215.5 L396.2 216.5 L397.5 218.2 L396.8 218.3 L397.5 218.9 L397.6 219.0 L400.0 219.9 L400.0 221.2 L400.6 222.1 L401.5 224.4 L403.0 224.5 L403.4 225.7 L404.3 227.2 L406.6 227.3 L407.6 228.6 L408.5 229.1 L408.6 230.0 L408.9 229.9 L411.6 232.3 L411.9 232.9 L414.1 232.4 L415.0 234.1 L415.6 234.2 L417.3 233.9 L417.5 234.3 L419.3 234.9 L420.9 234.9 L422.2 234.6 L424.0 235.6 L424.9 236.2 L426.3 236.9 L428.9 236.2 L429.1 236.8 L431.7 237.4 L432.3 237.0 L433.1 236.7 L434.2 238.4 L436.0 237.5 L438.4 237.5 L439.7 237.2 L440.6 238.4 L441.8 237.9 L444.0 238.9 L445.4 240.3 L445.4 239.9 L448.2 241.1 L449.0 241.2 L449.5 240.2 L449.7 240.4 L451.0 240.8 L452.5 240.6 L452.5 240.1 L453.1 239.8 M453.1 239.8 L454.0 238.2 L453.6 238.5 L455.1 238.4 L455.4 236.7 L456.1 236.6 L457.3 235.6 L457.7 236.2 L456.6 238.7 L457.1 240.3 L455.7 241.6 L456.0 243.3 L455.9 243.9 L454.8 245.7 L455.8 246.4 L453.8 247.1 L453.8 249.3 L452.9 249.6 L453.1 250.9 L453.1 251.9 L454.0 251.8 L453.3 252.9 L454.0 254.9 L454.8 256.0 L454.5 256.5 L454.8 258.2 L455.4 257.3 L457.6 258.8 L458.0 259.6 L459.1 259.5 L460.1 260.6 L460.5 260.7 L461.0 261.5 L461.9 261.5 L464.2 262.2 L464.8 261.1 L465.0 262.0 L465.5 262.4 L464.2 264.4 L465.0 267.2 L464.0 267.6 L464.0 269.4 L464.3 270.4 L462.9 272.6 L463.0 272.5 L463.6 275.0 L463.0 276.7 L461.9 277.2 L461.5 278.7 L461.6 279.9 L460.1 281.3 L460.0 282.7 L460.4 284.0 L458.3 284.6 L458.7 285.7 L458.0 285.6 L457.1 286.3 L457.4 287.5 L455.7 289.6 L455.3 290.1 L455.2 290.5 L456.3 290.4 L456.0 289.2 L458.3 289.2 L458.1 289.1 L458.4 289.2 L460.1 288.4 L461.1 288.7 L460.7 287.4 L462.4 287.1 L461.9 286.6 L462.5 285.1 L462.9 284.3 M457.3 234.2 L458.4 232.9 L458.9 232.8 L460.7 232.2 L460.7 232.3 L461.1 230.1 L462.9 230.0 L464.0 230.7 L465.6 229.3 L467.7 228.8 L469.0 228.2 L470.0 229.7 L471.2 228.6 L472.3 228.3 L472.5 229.7 L473.5 230.2 L474.8 228.7 L476.3 230.2 L476.8 230.0 L478.1 228.6 L478.4 229.1 L480.4 227.8 L480.4 227.9 L481.7 227.7 L482.4 227.3 L482.4 226.9 L483.2 225.7 L483.0 225.8 L483.3 225.6 L483.6 225.3 L484.4 225.2 L484.0 226.2 L483.7 227.4 L481.6 230.2 L481.5 230.8 L480.0 233.1 L479.6 234.2 M440.6 213.3 L439.0 214.4 L438.6 213.5 L436.8 214.2 L435.2 216.0 L434.0 216.4 L432.3 216.1 L431.0 216.1 L430.5 216.8 L429.5 217.0 L428.0 218.2 L426.9 217.9 L426.7 218.9 L425.2 220.2 L424.6 220.3 L425.4 221.7 L423.9 222.3 L423.3 224.1 L422.6 224.5 L422.6 224.9 L422.4 227.2 L423.3 228.8 L423.0 229.5 L423.5 229.8 L424.0 231.4 L425.6 231.3 L425.7 231.8 L427.3 231.3 L429.6 232.1 L429.5 231.8 L430.9 232.8 L431.1 231.5 L431.9 231.5 L434.0 231.4 L434.2 230.6 L436.1 228.4 L436.5 228.6 L436.1 228.7 L437.7 230.5 L436.3 230.2 L436.8 231.7 L437.5 233.0 L437.9 232.8 L439.5 232.8 L439.3 233.7 L440.5 234.8 L441.0 235.4 L442.7 234.9 L443.4 235.6 L445.3 236.0 L445.8 237.9 L447.0 238.7 L447.0 238.9 L448.7 238.7 L449.0 239.8 M450.0 191.2 L449.1 193.1 L448.9 192.9 L448.0 193.6 L446.5 195.6 L445.4 195.5 L445.0 197.5 L444.7 199.0 L444.5 199.3 L442.9 200.3 L443.4 201.6 L442.3 203.7 L442.5 205.0 L442.2 206.4 L441.6 207.0 L442.1 207.4 L443.0 209.9 L443.0 209.5 L442.0 211.0 L440.8 211.8 L442.3 211.5 L440.9 212.8 L441.2 212.7 L441.3 213.0 L440.6 213.3 L441.7 214.3 L442.0 214.2 L442.0 216.9 L442.4 217.4 L443.0 218.8 L443.4 218.9 L442.8 218.7 L443.2 220.1 L445.1 219.0 L443.9 219.3 L444.8 220.5 L444.8 220.3" fill="none" stroke="#e8bc70" stroke-width="2.7" stroke-opacity="0.85" stroke-linejoin="round" stroke-linecap="round"/><path d="M368.8 163.8 L369.2 164.3 L368.4 165.6 L369.1 166.3 L367.0 167.4 L368.6 169.2 L367.5 170.0 L368.4 170.3 L368.7 170.5 L368.8 171.3 L369.8 172.1 L369.9 172.2 L370.0 171.9 L369.9 171.0 L372.1 170.4 L371.8 170.4 L372.6 170.2 L373.9 169.5 L373.8 170.0 L375.4 170.1 L375.6 168.9 L377.1 167.0 L378.0 165.9 L378.6 165.0 L380.0 165.0 L380.2 165.9 L381.7 165.9 L382.4 164.9 L383.3 165.1 L385.1 164.6 L385.0 165.6 L385.4 165.9 L387.1 167.0 L387.4 168.3 L389.9 169.0 L389.9 169.8 L391.2 170.6 L391.6 168.5 L392.5 168.1 L394.3 167.0 L395.3 165.3 L395.0 164.2 L396.2 163.8 L397.9 162.7 L398.5 162.9 L399.8 162.6 L400.0 163.0 L401.4 161.0 L402.5 161.2 L404.0 161.2 L404.6 160.1 L406.9 161.4 L408.1 161.1 L409.3 161.2 L411.2 160.6 L413.3 160.8 L415.0 160.6 L415.4 159.9 L416.8 161.6 L419.1 161.0 L420.0 161.2 L420.7 161.3 L420.8 160.9 L423.2 159.9 L422.5 160.4 L424.4 160.0 L425.0 160.0 L425.2 161.1 L426.8 161.4 L425.6 160.3 L426.2 161.6 L427.3 161.2 L427.5 161.2 L426.0 162.3 L427.2 161.5 L425.2 161.5 L425.7 162.4 L423.7 164.1 L423.8 163.8 L423.9 164.4 L422.8 166.1 L422.8 166.4 L423.2 166.4 L423.7 167.2 L422.5 168.1 L422.8 167.7 L423.2 168.2 L425.9 168.9 L425.5 168.1 L427.3 169.3 L427.5 168.8 L428.0 167.8 L428.7 168.5 L430.0 167.8 L431.2 167.7 L431.7 165.7 L432.5 166.2 L434.1 165.3 L435.7 165.6 L436.6 165.4 L438.2 165.2 L439.6 164.8 L440.0 163.8 L440.8 164.7 L442.2 165.1 L443.9 165.1 L444.2 164.8 L445.5 165.0 L447.5 166.2 M361.9 181.9 L363.8 181.7 L363.9 179.7 L365.5 179.1 L365.6 178.6 L366.7 175.9 L368.8 175.6 L370.2 174.9 L371.1 175.1 L371.8 174.7 L373.5 174.2 L374.5 174.2 L375.0 173.8 L377.0 173.3 L377.1 173.4 L377.8 174.8 L379.9 174.3 L380.6 174.7 L382.5 175.6 L384.9 176.2 L385.7 176.8 L387.4 177.2 L388.3 178.7 L391.0 178.7 L392.5 178.8 M365.0 185.0 L367.9 184.0 L368.3 184.0 L370.6 183.8 L373.1 184.8 L375.6 184.4 L377.5 183.8 L379.0 185.4 L381.2 184.7 L382.2 187.2 L384.0 187.2 L384.6 187.1 L386.2 188.8 L386.6 189.4 L387.1 192.2 L388.8 192.9 L390.0 194.2 L391.2 195.5 L391.2 197.5 L390.9 198.6 L392.6 201.6 L391.3 203.4 L391.2 204.6 L392.2 205.3 L392.5 207.5 L393.1 208.2 L393.4 210.5 L393.6 212.1 L395.0 211.9 L394.0 212.8 L395.0 215.0 L395.1 214.8 L395.4 215.5 L396.2 216.5 L397.5 218.2 L396.8 218.3 L397.5 218.9 L397.6 219.0 L400.0 219.9 L400.0 221.2 L400.6 222.1 L401.5 224.4 L403.0 224.5 L403.4 225.7 L404.3 227.2 L406.6 227.3 L407.6 228.6 L408.5 229.1 L408.6 230.0 L408.9 229.9 L411.6 232.3 L411.9 232.9 L414.1 232.4 L415.0 234.1 L415.6 234.2 L417.3 233.9 L417.5 234.3 L419.3 234.9 L420.9 234.9 L422.2 234.6 L424.0 235.6 L424.9 236.2 L426.3 236.9 L428.9 236.2 L429.1 236.8 L431.7 237.4 L432.3 237.0 L433.1 236.7 L434.2 238.4 L436.0 237.5 L438.4 237.5 L439.7 237.2 L440.6 238.4 L441.8 237.9 L444.0 238.9 L445.4 240.3 L445.4 239.9 L448.2 241.1 L449.0 241.2 L449.5 240.2 L449.7 240.4 L451.0 240.8 L452.5 240.6 L452.5 240.1 L453.1 239.8 M453.1 239.8 L454.0 238.2 L453.6 238.5 L455.1 238.4 L455.4 236.7 L456.1 236.6 L457.3 235.6 L457.7 236.2 L456.6 238.7 L457.1 240.3 L455.7 241.6 L456.0 243.3 L455.9 243.9 L454.8 245.7 L455.8 246.4 L453.8 247.1 L453.8 249.3 L452.9 249.6 L453.1 250.9 L453.1 251.9 L454.0 251.8 L453.3 252.9 L454.0 254.9 L454.8 256.0 L454.5 256.5 L454.8 258.2 L455.4 257.3 L457.6 258.8 L458.0 259.6 L459.1 259.5 L460.1 260.6 L460.5 260.7 L461.0 261.5 L461.9 261.5 L464.2 262.2 L464.8 261.1 L465.0 262.0 L465.5 262.4 L464.2 264.4 L465.0 267.2 L464.0 267.6 L464.0 269.4 L464.3 270.4 L462.9 272.6 L463.0 272.5 L463.6 275.0 L463.0 276.7 L461.9 277.2 L461.5 278.7 L461.6 279.9 L460.1 281.3 L460.0 282.7 L460.4 284.0 L458.3 284.6 L458.7 285.7 L458.0 285.6 L457.1 286.3 L457.4 287.5 L455.7 289.6 L455.3 290.1 L455.2 290.5 L456.3 290.4 L456.0 289.2 L458.3 289.2 L458.1 289.1 L458.4 289.2 L460.1 288.4 L461.1 288.7 L460.7 287.4 L462.4 287.1 L461.9 286.6 L462.5 285.1 L462.9 284.3 M457.3 234.2 L458.4 232.9 L458.9 232.8 L460.7 232.2 L460.7 232.3 L461.1 230.1 L462.9 230.0 L464.0 230.7 L465.6 229.3 L467.7 228.8 L469.0 228.2 L470.0 229.7 L471.2 228.6 L472.3 228.3 L472.5 229.7 L473.5 230.2 L474.8 228.7 L476.3 230.2 L476.8 230.0 L478.1 228.6 L478.4 229.1 L480.4 227.8 L480.4 227.9 L481.7 227.7 L482.4 227.3 L482.4 226.9 L483.2 225.7 L483.0 225.8 L483.3 225.6 L483.6 225.3 L484.4 225.2 L484.0 226.2 L483.7 227.4 L481.6 230.2 L481.5 230.8 L480.0 233.1 L479.6 234.2 M440.6 213.3 L439.0 214.4 L438.6 213.5 L436.8 214.2 L435.2 216.0 L434.0 216.4 L432.3 216.1 L431.0 216.1 L430.5 216.8 L429.5 217.0 L428.0 218.2 L426.9 217.9 L426.7 218.9 L425.2 220.2 L424.6 220.3 L425.4 221.7 L423.9 222.3 L423.3 224.1 L422.6 224.5 L422.6 224.9 L422.4 227.2 L423.3 228.8 L423.0 229.5 L423.5 229.8 L424.0 231.4 L425.6 231.3 L425.7 231.8 L427.3 231.3 L429.6 232.1 L429.5 231.8 L430.9 232.8 L431.1 231.5 L431.9 231.5 L434.0 231.4 L434.2 230.6 L436.1 228.4 L436.5 228.6 L436.1 228.7 L437.7 230.5 L436.3 230.2 L436.8 231.7 L437.5 233.0 L437.9 232.8 L439.5 232.8 L439.3 233.7 L440.5 234.8 L441.0 235.4 L442.7 234.9 L443.4 235.6 L445.3 236.0 L445.8 237.9 L447.0 238.7 L447.0 238.9 L448.7 238.7 L449.0 239.8 M450.0 191.2 L449.1 193.1 L448.9 192.9 L448.0 193.6 L446.5 195.6 L445.4 195.5 L445.0 197.5 L444.7 199.0 L444.5 199.3 L442.9 200.3 L443.4 201.6 L442.3 203.7 L442.5 205.0 L442.2 206.4 L441.6 207.0 L442.1 207.4 L443.0 209.9 L443.0 209.5 L442.0 211.0 L440.8 211.8 L442.3 211.5 L440.9 212.8 L441.2 212.7 L441.3 213.0 L440.6 213.3 L441.7 214.3 L442.0 214.2 L442.0 216.9 L442.4 217.4 L443.0 218.8 L443.4 218.9 L442.8 218.7 L443.2 220.1 L445.1 219.0 L443.9 219.3 L444.8 220.5 L444.8 220.3" fill="none" stroke="#fff0c8" stroke-width="1.5" stroke-linejoin="round" stroke-linecap="round"/><path d="M368.8 163.8 L369.2 164.3 L368.4 165.6 L369.1 166.3 L367.0 167.4 L368.6 169.2 L367.5 170.0 L368.4 170.3 L368.7 170.5 L368.8 171.3 L369.8 172.1 L369.9 172.2 L370.0 171.9 L369.9 171.0 L372.1 170.4 L371.8 170.4 L372.6 170.2 L373.9 169.5 L373.8 170.0 L375.4 170.1 L375.6 168.9 L377.1 167.0 L378.0 165.9 L378.6 165.0 L380.0 165.0 L380.2 165.9 L381.7 165.9 L382.4 164.9 L383.3 165.1 L385.1 164.6 L385.0 165.6 L385.4 165.9 L387.1 167.0 L387.4 168.3 L389.9 169.0 L389.9 169.8 L391.2 170.6 L391.6 168.5 L392.5 168.1 L394.3 167.0 L395.3 165.3 L395.0 164.2 L396.2 163.8 L397.9 162.7 L398.5 162.9 L399.8 162.6 L400.0 163.0 L401.4 161.0 L402.5 161.2 L404.0 161.2 L404.6 160.1 L406.9 161.4 L408.1 161.1 L409.3 161.2 L411.2 160.6 L413.3 160.8 L415.0 160.6 L415.4 159.9 L416.8 161.6 L419.1 161.0 L420.0 161.2 L420.7 161.3 L420.8 160.9 L423.2 159.9 L422.5 160.4 L424.4 160.0 L425.0 160.0 L425.2 161.1 L426.8 161.4 L425.6 160.3 L426.2 161.6 L427.3 161.2 L427.5 161.2 L426.0 162.3 L427.2 161.5 L425.2 161.5 L425.7 162.4 L423.7 164.1 L423.8 163.8 L423.9 164.4 L422.8 166.1 L422.8 166.4 L423.2 166.4 L423.7 167.2 L422.5 168.1 L422.8 167.7 L423.2 168.2 L425.9 168.9 L425.5 168.1 L427.3 169.3 L427.5 168.8 L428.0 167.8 L428.7 168.5 L430.0 167.8 L431.2 167.7 L431.7 165.7 L432.5 166.2 L434.1 165.3 L435.7 165.6 L436.6 165.4 L438.2 165.2 L439.6 164.8 L440.0 163.8 L440.8 164.7 L442.2 165.1 L443.9 165.1 L444.2 164.8 L445.5 165.0 L447.5 166.2 M361.9 181.9 L363.8 181.7 L363.9 179.7 L365.5 179.1 L365.6 178.6 L366.7 175.9 L368.8 175.6 L370.2 174.9 L371.1 175.1 L371.8 174.7 L373.5 174.2 L374.5 174.2 L375.0 173.8 L377.0 173.3 L377.1 173.4 L377.8 174.8 L379.9 174.3 L380.6 174.7 L382.5 175.6 L384.9 176.2 L385.7 176.8 L387.4 177.2 L388.3 178.7 L391.0 178.7 L392.5 178.8 M365.0 185.0 L367.9 184.0 L368.3 184.0 L370.6 183.8 L373.1 184.8 L375.6 184.4 L377.5 183.8 L379.0 185.4 L381.2 184.7 L382.2 187.2 L384.0 187.2 L384.6 187.1 L386.2 188.8 L386.6 189.4 L387.1 192.2 L388.8 192.9 L390.0 194.2 L391.2 195.5 L391.2 197.5 L390.9 198.6 L392.6 201.6 L391.3 203.4 L391.2 204.6 L392.2 205.3 L392.5 207.5 L393.1 208.2 L393.4 210.5 L393.6 212.1 L395.0 211.9 L394.0 212.8 L395.0 215.0 L395.1 214.8 L395.4 215.5 L396.2 216.5 L397.5 218.2 L396.8 218.3 L397.5 218.9 L397.6 219.0 L400.0 219.9 L400.0 221.2 L400.6 222.1 L401.5 224.4 L403.0 224.5 L403.4 225.7 L404.3 227.2 L406.6 227.3 L407.6 228.6 L408.5 229.1 L408.6 230.0 L408.9 229.9 L411.6 232.3 L411.9 232.9 L414.1 232.4 L415.0 234.1 L415.6 234.2 L417.3 233.9 L417.5 234.3 L419.3 234.9 L420.9 234.9 L422.2 234.6 L424.0 235.6 L424.9 236.2 L426.3 236.9 L428.9 236.2 L429.1 236.8 L431.7 237.4 L432.3 237.0 L433.1 236.7 L434.2 238.4 L436.0 237.5 L438.4 237.5 L439.7 237.2 L440.6 238.4 L441.8 237.9 L444.0 238.9 L445.4 240.3 L445.4 239.9 L448.2 241.1 L449.0 241.2 L449.5 240.2 L449.7 240.4 L451.0 240.8 L452.5 240.6 L452.5 240.1 L453.1 239.8 M453.1 239.8 L454.0 238.2 L453.6 238.5 L455.1 238.4 L455.4 236.7 L456.1 236.6 L457.3 235.6 L457.7 236.2 L456.6 238.7 L457.1 240.3 L455.7 241.6 L456.0 243.3 L455.9 243.9 L454.8 245.7 L455.8 246.4 L453.8 247.1 L453.8 249.3 L452.9 249.6 L453.1 250.9 L453.1 251.9 L454.0 251.8 L453.3 252.9 L454.0 254.9 L454.8 256.0 L454.5 256.5 L454.8 258.2 L455.4 257.3 L457.6 258.8 L458.0 259.6 L459.1 259.5 L460.1 260.6 L460.5 260.7 L461.0 261.5 L461.9 261.5 L464.2 262.2 L464.8 261.1 L465.0 262.0 L465.5 262.4 L464.2 264.4 L465.0 267.2 L464.0 267.6 L464.0 269.4 L464.3 270.4 L462.9 272.6 L463.0 272.5 L463.6 275.0 L463.0 276.7 L461.9 277.2 L461.5 278.7 L461.6 279.9 L460.1 281.3 L460.0 282.7 L460.4 284.0 L458.3 284.6 L458.7 285.7 L458.0 285.6 L457.1 286.3 L457.4 287.5 L455.7 289.6 L455.3 290.1 L455.2 290.5 L456.3 290.4 L456.0 289.2 L458.3 289.2 L458.1 289.1 L458.4 289.2 L460.1 288.4 L461.1 288.7 L460.7 287.4 L462.4 287.1 L461.9 286.6 L462.5 285.1 L462.9 284.3 M457.3 234.2 L458.4 232.9 L458.9 232.8 L460.7 232.2 L460.7 232.3 L461.1 230.1 L462.9 230.0 L464.0 230.7 L465.6 229.3 L467.7 228.8 L469.0 228.2 L470.0 229.7 L471.2 228.6 L472.3 228.3 L472.5 229.7 L473.5 230.2 L474.8 228.7 L476.3 230.2 L476.8 230.0 L478.1 228.6 L478.4 229.1 L480.4 227.8 L480.4 227.9 L481.7 227.7 L482.4 227.3 L482.4 226.9 L483.2 225.7 L483.0 225.8 L483.3 225.6 L483.6 225.3 L484.4 225.2 L484.0 226.2 L483.7 227.4 L481.6 230.2 L481.5 230.8 L480.0 233.1 L479.6 234.2 M440.6 213.3 L439.0 214.4 L438.6 213.5 L436.8 214.2 L435.2 216.0 L434.0 216.4 L432.3 216.1 L431.0 216.1 L430.5 216.8 L429.5 217.0 L428.0 218.2 L426.9 217.9 L426.7 218.9 L425.2 220.2 L424.6 220.3 L425.4 221.7 L423.9 222.3 L423.3 224.1 L422.6 224.5 L422.6 224.9 L422.4 227.2 L423.3 228.8 L423.0 229.5 L423.5 229.8 L424.0 231.4 L425.6 231.3 L425.7 231.8 L427.3 231.3 L429.6 232.1 L429.5 231.8 L430.9 232.8 L431.1 231.5 L431.9 231.5 L434.0 231.4 L434.2 230.6 L436.1 228.4 L436.5 228.6 L436.1 228.7 L437.7 230.5 L436.3 230.2 L436.8 231.7 L437.5 233.0 L437.9 232.8 L439.5 232.8 L439.3 233.7 L440.5 234.8 L441.0 235.4 L442.7 234.9 L443.4 235.6 L445.3 236.0 L445.8 237.9 L447.0 238.7 L447.0 238.9 L448.7 238.7 L449.0 239.8 M450.0 191.2 L449.1 193.1 L448.9 192.9 L448.0 193.6 L446.5 195.6 L445.4 195.5 L445.0 197.5 L444.7 199.0 L444.5 199.3 L442.9 200.3 L443.4 201.6 L442.3 203.7 L442.5 205.0 L442.2 206.4 L441.6 207.0 L442.1 207.4 L443.0 209.9 L443.0 209.5 L442.0 211.0 L440.8 211.8 L442.3 211.5 L440.9 212.8 L441.2 212.7 L441.3 213.0 L440.6 213.3 L441.7 214.3 L442.0 214.2 L442.0 216.9 L442.4 217.4 L443.0 218.8 L443.4 218.9 L442.8 218.7 L443.2 220.1 L445.1 219.0 L443.9 219.3 L444.8 220.5 L444.8 220.3" fill="none" stroke="#ffffff" stroke-width="0.5" stroke-linejoin="round" stroke-linecap="round"/><path d="M416.2 175.0 L417.7 175.3 L419.7 174.8 L421.3 174.6 L422.7 174.0 L425.0 174.4 L427.1 174.8 L427.8 176.2 L429.3 175.8 L431.4 176.8 L432.5 177.5 L433.2 178.3 L433.1 179.2 L434.3 180.5 L434.7 181.8 L435.0 182.5 M425.0 186.2 L426.1 187.2 L426.6 187.4 L427.9 188.9 L428.7 189.6 L430.0 190.0 L430.9 191.3 L430.5 191.6 L431.9 192.7 L431.4 194.1 L432.5 195.0 L432.2 195.6 L431.8 195.6 L430.8 196.3 L430.2 195.9 L430.0 196.2 L428.8 195.6 L428.7 194.8 L427.6 193.5 L427.2 192.7 L426.2 192.5 L426.3 191.6 L426.2 190.7 L425.8 189.2 L425.8 188.6 L425.0 187.5 M465.0 187.5 L465.6 188.4 L466.4 189.7 L466.6 190.6 L467.3 192.1 L467.5 192.5 L466.1 195.1 L465.2 196.4 L464.8 198.9 L463.3 200.3 L462.5 202.5 L462.2 203.5 L461.8 204.3 L461.0 206.0 L461.1 207.0 L461.0 207.5 M325.0 230.0 L325.7 226.5 L325.6 223.8 L326.1 220.5 L327.3 218.0 L327.5 215.0 L328.1 212.5 L329.7 210.4 L330.4 207.2 L330.9 205.1 L332.5 202.5 L333.5 202.1 L334.2 200.0 L335.5 199.7 L336.2 198.2 L337.5 197.5 M330.0 207.5 L331.6 207.2 L334.1 205.7 L335.8 205.0 L337.4 204.9 L340.0 203.8 L342.3 203.5 L343.8 204.3 L345.7 204.0 L348.5 203.5 L350.0 203.8 L350.6 204.5 L351.1 205.3 L350.4 207.0 L350.8 207.7 L351.2 208.8 L349.9 209.6 L347.4 211.4 L345.7 212.4 L343.9 213.9 L342.5 215.0 L341.2 215.5 L339.8 217.5 L337.8 218.3 L336.3 219.5 L335.0 220.0 L335.0 222.0 L333.9 223.3 L333.1 225.7 L333.5 227.2 L332.5 228.8 M325.0 252.5 L326.3 253.8 L326.0 255.5 L327.8 257.1 L328.4 258.7 L328.8 260.0 M347.5 181.0 L348.4 181.3 L349.2 181.5 L351.1 182.4 L351.6 182.4 L352.5 182.5 L353.0 183.2 L354.4 183.0 L355.2 183.6 L354.8 183.9 L356.0 185.0 L355.4 186.0 L354.8 187.0 L355.0 186.8 L354.5 187.7 L353.8 188.8 L353.0 188.2 L352.1 188.6 L351.0 188.2 L349.7 188.6 L348.8 188.8 L348.1 187.7 L348.8 186.2 L348.6 185.6 L348.1 185.1 L347.5 183.8" fill="none" stroke="#c89850" stroke-width="2.4" stroke-opacity="0.45" stroke-linejoin="round" stroke-linecap="round"/><path d="M416.2 175.0 L417.7 175.3 L419.7 174.8 L421.3 174.6 L422.7 174.0 L425.0 174.4 L427.1 174.8 L427.8 176.2 L429.3 175.8 L431.4 176.8 L432.5 177.5 L433.2 178.3 L433.1 179.2 L434.3 180.5 L434.7 181.8 L435.0 182.5 M425.0 186.2 L426.1 187.2 L426.6 187.4 L427.9 188.9 L428.7 189.6 L430.0 190.0 L430.9 191.3 L430.5 191.6 L431.9 192.7 L431.4 194.1 L432.5 195.0 L432.2 195.6 L431.8 195.6 L430.8 196.3 L430.2 195.9 L430.0 196.2 L428.8 195.6 L428.7 194.8 L427.6 193.5 L427.2 192.7 L426.2 192.5 L426.3 191.6 L426.2 190.7 L425.8 189.2 L425.8 188.6 L425.0 187.5 M465.0 187.5 L465.6 188.4 L466.4 189.7 L466.6 190.6 L467.3 192.1 L467.5 192.5 L466.1 195.1 L465.2 196.4 L464.8 198.9 L463.3 200.3 L462.5 202.5 L462.2 203.5 L461.8 204.3 L461.0 206.0 L461.1 207.0 L461.0 207.5 M325.0 230.0 L325.7 226.5 L325.6 223.8 L326.1 220.5 L327.3 218.0 L327.5 215.0 L328.1 212.5 L329.7 210.4 L330.4 207.2 L330.9 205.1 L332.5 202.5 L333.5 202.1 L334.2 200.0 L335.5 199.7 L336.2 198.2 L337.5 197.5 M330.0 207.5 L331.6 207.2 L334.1 205.7 L335.8 205.0 L337.4 204.9 L340.0 203.8 L342.3 203.5 L343.8 204.3 L345.7 204.0 L348.5 203.5 L350.0 203.8 L350.6 204.5 L351.1 205.3 L350.4 207.0 L350.8 207.7 L351.2 208.8 L349.9 209.6 L347.4 211.4 L345.7 212.4 L343.9 213.9 L342.5 215.0 L341.2 215.5 L339.8 217.5 L337.8 218.3 L336.3 219.5 L335.0 220.0 L335.0 222.0 L333.9 223.3 L333.1 225.7 L333.5 227.2 L332.5 228.8 M325.0 252.5 L326.3 253.8 L326.0 255.5 L327.8 257.1 L328.4 258.7 L328.8 260.0 M347.5 181.0 L348.4 181.3 L349.2 181.5 L351.1 182.4 L351.6 182.4 L352.5 182.5 L353.0 183.2 L354.4 183.0 L355.2 183.6 L354.8 183.9 L356.0 185.0 L355.4 186.0 L354.8 187.0 L355.0 186.8 L354.5 187.7 L353.8 188.8 L353.0 188.2 L352.1 188.6 L351.0 188.2 L349.7 188.6 L348.8 188.8 L348.1 187.7 L348.8 186.2 L348.6 185.6 L348.1 185.1 L347.5 183.8" fill="none" stroke="#ffe8b8" stroke-width="1.1" stroke-linejoin="round" stroke-linecap="round"/><path d="M368.8 163.8 L370.4 162.1 L372.2 160.4 L373.8 158.8 L376.8 157.3 L379.5 156.0 L382.5 154.4 L387.8 153.3 L393.4 151.8 L398.8 150.6 M447.5 166.2 L450.1 166.7 L452.6 167.6 L455.0 168.1 L458.4 170.5 L461.7 172.8 L465.0 175.0 L467.6 178.5 L470.0 181.6 L472.5 185.0 L474.1 188.9 L476.0 193.0 L477.5 197.0" fill="none" stroke="#d8b070" stroke-width="2.2" stroke-opacity="0.45" stroke-linecap="round"/><path d="M368.8 163.8 L370.4 162.1 L372.2 160.4 L373.8 158.8 L376.8 157.3 L379.5 156.0 L382.5 154.4 L387.8 153.3 L393.4 151.8 L398.8 150.6 M447.5 166.2 L450.1 166.7 L452.6 167.6 L455.0 168.1 L458.4 170.5 L461.7 172.8 L465.0 175.0 L467.6 178.5 L470.0 181.6 L472.5 185.0 L474.1 188.9 L476.0 193.0 L477.5 197.0" fill="none" stroke="#fff4dc" stroke-width="1.1" stroke-linecap="round"/>
</svg>
<div class="a" style="left:6px;top:420px;width:789px;height:4px;background:#111112"></div>
<div id="panel" class="a"></div>
<div class="a" style="left:6px;top:425px;width:789px;height:3px;background:linear-gradient(#f4f4f6,#e9e8ea)"></div>
<div class="a" style="left:6px;top:428px;width:789px;height:4px;background:#e2e1e3"></div>
<div class="a" style="left:6px;top:432px;width:789px;height:1px;background:#bcbcbe"></div>
<div class="a" style="left:6px;top:433px;width:789px;height:12px;background:#efeef0"></div>
<div class="a" style="left:6px;top:445px;width:789px;height:1px;background:#b6b6b8"></div>

<!-- segmented control -->
<div class="a" style="left:159.5px;top:438px;width:488px;height:13px;border-radius:3px;border:1px solid #909092;box-shadow:0 0.5px 0.8px rgba(0,0,0,0.12);background:linear-gradient(#fbfbfb,#f0f0f0 50%,#e8e8e8 51%,#f2f2f2)"></div>
<div class="a" style="left:160.5px;top:439px;width:47px;height:11px;border-radius:2px 0 0 2px;background:linear-gradient(#d6dade,#c4c9cf 50%,#bcc1c8 51%,#cfd3d8)"></div>
<div class="div" style="left:207.5px;background:#a8acb2"></div>
<div class="div" style="left:251px"></div>
<div class="div" style="left:291.5px"></div>
<div class="div" style="left:330.5px"></div>
<div class="div" style="left:388px"></div>
<div class="div" style="left:435px"></div>
<div class="div" style="left:490.5px"></div>
<div class="div" style="left:538px"></div>
<div class="div" style="left:592.5px"></div>
<!-- tab icons -->
<svg class="a" style="left:163px;top:440px" width="9" height="8.5" viewBox="0 0 9 8.5"><circle cx="4.3" cy="4.1" r="3.3" fill="#88dcc0" stroke="#0c4a2e" stroke-width="1.5"/><circle cx="4.3" cy="3.4" r="1.4" fill="#b8f4e0"/></svg>
<div class="a" style="left:210.5px;top:443px;width:10px;height:2px;background:#101010"></div>
<div class="a" style="left:255.5px;top:441.5px;width:6px;height:6px;border-radius:50%;background:radial-gradient(circle at 50% 40%,#e070e0,#902090);border:1px solid #601860"></div>
<svg class="a" style="left:296px;top:441px" width="8" height="7" viewBox="0 0 8 7"><path d="M0.8 3.6 L3.6 0.8 L6.4 3.6 L3.6 6.4 Z" fill="#f4f6fa" stroke="#505560" stroke-width="1"/><ellipse cx="6.6" cy="4.5" rx="1.1" ry="1.4" fill="#141030"/></svg>
<svg class="a" style="left:333.4px;top:440.3px" width="10.4" height="7.7" viewBox="0 0 10.4 7.7"><rect x="0" y="0" width="10.4" height="7.7" fill="#e6dede"/><rect x="0.6" y="0.6" width="1.8" height="6.6" fill="#0c0808"/><rect x="7.6" y="0.4" width="2.8" height="7" fill="#140c0c"/><rect x="3" y="0.4" width="4.8" height="7" fill="#b8a4a4"/><rect x="3.8" y="1.8" width="3" height="1.2" fill="#ece0e0"/><rect x="4.6" y="3.2" width="1.6" height="1.4" fill="#3a2a2a"/><rect x="3.6" y="5.2" width="3.2" height="1.6" fill="#d8c8c8"/></svg>
<div class="a" style="left:394px;top:440.5px;width:8px;height:8px;border-radius:50%;border:1.5px solid #90b0e0;background:#eef4fc"></div>
<svg class="a" style="left:439.5px;top:440px" width="8" height="8" viewBox="0 0 8 8"><circle cx="4" cy="4.2" r="3.2" fill="#fafafa" stroke="#484444" stroke-width="1.1"/><path d="M2.6 1 Q4 0.3 5.4 1" fill="none" stroke="#402828" stroke-width="1.2"/><circle cx="4" cy="4.3" r="0.9" fill="#504848"/></svg>
<svg class="a" style="left:494px;top:440.5px" width="7.5" height="6.5" viewBox="0 0 7.5 6.5"><circle cx="3.7" cy="2" r="1.8" fill="#503040"/><circle cx="2.2" cy="4.4" r="1.9" fill="#143048"/><circle cx="5.3" cy="4.4" r="1.9" fill="#2c7040"/><circle cx="3.75" cy="4" r="0.9" fill="#407060"/></svg>
<svg class="a" style="left:541.2px;top:440.8px" width="9.8" height="7.2" viewBox="0 0 9.8 7.2"><rect x="0" y="0" width="9.8" height="7.2" fill="#b88070"/><rect x="0.8" y="0.8" width="8.2" height="5.6" fill="#e8c8bc"/><rect x="1.4" y="1.4" width="2.6" height="2.2" fill="#a86858"/><rect x="5.2" y="1.2" width="3" height="1.6" fill="#c89080"/><rect x="4.6" y="3.8" width="3.6" height="2" fill="#b07060"/><rect x="1.6" y="4.4" width="2" height="1.4" fill="#d8b0a0"/></svg>
<svg class="a" style="left:597px;top:441.5px" width="8" height="6" viewBox="0 0 8 6"><rect x="0" y="1" width="8" height="5" fill="#101010"/><rect x="2.5" y="0" width="3" height="1" fill="#101010"/><circle cx="4" cy="3.5" r="1.4" fill="#e8e8e8"/></svg>
<!-- tab labels -->
<div class="t" style="left:179px;top:439.5px">World</div>
<div class="t" style="left:227.5px;top:439.5px">Line</div>
<div class="t" style="left:271px;top:439.5px">Dot</div>
<div class="t" style="left:313px;top:439.5px">Fill</div>
<div class="t" style="left:351px;top:439.5px">Pinhead</div>
<div class="t" style="left:408.5px;top:439.5px">Wrap</div>
<div class="t" style="left:456px;top:439.5px">Motion</div>
<div class="t" style="left:510.5px;top:439.5px">Color</div>
<div class="t" style="left:559px;top:439.5px">Culling</div>
<div class="t" style="left:612.5px;top:439.5px;letter-spacing:-0.15px">Render</div>

<!-- left column -->
<div class="t r" style="left:0;width:98px;top:460px">Hex Strut Length:</div>
<div class="t r" style="left:0;width:98px;top:490px">Hex Angle Vary:</div>
<div class="t r" style="left:0;width:98px;top:520px">Hex Intelligence (Hi):</div>
<div class="t r" style="left:0;width:98px;top:550px">Show Organic Curves:</div>

<div class="track" style="left:106px;top:462.5px;width:288px"></div>
<div class="track" style="left:106px;top:492.5px;width:288px"></div>
<div class="track" style="left:106px;top:522.5px;width:288px"></div>

<div class="t" style="left:106.5px;top:474px">0</div>
<div class="t" style="left:242.5px;top:474px">3</div>
<div class="t r" style="left:294px;width:100px;top:474px">100</div>
<div class="t" style="left:106.5px;top:504px">0</div>
<div class="t" style="left:242.5px;top:504px">0</div>
<div class="t r" style="left:294px;width:100px;top:504px">180</div>
<div class="t" style="left:106.5px;top:534px">1</div>
<div class="t" style="left:242.5px;top:534px">50</div>
<div class="t r" style="left:294px;width:100px;top:534px">100</div>

<div class="cb" style="left:104px;top:551px"></div>

<!-- right column -->
<div class="t r" style="left:300px;width:178px;top:460px">Hex Strut Vary:</div>
<div class="t r" style="left:300px;width:178px;top:490px">Scale:</div>
<div class="t r" style="left:300px;width:178px;top:520px">Projection Beams:</div>
<div class="t r" style="left:300px;width:178px;top:550px">Show Hex Worms:</div>

<div class="track" style="left:486px;top:462.5px;width:296px"></div>
<div class="track" style="left:494px;top:492.5px;width:288px"></div>

<div class="t" style="left:486.5px;top:474px">0</div>
<div class="t" style="left:627px;top:474px">67</div>
<div class="t r" style="left:682px;width:100px;top:474px">100</div>
<div class="t" style="left:495px;top:504px">-500</div>
<div class="t" style="left:631px;top:504px">-28</div>
<div class="t r" style="left:682px;width:100px;top:504px">500</div>

<div class="cb" style="left:485px;top:528px"></div>
<div class="cb" style="left:485px;top:550.8px"></div>
<svg class="a" style="left:485px;top:548px" width="11" height="12" viewBox="0 0 11 12"><path d="M2.6 6.2 L4.4 8.4 L8.6 2.4" fill="none" stroke="#141820" stroke-width="1.7" stroke-linecap="round" stroke-linejoin="round"/></svg>

<!-- thumbs -->
<svg class="a" style="left:114.1px;top:460.0px" width="11" height="12.5" viewBox="0 0 11 12.5"><defs><linearGradient id="tg" x1="0" y1="0" x2="0" y2="1"><stop offset="0" stop-color="#eef2f8"/><stop offset="0.5" stop-color="#c6d0dc"/><stop offset="1" stop-color="#e4eaf2"/></linearGradient></defs><path d="M3.2 0.6 H7.8 Q10.4 0.6 10.4 3.4 V5.2 Q10.4 7.2 9 8.7 L6.2 11.4 Q5.5 12.1 4.8 11.4 L2 8.7 Q0.6 7.2 0.6 5.2 V3.4 Q0.6 0.6 3.2 0.6 Z" fill="url(#tg)" stroke="#5e6268" stroke-width="1"/></svg><svg class="a" style="left:105.7px;top:490.0px" width="11" height="12.5" viewBox="0 0 11 12.5"><defs><linearGradient id="tg" x1="0" y1="0" x2="0" y2="1"><stop offset="0" stop-color="#eef2f8"/><stop offset="0.5" stop-color="#c6d0dc"/><stop offset="1" stop-color="#e4eaf2"/></linearGradient></defs><path d="M3.2 0.6 H7.8 Q10.4 0.6 10.4 3.4 V5.2 Q10.4 7.2 9 8.7 L6.2 11.4 Q5.5 12.1 4.8 11.4 L2 8.7 Q0.6 7.2 0.6 5.2 V3.4 Q0.6 0.6 3.2 0.6 Z" fill="url(#tg)" stroke="#5e6268" stroke-width="1"/></svg><svg class="a" style="left:243.0px;top:520.5px" width="11" height="12.5" viewBox="0 0 11 12.5"><defs><linearGradient id="tg" x1="0" y1="0" x2="0" y2="1"><stop offset="0" stop-color="#eef2f8"/><stop offset="0.5" stop-color="#c6d0dc"/><stop offset="1" stop-color="#e4eaf2"/></linearGradient></defs><path d="M3.2 0.6 H7.8 Q10.4 0.6 10.4 3.4 V5.2 Q10.4 7.2 9 8.7 L6.2 11.4 Q5.5 12.1 4.8 11.4 L2 8.7 Q0.6 7.2 0.6 5.2 V3.4 Q0.6 0.6 3.2 0.6 Z" fill="url(#tg)" stroke="#5e6268" stroke-width="1"/></svg><svg class="a" style="left:677.2px;top:460.3px" width="11" height="12.5" viewBox="0 0 11 12.5"><defs><linearGradient id="tg" x1="0" y1="0" x2="0" y2="1"><stop offset="0" stop-color="#eef2f8"/><stop offset="0.5" stop-color="#c6d0dc"/><stop offset="1" stop-color="#e4eaf2"/></linearGradient></defs><path d="M3.2 0.6 H7.8 Q10.4 0.6 10.4 3.4 V5.2 Q10.4 7.2 9 8.7 L6.2 11.4 Q5.5 12.1 4.8 11.4 L2 8.7 Q0.6 7.2 0.6 5.2 V3.4 Q0.6 0.6 3.2 0.6 Z" fill="url(#tg)" stroke="#5e6268" stroke-width="1"/></svg><svg class="a" style="left:625.0px;top:490.2px" width="11" height="12.5" viewBox="0 0 11 12.5"><defs><linearGradient id="tg" x1="0" y1="0" x2="0" y2="1"><stop offset="0" stop-color="#eef2f8"/><stop offset="0.5" stop-color="#c6d0dc"/><stop offset="1" stop-color="#e4eaf2"/></linearGradient></defs><path d="M3.2 0.6 H7.8 Q10.4 0.6 10.4 3.4 V5.2 Q10.4 7.2 9 8.7 L6.2 11.4 Q5.5 12.1 4.8 11.4 L2 8.7 Q0.6 7.2 0.6 5.2 V3.4 Q0.6 0.6 3.2 0.6 Z" fill="url(#tg)" stroke="#5e6268" stroke-width="1"/></svg>

<!-- status bar -->
<div class="a" style="left:6px;top:622px;width:789px;height:19px;background:#edecee;border-top:1px solid #dcdbdd"></div>
<div class="a" style="left:6px;top:640px;width:789px;height:1.5px;background:#fdfdfd"></div>
<div class="a" style="left:6px;top:425px;width:1px;height:216px;background:rgba(255,255,255,0.7)"></div>
<div class="a" style="left:794px;top:425px;width:1px;height:216px;background:rgba(255,255,255,0.6)"></div>
<div class="t" style="left:285.5px;top:624.5px;letter-spacing:0.08px;font-size:8.4px">Size:1280x720 FPS:5.6 Zoom:100.0% Res:100%  frm 00130</div>
</body></html>
